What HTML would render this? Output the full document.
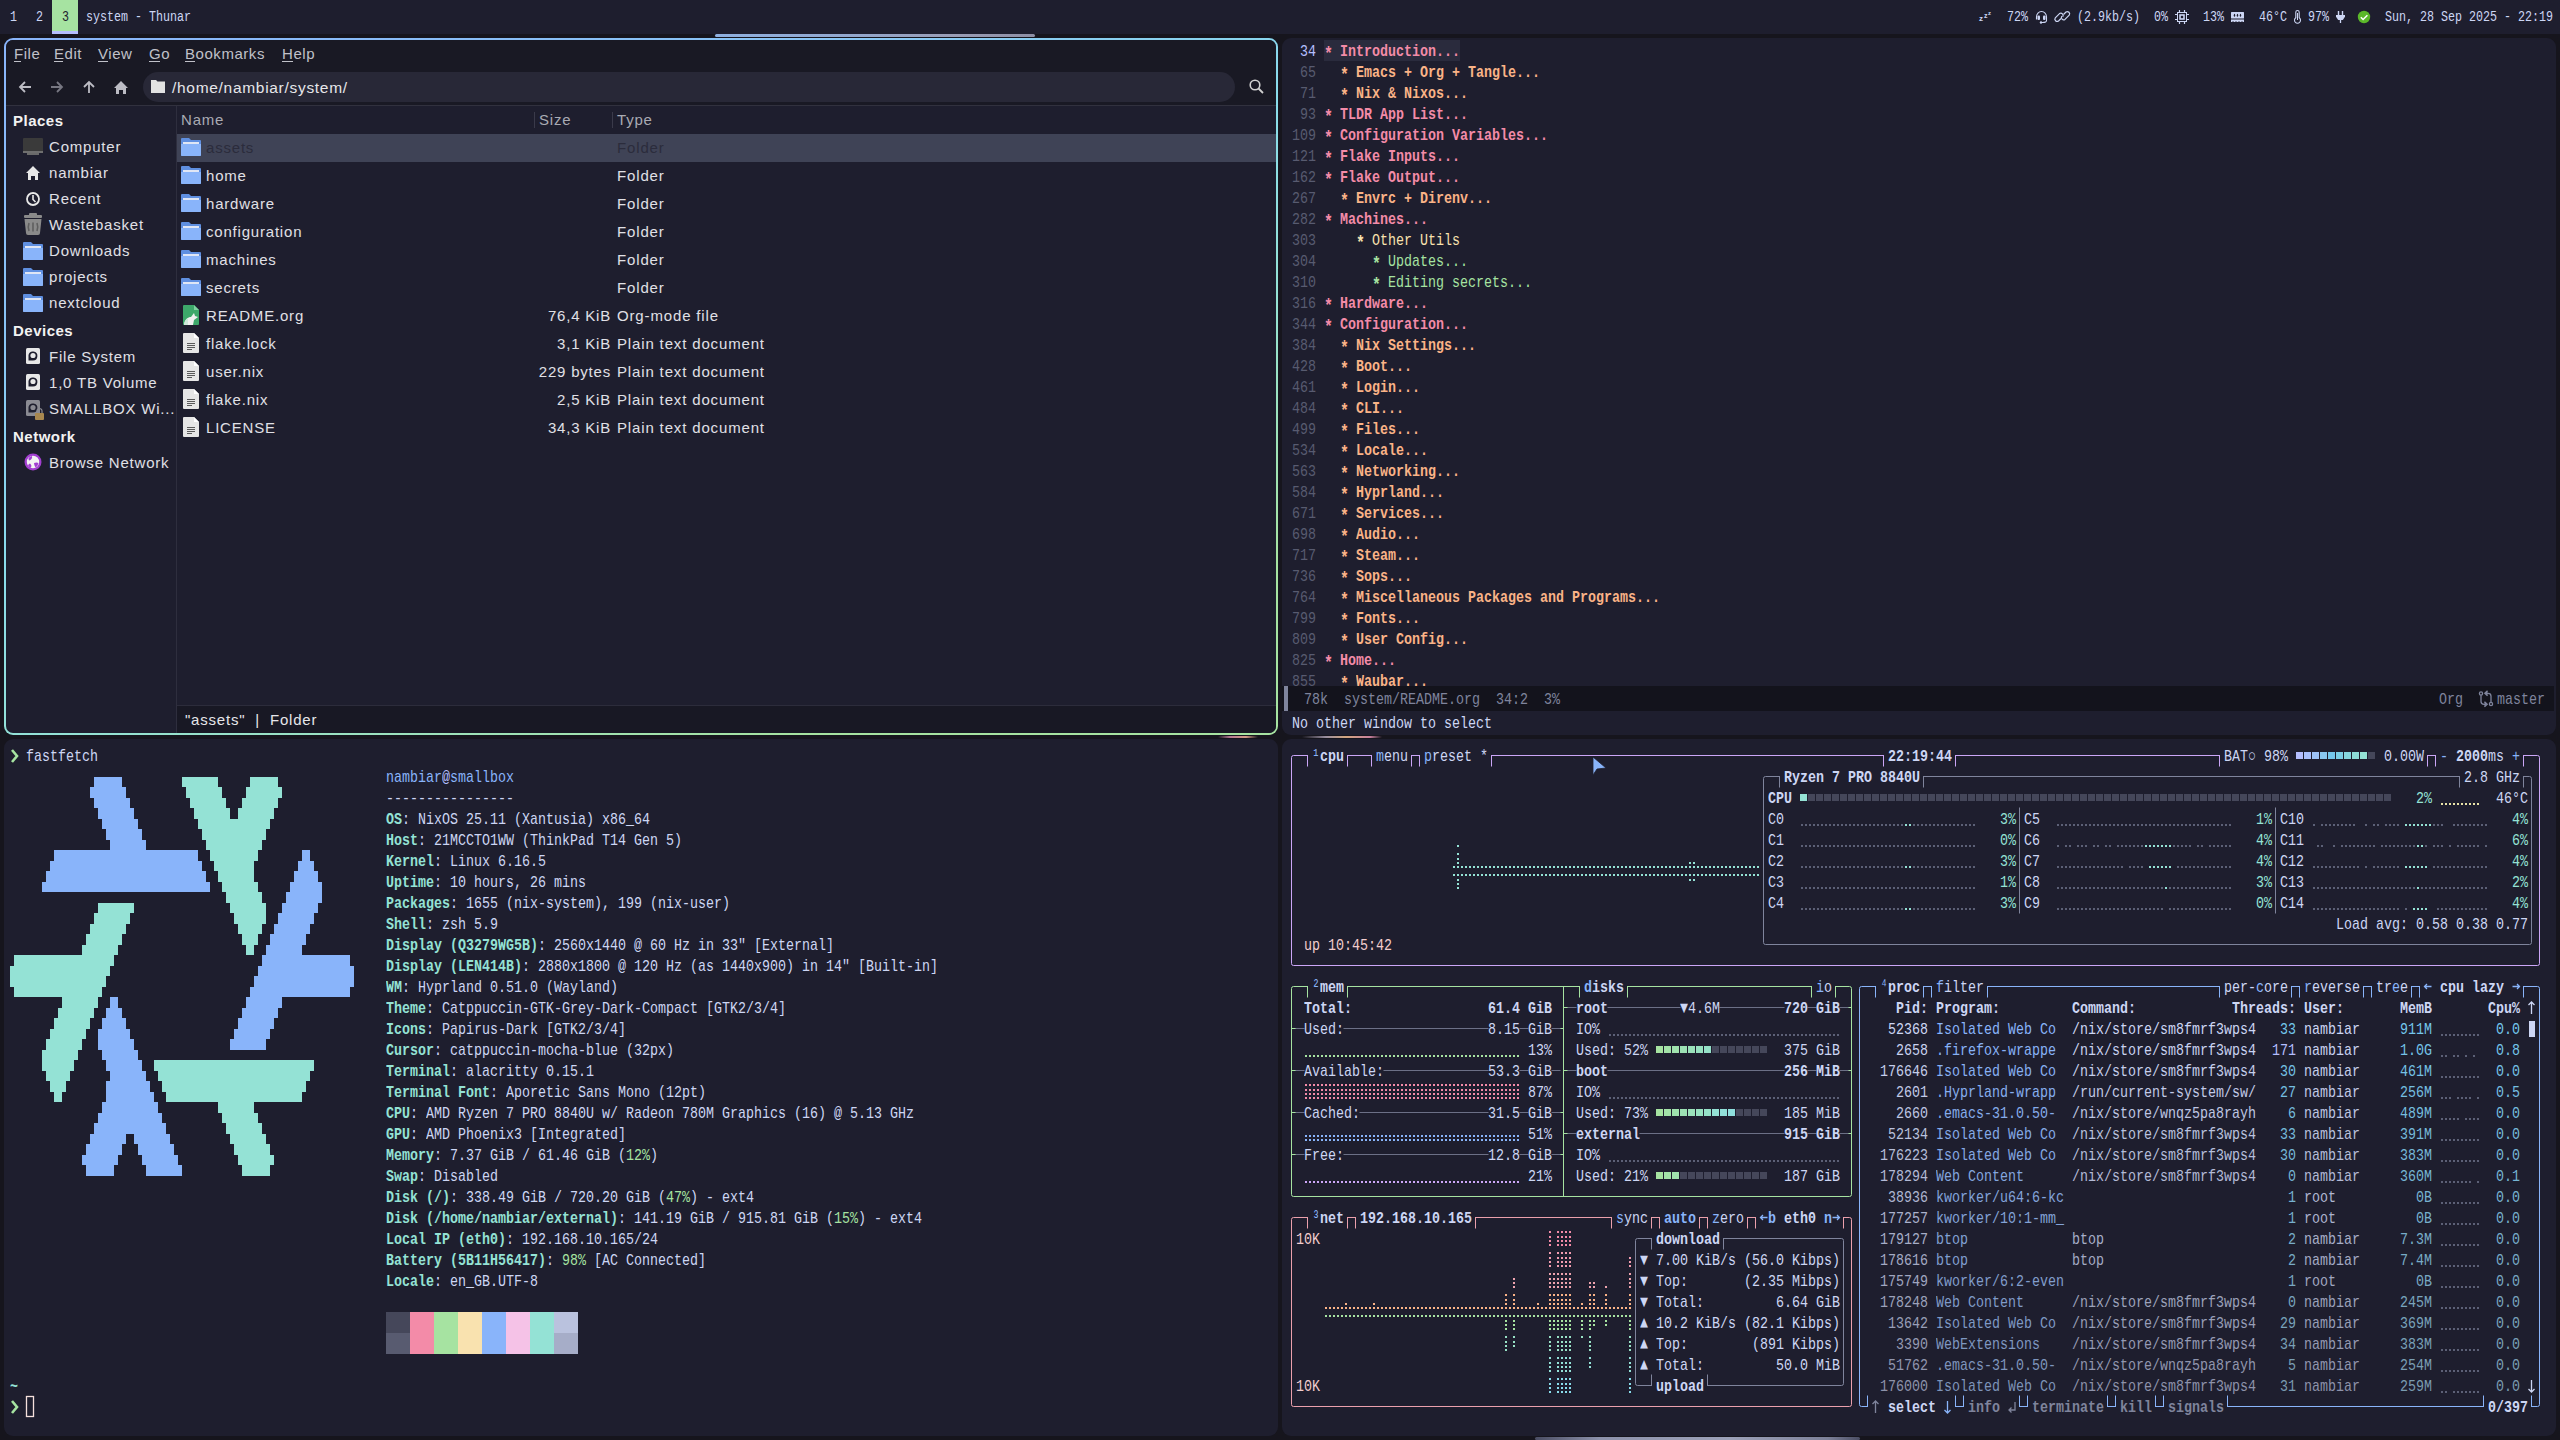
<!DOCTYPE html><html><head><meta charset="utf-8"><style>
html,body{margin:0;padding:0;width:2560px;height:1440px;overflow:hidden;background:#16151d;}
.abs{position:absolute;}
.m{position:absolute;white-space:pre;font-family:"Liberation Mono",monospace;font-size:17px;line-height:21px;transform:scaleX(.78431);transform-origin:0 0;}
.t{position:absolute;white-space:pre;font-family:"Liberation Mono",monospace;font-size:14px;line-height:18px;transform:scaleX(.83333);transform-origin:0 0;}
.s{position:absolute;white-space:pre;font-family:"Liberation Sans",sans-serif;}
.win{position:absolute;overflow:hidden;border-radius:9px;background:#1e1e2e;}
svg{position:absolute;overflow:visible}
</style></head><body><div class="abs" style="left:0;top:0;width:2560px;height:34px;background:#1e1e2e"></div><div class="abs" style="left:52px;top:0;width:26px;height:31px;background:#a6e3a1"></div><div class="abs" style="left:52px;top:31px;width:26px;height:3px;background:#b4befe"></div><span class="t" style="left:9.5px;top:8.27px;color:#cdd6f4;">1</span><span class="t" style="left:35.5px;top:8.27px;color:#cdd6f4;">2</span><span class="t" style="left:61.5px;top:8.27px;color:#1e1e2e;">3</span><span class="t" style="left:86px;top:8.27px;color:#cdd6f4;">system - Thunar</span><span class="t" style="left:2007px;top:8.27px;color:#cdd6f4;">72%</span><span class="t" style="left:2077px;top:8.27px;color:#cdd6f4;">(2.9kb/s)</span><span class="t" style="left:2154px;top:8.27px;color:#cdd6f4;">0%</span><span class="t" style="left:2203px;top:8.27px;color:#cdd6f4;">13%</span><span class="t" style="left:2259px;top:8.27px;color:#cdd6f4;">46°C</span><span class="t" style="left:2308px;top:8.27px;color:#cdd6f4;">97%</span><span class="t" style="left:2385px;top:8.27px;color:#cdd6f4;">Sun, 28 Sep 2025 - 22:19</span><svg width="2560" height="1440" style="left:0;top:0"><text x="1979" y="21" font-family="Liberation Sans" font-size="8" font-weight="bold" fill="#cdd6f4">z</text><text x="1984" y="18" font-family="Liberation Sans" font-size="7" font-weight="bold" fill="#cdd6f4">z</text><text x="1988" y="15" font-family="Liberation Sans" font-size="6" font-weight="bold" fill="#cdd6f4">z</text><path d="M2036.5 19.5V17A5 5.5 0 0 1 2046.5 17V20.5Q2046.5 22.5 2042.5 22.5H2041.5" stroke="#cdd6f4" stroke-width="1.1" fill="none"/><rect x="2037.5" y="15.5" width="2.5" height="4.5" rx="1" fill="#cdd6f4"/><rect x="2043" y="15.5" width="2.5" height="4.5" rx="1" fill="#cdd6f4"/><circle cx="2041" cy="22.5" r="1.2" fill="#cdd6f4"/><g stroke="#cdd6f4" stroke-width="1.2" fill="none"><path d="M2061 18.5L2058.5 21A2.3 2.3 0 0 1 2055.3 17.8L2059.5 13.6A2.3 2.3 0 0 1 2062.7 16.8"/><path d="M2063.5 14.5L2066 12A2.3 2.3 0 0 1 2069.2 15.2L2065 19.4A2.3 2.3 0 0 1 2061.8 16.2"/></g><rect x="2177" y="12" width="10" height="10" fill="#cdd6f4"/><rect x="2178.6" y="13.6" width="6.8" height="6.8" stroke="#1e1e2e" stroke-width="1.2" fill="none"/><rect x="2180.8" y="15.8" width="2.4" height="2.4" fill="#1e1e2e"/><path d="M2179.5 10v2M2184.5 10v2M2179.5 22v2M2184.5 22v2M2175 14.5h2M2175 19.5h2M2187 14.5h2M2187 19.5h2" stroke="#cdd6f4" stroke-width="1.2"/><rect x="2231" y="12" width="13" height="6.5" rx="0.5" fill="#cdd6f4"/><ellipse cx="2234.5" cy="15.2" rx="0.7" ry="1.5" fill="#1e1e2e"/><ellipse cx="2237.5" cy="15.2" rx="0.7" ry="1.5" fill="#1e1e2e"/><ellipse cx="2240.5" cy="15.2" rx="0.7" ry="1.5" fill="#1e1e2e"/><rect x="2231" y="19.5" width="13" height="2.5" fill="#cdd6f4"/><path d="M2233 22v-1M2236 22v-1M2239 22v-1M2242 22v-1" stroke="#1e1e2e" stroke-width="0.8"/><path d="M2295.8 17.8V12.2A1.7 1.7 0 0 1 2299.2 12.2V17.8A3 3 0 1 1 2295.8 17.8Z" stroke="#cdd6f4" stroke-width="1.1" fill="none"/><path d="M2297.5 13v7" stroke="#cdd6f4" stroke-width="1"/><path d="M2338.5 11v4M2342.5 11v4" stroke="#cdd6f4" stroke-width="1.4"/><path d="M2336 15h9v1.8l-2.2 3.2h-4.6l-2.2-3.2z" fill="#cdd6f4"/><path d="M2340.5 20v3" stroke="#cdd6f4" stroke-width="1.3"/><circle cx="2364" cy="17" r="6.2" fill="#5bb82a"/><path d="M2360.8 17.2l2.3 2.3l4.3-4.3" stroke="#ffffff" stroke-width="1.5" fill="none"/></svg><div class="win" style="left:1282px;top:38px;width:1274px;height:697px"></div><div class="win" style="left:4px;top:739px;width:1274px;height:697px"></div><div class="win" style="left:1282px;top:739px;width:1274px;height:697px"></div><div class="abs" style="left:715px;top:34px;width:320px;height:3px;border-radius:2px;background:linear-gradient(90deg,#8fb0e0,#93a8cf 40%,#9a9db5 75%,#8e8fa5)"></div><div class="abs" style="left:1535px;top:1437px;width:325px;height:3px;border-radius:2px;background:linear-gradient(90deg,#4a4d63,#8d92ab 20%,#9ca1b8 60%,#7d8199 90%,#4a4d63)"></div><div class="abs" style="left:1218px;top:736px;width:40px;height:2px;background:linear-gradient(90deg,#16151d,#b57a93 30%,#d49a86 70%,#16151d)"></div><div class="abs" style="left:1302px;top:736px;width:80px;height:2px;background:linear-gradient(90deg,#16151d,#9a8fa0 30%,#d3a67f 55%,#c8809c 85%,#16151d)"></div><div class="abs" style="left:4px;top:38px;width:1274px;height:697px;border-radius:9px;background:linear-gradient(160deg,#89b4fa 0%,#89c4f5 25%,#89dceb 45%,#94e2d5 62%,#a6e3a1 85%,#a6e3a1 100%)"></div><div class="abs" style="left:6px;top:40px;width:1270px;height:693px;border-radius:7px;background:#1e1e2e;overflow:hidden"><div class="abs" style="left:0;top:0;width:1270px;height:65px;background:#191924"></div><div class="abs" style="left:0;top:65px;width:1270px;height:1px;background:#31313e"></div><div class="abs" style="left:170px;top:66px;width:1px;height:627px;background:#2e2e3e"></div><div class="abs" style="left:171px;top:665px;width:1099px;height:1px;background:#2c2c3b"></div><div class="abs" style="left:171px;top:666px;width:1099px;height:27px;background:#181824"></div><div class="abs" style="left:171px;top:94px;width:1099px;height:28px;background:#3f4356"></div><div class="abs" style="left:137px;top:32px;width:1092px;height:30px;border-radius:15px;background:#282837"></div><div class="abs" style="left:528px;top:72px;width:1px;height:16px;background:#3a3a4a"></div><div class="abs" style="left:606px;top:72px;width:1px;height:16px;background:#3a3a4a"></div></div><span class="s" style="left:14px;top:44.30px;font-size:15px;line-height:19px;color:#c0c1c9;letter-spacing:0.55px;">File</span><span class="s" style="left:54px;top:44.30px;font-size:15px;line-height:19px;color:#c0c1c9;letter-spacing:0.55px;">Edit</span><span class="s" style="left:98px;top:44.30px;font-size:15px;line-height:19px;color:#c0c1c9;letter-spacing:0.55px;">View</span><span class="s" style="left:149px;top:44.30px;font-size:15px;line-height:19px;color:#c0c1c9;letter-spacing:0.55px;">Go</span><span class="s" style="left:185px;top:44.30px;font-size:15px;line-height:19px;color:#c0c1c9;letter-spacing:0.55px;">Bookmarks</span><span class="s" style="left:282px;top:44.30px;font-size:15px;line-height:19px;color:#c0c1c9;letter-spacing:0.55px;">Help</span><svg width="2560" height="1440" style="left:0;top:0"><rect x="14" y="61" width="7" height="1" fill="#c0c1c9"/><rect x="54" y="61" width="9" height="1" fill="#c0c1c9"/><rect x="98" y="61" width="10" height="1" fill="#c0c1c9"/><rect x="149" y="61" width="11" height="1" fill="#c0c1c9"/><rect x="185" y="61" width="10" height="1" fill="#c0c1c9"/><rect x="282" y="61" width="11" height="1" fill="#c0c1c9"/><path d="M31 87H20M25 82L20 87L25 92" stroke="#bcbcc4" stroke-width="1.8" fill="none"/><path d="M51 87H62M57 82L62 87L57 92" stroke="#777782" stroke-width="1.8" fill="none"/><path d="M89 93V82M84 87L89 82L94 87" stroke="#bcbcc4" stroke-width="1.8" fill="none"/><path d="M114 88L121 81L128 88H126V94H123V90H119V94H116V88Z" fill="#bcbcc4"/><path d="M151 80h5l1.5 1.5h7.5v11.5h-14z" fill="#e2e2e2"/><circle cx="1255" cy="85" r="4.8" stroke="#d0d0d0" stroke-width="1.6" fill="none"/><path d="M1258.5 88.5L1263 93" stroke="#d0d0d0" stroke-width="1.8"/><rect x="23" y="138" width="20" height="14" rx="1" fill="#3a3a3a"/><rect x="23" y="151" width="20" height="2" fill="#6f6f6f"/><rect x="27" y="153" width="12" height="2" fill="#6a6a6a"/><path d="M26 173L33 166L40 173H38V180H35V176H31V180H28V173Z" fill="#e8e8e8"/><circle cx="33" cy="199" r="6" stroke="#e8e8e8" stroke-width="1.8" fill="none"/><path d="M33 195V199.5L35.5 202" stroke="#e8e8e8" stroke-width="1.6" fill="none"/><rect x="24" y="215" width="18" height="3" rx="1" fill="#8a8a8a"/><rect x="29" y="213" width="8" height="3" rx="1" fill="#8a8a8a"/><path d="M24.5 219h17l-1.5 14a2 2 0 0 1-2 2h-10a2 2 0 0 1-2-2z" fill="#8a8a8a"/><path d="M29 223q-1.5 4 0 8M33 222.5v9M37 223q1.5 4 0 8" stroke="#5e5e5e" stroke-width="1.6" fill="none"/><path d="M23 243a1 1 0 0 1 1-1h7l2 2h9a1 1 0 0 1 1 1v14a1 1 0 0 1-1 1h-18a1 1 0 0 1-1-1z" fill="#5f8fe0"/><rect x="25" y="246" width="16" height="2" fill="#dfe6f5"/><path d="M23 248h20v11a1 1 0 0 1-1 1h-18a1 1 0 0 1-1-1z" fill="#89b4fa"/><path d="M23 269a1 1 0 0 1 1-1h7l2 2h9a1 1 0 0 1 1 1v14a1 1 0 0 1-1 1h-18a1 1 0 0 1-1-1z" fill="#5f8fe0"/><rect x="25" y="272" width="16" height="2" fill="#dfe6f5"/><path d="M23 274h20v11a1 1 0 0 1-1 1h-18a1 1 0 0 1-1-1z" fill="#89b4fa"/><path d="M23 295a1 1 0 0 1 1-1h7l2 2h9a1 1 0 0 1 1 1v14a1 1 0 0 1-1 1h-18a1 1 0 0 1-1-1z" fill="#5f8fe0"/><rect x="25" y="298" width="16" height="2" fill="#dfe6f5"/><path d="M23 300h20v11a1 1 0 0 1-1 1h-18a1 1 0 0 1-1-1z" fill="#89b4fa"/><rect x="26" y="348" width="14" height="16" rx="1.5" fill="#e8e8e8"/><path d="M28.5 360.5V355A4.5 4.5 0 1 1 33 360.5Z" fill="#1e1e2e"/><circle cx="33" cy="355.5" r="2.6" fill="#e8e8e8"/><rect x="26" y="374" width="14" height="16" rx="1.5" fill="#e8e8e8"/><path d="M28.5 386.5V381A4.5 4.5 0 1 1 33 386.5Z" fill="#1e1e2e"/><circle cx="33" cy="381.5" r="2.6" fill="#e8e8e8"/><rect x="26" y="400" width="14" height="16" rx="1.5" fill="#8a8a92"/><path d="M28.5 412.5V407A4.5 4.5 0 1 1 33 412.5Z" fill="#1e1e2e"/><circle cx="33" cy="407.5" r="2.6" fill="#8a8a92"/><rect x="35" y="413" width="9" height="7" rx="1" fill="#a8874f"/><path d="M37 413v-2a2.5 2.5 0 0 1 5 0v2" stroke="#8a8a92" stroke-width="1.2" fill="none"/><circle cx="33" cy="462" r="8.5" fill="#a23fd0"/><circle cx="33" cy="462" r="6.2" fill="#f4f4f4"/><path d="M28.5 458q1.5-1.5 3.5-2q0.5 1.5-0.5 3q-1 1-2.5 1.5q-0.5-1-0.5-2.5zM34 463q2.5-1 4.5 0q-0.5 3-3 4.5q-1.5-2-1.5-4.5zM30 463.5q1 0.5 1.5 2.5q-0.5 1.5-1.5 2.3q-1.5-1.5-2-3q1-1.5 2-1.8z" fill="#a23fd0"/><path d="M181 139a1 1 0 0 1 1-1h7l2 2h9a1 1 0 0 1 1 1v14a1 1 0 0 1-1 1h-18a1 1 0 0 1-1-1z" fill="#5f8fe0"/><rect x="183" y="142" width="16" height="2" fill="#dfe6f5"/><path d="M181 144h20v11a1 1 0 0 1-1 1h-18a1 1 0 0 1-1-1z" fill="#89b4fa"/><path d="M181 167a1 1 0 0 1 1-1h7l2 2h9a1 1 0 0 1 1 1v14a1 1 0 0 1-1 1h-18a1 1 0 0 1-1-1z" fill="#5f8fe0"/><rect x="183" y="170" width="16" height="2" fill="#dfe6f5"/><path d="M181 172h20v11a1 1 0 0 1-1 1h-18a1 1 0 0 1-1-1z" fill="#89b4fa"/><path d="M181 195a1 1 0 0 1 1-1h7l2 2h9a1 1 0 0 1 1 1v14a1 1 0 0 1-1 1h-18a1 1 0 0 1-1-1z" fill="#5f8fe0"/><rect x="183" y="198" width="16" height="2" fill="#dfe6f5"/><path d="M181 200h20v11a1 1 0 0 1-1 1h-18a1 1 0 0 1-1-1z" fill="#89b4fa"/><path d="M181 223a1 1 0 0 1 1-1h7l2 2h9a1 1 0 0 1 1 1v14a1 1 0 0 1-1 1h-18a1 1 0 0 1-1-1z" fill="#5f8fe0"/><rect x="183" y="226" width="16" height="2" fill="#dfe6f5"/><path d="M181 228h20v11a1 1 0 0 1-1 1h-18a1 1 0 0 1-1-1z" fill="#89b4fa"/><path d="M181 251a1 1 0 0 1 1-1h7l2 2h9a1 1 0 0 1 1 1v14a1 1 0 0 1-1 1h-18a1 1 0 0 1-1-1z" fill="#5f8fe0"/><rect x="183" y="254" width="16" height="2" fill="#dfe6f5"/><path d="M181 256h20v11a1 1 0 0 1-1 1h-18a1 1 0 0 1-1-1z" fill="#89b4fa"/><path d="M181 279a1 1 0 0 1 1-1h7l2 2h9a1 1 0 0 1 1 1v14a1 1 0 0 1-1 1h-18a1 1 0 0 1-1-1z" fill="#5f8fe0"/><rect x="183" y="282" width="16" height="2" fill="#dfe6f5"/><path d="M181 284h20v11a1 1 0 0 1-1 1h-18a1 1 0 0 1-1-1z" fill="#89b4fa"/><path d="M184 305h10l5 5v14a1 1 0 0 1-1 1h-14a1 1 0 0 1-1-1v-18a1 1 0 0 1 1-1z" fill="#3da86a"/><path d="M194 305v5h5z" fill="#7fd1a0"/><path d="M184 325c1-6 4-8 7-8l3-4l1 3l3 1l-4 3l-1 5z" fill="#f0f0f0"/><path d="M184 325c0-4 2-6 4-7v7z" fill="#cfe9d9"/><path d="M184 333h10l5 5v14a1 1 0 0 1-1 1h-14a1 1 0 0 1-1-1v-18a1 1 0 0 1 1-1z" fill="#e6e6e6"/><path d="M194 333v5h5z" fill="#ffffff"/><path d="M187 343.5h8M187 345.5h8M187 347.5h8M187 349.5h5" stroke="#5a5a5a" stroke-width="1" fill="none"/><path d="M184 361h10l5 5v14a1 1 0 0 1-1 1h-14a1 1 0 0 1-1-1v-18a1 1 0 0 1 1-1z" fill="#e6e6e6"/><path d="M194 361v5h5z" fill="#ffffff"/><path d="M187 371.5h8M187 373.5h8M187 375.5h8M187 377.5h5" stroke="#5a5a5a" stroke-width="1" fill="none"/><path d="M184 389h10l5 5v14a1 1 0 0 1-1 1h-14a1 1 0 0 1-1-1v-18a1 1 0 0 1 1-1z" fill="#e6e6e6"/><path d="M194 389v5h5z" fill="#ffffff"/><path d="M187 399.5h8M187 401.5h8M187 403.5h8M187 405.5h5" stroke="#5a5a5a" stroke-width="1" fill="none"/><path d="M184 417h10l5 5v14a1 1 0 0 1-1 1h-14a1 1 0 0 1-1-1v-18a1 1 0 0 1 1-1z" fill="#e6e6e6"/><path d="M194 417v5h5z" fill="#ffffff"/><path d="M187 427.5h8M187 429.5h8M187 431.5h8M187 433.5h5" stroke="#5a5a5a" stroke-width="1" fill="none"/></svg><span class="s" style="left:172px;top:78.13px;font-size:15.5px;line-height:19px;color:#e6e6ea;letter-spacing:0.7px;">/home/nambiar/system/</span><span class="s" style="left:13px;top:111.30px;font-size:15px;line-height:19px;color:#f2f2f2;font-weight:bold;letter-spacing:0.5px;">Places</span><span class="s" style="left:49px;top:137.30px;font-size:15px;line-height:19px;color:#e0e0e6;letter-spacing:0.8px;">Computer</span><span class="s" style="left:49px;top:163.30px;font-size:15px;line-height:19px;color:#e0e0e6;letter-spacing:0.8px;">nambiar</span><span class="s" style="left:49px;top:189.30px;font-size:15px;line-height:19px;color:#e0e0e6;letter-spacing:0.8px;">Recent</span><span class="s" style="left:49px;top:215.30px;font-size:15px;line-height:19px;color:#e0e0e6;letter-spacing:0.8px;">Wastebasket</span><span class="s" style="left:49px;top:241.30px;font-size:15px;line-height:19px;color:#e0e0e6;letter-spacing:0.8px;">Downloads</span><span class="s" style="left:49px;top:267.30px;font-size:15px;line-height:19px;color:#e0e0e6;letter-spacing:0.8px;">projects</span><span class="s" style="left:49px;top:293.30px;font-size:15px;line-height:19px;color:#e0e0e6;letter-spacing:0.8px;">nextcloud</span><span class="s" style="left:13px;top:321.30px;font-size:15px;line-height:19px;color:#f2f2f2;font-weight:bold;letter-spacing:0.5px;">Devices</span><span class="s" style="left:49px;top:347.30px;font-size:15px;line-height:19px;color:#e0e0e6;letter-spacing:0.8px;">File System</span><span class="s" style="left:49px;top:373.30px;font-size:15px;line-height:19px;color:#e0e0e6;letter-spacing:0.8px;">1,0 TB Volume</span><span class="s" style="left:49px;top:399.30px;font-size:15px;line-height:19px;color:#e0e0e6;letter-spacing:0.8px;">SMALLBOX Wi...</span><span class="s" style="left:13px;top:427.30px;font-size:15px;line-height:19px;color:#f2f2f2;font-weight:bold;letter-spacing:0.5px;">Network</span><span class="s" style="left:49px;top:453.30px;font-size:15px;line-height:19px;color:#e0e0e6;letter-spacing:0.8px;">Browse Network</span><span class="s" style="left:181px;top:110.30px;font-size:15px;line-height:19px;color:#a9aab3;letter-spacing:0.8px;">Name</span><span class="s" style="left:539px;top:110.30px;font-size:15px;line-height:19px;color:#a9aab3;letter-spacing:0.8px;">Size</span><span class="s" style="left:617px;top:110.30px;font-size:15px;line-height:19px;color:#a9aab3;letter-spacing:0.8px;">Type</span><span class="s" style="left:206px;top:138.30px;font-size:15px;line-height:19px;color:#2b2c3c;letter-spacing:0.8px;">assets</span><span class="s" style="left:617px;top:138.30px;font-size:15px;line-height:19px;color:#2b2c3c;letter-spacing:0.85px;">Folder</span><span class="s" style="left:206px;top:166.30px;font-size:15px;line-height:19px;color:#e0e0e6;letter-spacing:0.8px;">home</span><span class="s" style="left:617px;top:166.30px;font-size:15px;line-height:19px;color:#e0e0e6;letter-spacing:0.85px;">Folder</span><span class="s" style="left:206px;top:194.30px;font-size:15px;line-height:19px;color:#e0e0e6;letter-spacing:0.8px;">hardware</span><span class="s" style="left:617px;top:194.30px;font-size:15px;line-height:19px;color:#e0e0e6;letter-spacing:0.85px;">Folder</span><span class="s" style="left:206px;top:222.30px;font-size:15px;line-height:19px;color:#e0e0e6;letter-spacing:0.8px;">configuration</span><span class="s" style="left:617px;top:222.30px;font-size:15px;line-height:19px;color:#e0e0e6;letter-spacing:0.85px;">Folder</span><span class="s" style="left:206px;top:250.30px;font-size:15px;line-height:19px;color:#e0e0e6;letter-spacing:0.8px;">machines</span><span class="s" style="left:617px;top:250.30px;font-size:15px;line-height:19px;color:#e0e0e6;letter-spacing:0.85px;">Folder</span><span class="s" style="left:206px;top:278.30px;font-size:15px;line-height:19px;color:#e0e0e6;letter-spacing:0.8px;">secrets</span><span class="s" style="left:617px;top:278.30px;font-size:15px;line-height:19px;color:#e0e0e6;letter-spacing:0.85px;">Folder</span><span class="s" style="left:206px;top:306.30px;font-size:15px;line-height:19px;color:#e0e0e6;letter-spacing:0.8px;">README.org</span><span class="s" style="left:250px;top:306.30px;font-size:15px;line-height:19px;color:#e0e0e6;width:361px;text-align:right;letter-spacing:0.8px;">76,4 KiB</span><span class="s" style="left:617px;top:306.30px;font-size:15px;line-height:19px;color:#e0e0e6;letter-spacing:0.85px;">Org-mode file</span><span class="s" style="left:206px;top:334.30px;font-size:15px;line-height:19px;color:#e0e0e6;letter-spacing:0.8px;">flake.lock</span><span class="s" style="left:250px;top:334.30px;font-size:15px;line-height:19px;color:#e0e0e6;width:361px;text-align:right;letter-spacing:0.8px;">3,1 KiB</span><span class="s" style="left:617px;top:334.30px;font-size:15px;line-height:19px;color:#e0e0e6;letter-spacing:0.85px;">Plain text document</span><span class="s" style="left:206px;top:362.30px;font-size:15px;line-height:19px;color:#e0e0e6;letter-spacing:0.8px;">user.nix</span><span class="s" style="left:250px;top:362.30px;font-size:15px;line-height:19px;color:#e0e0e6;width:361px;text-align:right;letter-spacing:0.8px;">229 bytes</span><span class="s" style="left:617px;top:362.30px;font-size:15px;line-height:19px;color:#e0e0e6;letter-spacing:0.85px;">Plain text document</span><span class="s" style="left:206px;top:390.30px;font-size:15px;line-height:19px;color:#e0e0e6;letter-spacing:0.8px;">flake.nix</span><span class="s" style="left:250px;top:390.30px;font-size:15px;line-height:19px;color:#e0e0e6;width:361px;text-align:right;letter-spacing:0.8px;">2,5 KiB</span><span class="s" style="left:617px;top:390.30px;font-size:15px;line-height:19px;color:#e0e0e6;letter-spacing:0.85px;">Plain text document</span><span class="s" style="left:206px;top:418.30px;font-size:15px;line-height:19px;color:#e0e0e6;letter-spacing:0.8px;">LICENSE</span><span class="s" style="left:250px;top:418.30px;font-size:15px;line-height:19px;color:#e0e0e6;width:361px;text-align:right;letter-spacing:0.8px;">34,3 KiB</span><span class="s" style="left:617px;top:418.30px;font-size:15px;line-height:19px;color:#e0e0e6;letter-spacing:0.85px;">Plain text document</span><span class="s" style="left:185px;top:710.30px;font-size:15px;line-height:19px;color:#e6e6ea;letter-spacing:0.8px;">"assets"  |  Folder</span><div class="abs" style="left:1324px;top:40px;width:136px;height:21px;background:#2a2b3d"></div><span class="m" style="left:1300px;top:41px;color:#b4befe;">34</span><span class="m" style="left:1323.5px;top:44px;color:#f38ba8;font-weight:bold;font-size:19px;">*</span><span class="m" style="left:1340px;top:41px;color:#f38ba8;font-weight:bold;">Introduction...</span><span class="m" style="left:1300px;top:62px;color:#585b70;">65</span><span class="m" style="left:1339.5px;top:65px;color:#fab387;font-weight:bold;font-size:19px;">*</span><span class="m" style="left:1356px;top:62px;color:#fab387;font-weight:bold;">Emacs + Org + Tangle...</span><span class="m" style="left:1300px;top:83px;color:#585b70;">71</span><span class="m" style="left:1339.5px;top:86px;color:#fab387;font-weight:bold;font-size:19px;">*</span><span class="m" style="left:1356px;top:83px;color:#fab387;font-weight:bold;">Nix &amp; Nixos...</span><span class="m" style="left:1300px;top:104px;color:#585b70;">93</span><span class="m" style="left:1323.5px;top:107px;color:#f38ba8;font-weight:bold;font-size:19px;">*</span><span class="m" style="left:1340px;top:104px;color:#f38ba8;font-weight:bold;">TLDR App List...</span><span class="m" style="left:1292px;top:125px;color:#585b70;">109</span><span class="m" style="left:1323.5px;top:128px;color:#f38ba8;font-weight:bold;font-size:19px;">*</span><span class="m" style="left:1340px;top:125px;color:#f38ba8;font-weight:bold;">Configuration Variables...</span><span class="m" style="left:1292px;top:146px;color:#585b70;">121</span><span class="m" style="left:1323.5px;top:149px;color:#f38ba8;font-weight:bold;font-size:19px;">*</span><span class="m" style="left:1340px;top:146px;color:#f38ba8;font-weight:bold;">Flake Inputs...</span><span class="m" style="left:1292px;top:167px;color:#585b70;">162</span><span class="m" style="left:1323.5px;top:170px;color:#f38ba8;font-weight:bold;font-size:19px;">*</span><span class="m" style="left:1340px;top:167px;color:#f38ba8;font-weight:bold;">Flake Output...</span><span class="m" style="left:1292px;top:188px;color:#585b70;">267</span><span class="m" style="left:1339.5px;top:191px;color:#fab387;font-weight:bold;font-size:19px;">*</span><span class="m" style="left:1356px;top:188px;color:#fab387;font-weight:bold;">Envrc + Direnv...</span><span class="m" style="left:1292px;top:209px;color:#585b70;">282</span><span class="m" style="left:1323.5px;top:212px;color:#f38ba8;font-weight:bold;font-size:19px;">*</span><span class="m" style="left:1340px;top:209px;color:#f38ba8;font-weight:bold;">Machines...</span><span class="m" style="left:1292px;top:230px;color:#585b70;">303</span><span class="m" style="left:1355.5px;top:233px;color:#f9e2af;font-weight:bold;font-size:19px;">*</span><span class="m" style="left:1372px;top:230px;color:#f9e2af;">Other Utils</span><span class="m" style="left:1292px;top:251px;color:#585b70;">304</span><span class="m" style="left:1371.5px;top:254px;color:#a6e3a1;font-weight:bold;font-size:19px;">*</span><span class="m" style="left:1388px;top:251px;color:#a6e3a1;">Updates...</span><span class="m" style="left:1292px;top:272px;color:#585b70;">310</span><span class="m" style="left:1371.5px;top:275px;color:#a6e3a1;font-weight:bold;font-size:19px;">*</span><span class="m" style="left:1388px;top:272px;color:#a6e3a1;">Editing secrets...</span><span class="m" style="left:1292px;top:293px;color:#585b70;">316</span><span class="m" style="left:1323.5px;top:296px;color:#f38ba8;font-weight:bold;font-size:19px;">*</span><span class="m" style="left:1340px;top:293px;color:#f38ba8;font-weight:bold;">Hardware...</span><span class="m" style="left:1292px;top:314px;color:#585b70;">344</span><span class="m" style="left:1323.5px;top:317px;color:#f38ba8;font-weight:bold;font-size:19px;">*</span><span class="m" style="left:1340px;top:314px;color:#f38ba8;font-weight:bold;">Configuration...</span><span class="m" style="left:1292px;top:335px;color:#585b70;">384</span><span class="m" style="left:1339.5px;top:338px;color:#fab387;font-weight:bold;font-size:19px;">*</span><span class="m" style="left:1356px;top:335px;color:#fab387;font-weight:bold;">Nix Settings...</span><span class="m" style="left:1292px;top:356px;color:#585b70;">428</span><span class="m" style="left:1339.5px;top:359px;color:#fab387;font-weight:bold;font-size:19px;">*</span><span class="m" style="left:1356px;top:356px;color:#fab387;font-weight:bold;">Boot...</span><span class="m" style="left:1292px;top:377px;color:#585b70;">461</span><span class="m" style="left:1339.5px;top:380px;color:#fab387;font-weight:bold;font-size:19px;">*</span><span class="m" style="left:1356px;top:377px;color:#fab387;font-weight:bold;">Login...</span><span class="m" style="left:1292px;top:398px;color:#585b70;">484</span><span class="m" style="left:1339.5px;top:401px;color:#fab387;font-weight:bold;font-size:19px;">*</span><span class="m" style="left:1356px;top:398px;color:#fab387;font-weight:bold;">CLI...</span><span class="m" style="left:1292px;top:419px;color:#585b70;">499</span><span class="m" style="left:1339.5px;top:422px;color:#fab387;font-weight:bold;font-size:19px;">*</span><span class="m" style="left:1356px;top:419px;color:#fab387;font-weight:bold;">Files...</span><span class="m" style="left:1292px;top:440px;color:#585b70;">534</span><span class="m" style="left:1339.5px;top:443px;color:#fab387;font-weight:bold;font-size:19px;">*</span><span class="m" style="left:1356px;top:440px;color:#fab387;font-weight:bold;">Locale...</span><span class="m" style="left:1292px;top:461px;color:#585b70;">563</span><span class="m" style="left:1339.5px;top:464px;color:#fab387;font-weight:bold;font-size:19px;">*</span><span class="m" style="left:1356px;top:461px;color:#fab387;font-weight:bold;">Networking...</span><span class="m" style="left:1292px;top:482px;color:#585b70;">584</span><span class="m" style="left:1339.5px;top:485px;color:#fab387;font-weight:bold;font-size:19px;">*</span><span class="m" style="left:1356px;top:482px;color:#fab387;font-weight:bold;">Hyprland...</span><span class="m" style="left:1292px;top:503px;color:#585b70;">671</span><span class="m" style="left:1339.5px;top:506px;color:#fab387;font-weight:bold;font-size:19px;">*</span><span class="m" style="left:1356px;top:503px;color:#fab387;font-weight:bold;">Services...</span><span class="m" style="left:1292px;top:524px;color:#585b70;">698</span><span class="m" style="left:1339.5px;top:527px;color:#fab387;font-weight:bold;font-size:19px;">*</span><span class="m" style="left:1356px;top:524px;color:#fab387;font-weight:bold;">Audio...</span><span class="m" style="left:1292px;top:545px;color:#585b70;">717</span><span class="m" style="left:1339.5px;top:548px;color:#fab387;font-weight:bold;font-size:19px;">*</span><span class="m" style="left:1356px;top:545px;color:#fab387;font-weight:bold;">Steam...</span><span class="m" style="left:1292px;top:566px;color:#585b70;">736</span><span class="m" style="left:1339.5px;top:569px;color:#fab387;font-weight:bold;font-size:19px;">*</span><span class="m" style="left:1356px;top:566px;color:#fab387;font-weight:bold;">Sops...</span><span class="m" style="left:1292px;top:587px;color:#585b70;">764</span><span class="m" style="left:1339.5px;top:590px;color:#fab387;font-weight:bold;font-size:19px;">*</span><span class="m" style="left:1356px;top:587px;color:#fab387;font-weight:bold;">Miscellaneous Packages and Programs...</span><span class="m" style="left:1292px;top:608px;color:#585b70;">799</span><span class="m" style="left:1339.5px;top:611px;color:#fab387;font-weight:bold;font-size:19px;">*</span><span class="m" style="left:1356px;top:608px;color:#fab387;font-weight:bold;">Fonts...</span><span class="m" style="left:1292px;top:629px;color:#585b70;">809</span><span class="m" style="left:1339.5px;top:632px;color:#fab387;font-weight:bold;font-size:19px;">*</span><span class="m" style="left:1356px;top:629px;color:#fab387;font-weight:bold;">User Config...</span><span class="m" style="left:1292px;top:650px;color:#585b70;">825</span><span class="m" style="left:1323.5px;top:653px;color:#f38ba8;font-weight:bold;font-size:19px;">*</span><span class="m" style="left:1340px;top:650px;color:#f38ba8;font-weight:bold;">Home...</span><span class="m" style="left:1292px;top:671px;color:#585b70;">855</span><span class="m" style="left:1339.5px;top:674px;color:#fab387;font-weight:bold;font-size:19px;">*</span><span class="m" style="left:1356px;top:671px;color:#fab387;font-weight:bold;">Waubar...</span><div class="abs" style="left:1282px;top:686px;width:1272px;height:25px;background:#13131c"></div><div class="abs" style="left:1284px;top:686px;width:4px;height:25px;background:#7f849c"></div><span class="m" style="left:1304px;top:689px;color:#7f849c;">78k  system/README.org  34:2  3%</span><span class="m" style="left:2439px;top:689px;color:#7f849c;">Org</span><span class="m" style="left:2497px;top:689px;color:#7f849c;">master</span><svg width="2560" height="1440" style="left:0;top:0"><g stroke="#7f849c" stroke-width="1.3" fill="none"><circle cx="2481" cy="693.5" r="1.6"/><path d="M2481 695.2V701.5Q2481 704.3 2484 704.3H2485.5"/><path d="M2484.5 701.8L2487.2 704.3L2484.5 706.8" fill="#7f849c"/><circle cx="2491" cy="704" r="1.6"/><path d="M2491 702.3V696Q2491 693.3 2488 693.3H2486.5"/><path d="M2487.5 690.8L2484.8 693.3L2487.5 695.8" fill="#7f849c"/></g></svg><span class="m" style="left:1292px;top:713px;color:#cdd6f4;">No other window to select</span><svg class="abs" width="2560" height="1440" style="left:0;top:0" shape-rendering="crispEdges"><rect x="94" y="777" width="28" height="10" fill="#89b4fa"/><rect x="182" y="777" width="36" height="10" fill="#94e2d5"/><rect x="250" y="777" width="28" height="10" fill="#94e2d5"/><rect x="90" y="787" width="36" height="11" fill="#89b4fa"/><rect x="186" y="787" width="36" height="11" fill="#94e2d5"/><rect x="246" y="787" width="36" height="11" fill="#94e2d5"/><rect x="94" y="798" width="36" height="10" fill="#89b4fa"/><rect x="190" y="798" width="36" height="10" fill="#94e2d5"/><rect x="242" y="798" width="36" height="10" fill="#94e2d5"/><rect x="98" y="808" width="36" height="11" fill="#89b4fa"/><rect x="194" y="808" width="36" height="11" fill="#94e2d5"/><rect x="238" y="808" width="36" height="11" fill="#94e2d5"/><rect x="102" y="819" width="36" height="10" fill="#89b4fa"/><rect x="198" y="819" width="72" height="10" fill="#94e2d5"/><rect x="106" y="829" width="36" height="11" fill="#89b4fa"/><rect x="202" y="829" width="64" height="11" fill="#94e2d5"/><rect x="110" y="840" width="36" height="10" fill="#89b4fa"/><rect x="206" y="840" width="56" height="10" fill="#94e2d5"/><rect x="54" y="850" width="144" height="11" fill="#89b4fa"/><rect x="210" y="850" width="48" height="11" fill="#94e2d5"/><rect x="302" y="850" width="8" height="11" fill="#89b4fa"/><rect x="50" y="861" width="152" height="10" fill="#89b4fa"/><rect x="214" y="861" width="40" height="10" fill="#94e2d5"/><rect x="298" y="861" width="16" height="10" fill="#89b4fa"/><rect x="46" y="871" width="160" height="11" fill="#89b4fa"/><rect x="218" y="871" width="36" height="11" fill="#94e2d5"/><rect x="294" y="871" width="24" height="11" fill="#89b4fa"/><rect x="42" y="882" width="168" height="10" fill="#89b4fa"/><rect x="222" y="882" width="36" height="10" fill="#94e2d5"/><rect x="290" y="882" width="32" height="10" fill="#89b4fa"/><rect x="226" y="892" width="36" height="11" fill="#94e2d5"/><rect x="286" y="892" width="36" height="11" fill="#89b4fa"/><rect x="98" y="903" width="36" height="10" fill="#94e2d5"/><rect x="230" y="903" width="36" height="10" fill="#94e2d5"/><rect x="282" y="903" width="36" height="10" fill="#89b4fa"/><rect x="94" y="913" width="36" height="11" fill="#94e2d5"/><rect x="234" y="913" width="32" height="11" fill="#94e2d5"/><rect x="278" y="913" width="36" height="11" fill="#89b4fa"/><rect x="90" y="924" width="36" height="10" fill="#94e2d5"/><rect x="238" y="924" width="24" height="10" fill="#94e2d5"/><rect x="274" y="924" width="36" height="10" fill="#89b4fa"/><rect x="86" y="934" width="36" height="11" fill="#94e2d5"/><rect x="242" y="934" width="16" height="11" fill="#94e2d5"/><rect x="270" y="934" width="36" height="11" fill="#89b4fa"/><rect x="82" y="945" width="36" height="10" fill="#94e2d5"/><rect x="246" y="945" width="8" height="10" fill="#94e2d5"/><rect x="266" y="945" width="36" height="10" fill="#89b4fa"/><rect x="14" y="955" width="100" height="11" fill="#94e2d5"/><rect x="262" y="955" width="88" height="11" fill="#89b4fa"/><rect x="10" y="966" width="100" height="10" fill="#94e2d5"/><rect x="258" y="966" width="96" height="10" fill="#89b4fa"/><rect x="10" y="976" width="96" height="11" fill="#94e2d5"/><rect x="254" y="976" width="100" height="11" fill="#89b4fa"/><rect x="14" y="987" width="88" height="10" fill="#94e2d5"/><rect x="250" y="987" width="100" height="10" fill="#89b4fa"/><rect x="62" y="997" width="36" height="11" fill="#94e2d5"/><rect x="110" y="997" width="8" height="11" fill="#89b4fa"/><rect x="246" y="997" width="36" height="11" fill="#89b4fa"/><rect x="58" y="1008" width="36" height="10" fill="#94e2d5"/><rect x="106" y="1008" width="16" height="10" fill="#89b4fa"/><rect x="242" y="1008" width="36" height="10" fill="#89b4fa"/><rect x="54" y="1018" width="36" height="11" fill="#94e2d5"/><rect x="102" y="1018" width="24" height="11" fill="#89b4fa"/><rect x="238" y="1018" width="36" height="11" fill="#89b4fa"/><rect x="50" y="1029" width="36" height="10" fill="#94e2d5"/><rect x="98" y="1029" width="32" height="10" fill="#89b4fa"/><rect x="234" y="1029" width="36" height="10" fill="#89b4fa"/><rect x="46" y="1039" width="36" height="11" fill="#94e2d5"/><rect x="98" y="1039" width="36" height="11" fill="#89b4fa"/><rect x="230" y="1039" width="36" height="11" fill="#89b4fa"/><rect x="42" y="1050" width="36" height="10" fill="#94e2d5"/><rect x="102" y="1050" width="36" height="10" fill="#89b4fa"/><rect x="42" y="1060" width="32" height="11" fill="#94e2d5"/><rect x="106" y="1060" width="36" height="11" fill="#89b4fa"/><rect x="154" y="1060" width="160" height="11" fill="#94e2d5"/><rect x="46" y="1071" width="24" height="10" fill="#94e2d5"/><rect x="110" y="1071" width="36" height="10" fill="#89b4fa"/><rect x="158" y="1071" width="152" height="10" fill="#94e2d5"/><rect x="50" y="1081" width="16" height="11" fill="#94e2d5"/><rect x="106" y="1081" width="44" height="11" fill="#89b4fa"/><rect x="162" y="1081" width="144" height="11" fill="#94e2d5"/><rect x="54" y="1092" width="8" height="10" fill="#94e2d5"/><rect x="106" y="1092" width="48" height="10" fill="#89b4fa"/><rect x="166" y="1092" width="136" height="10" fill="#94e2d5"/><rect x="102" y="1102" width="56" height="11" fill="#89b4fa"/><rect x="218" y="1102" width="36" height="11" fill="#94e2d5"/><rect x="98" y="1113" width="64" height="10" fill="#89b4fa"/><rect x="222" y="1113" width="36" height="10" fill="#94e2d5"/><rect x="94" y="1123" width="72" height="11" fill="#89b4fa"/><rect x="226" y="1123" width="36" height="11" fill="#94e2d5"/><rect x="90" y="1134" width="36" height="10" fill="#89b4fa"/><rect x="134" y="1134" width="36" height="10" fill="#89b4fa"/><rect x="230" y="1134" width="36" height="10" fill="#94e2d5"/><rect x="86" y="1144" width="36" height="11" fill="#89b4fa"/><rect x="138" y="1144" width="36" height="11" fill="#89b4fa"/><rect x="234" y="1144" width="36" height="11" fill="#94e2d5"/><rect x="82" y="1155" width="36" height="10" fill="#89b4fa"/><rect x="142" y="1155" width="36" height="10" fill="#89b4fa"/><rect x="238" y="1155" width="36" height="10" fill="#94e2d5"/><rect x="86" y="1165" width="28" height="11" fill="#89b4fa"/><rect x="146" y="1165" width="36" height="11" fill="#89b4fa"/><rect x="242" y="1165" width="28" height="11" fill="#94e2d5"/></svg><svg class="abs" width="2560" height="1440" style="left:0;top:0"><rect x="386" y="1312" width="24" height="21" fill="#45475a" shape-rendering="crispEdges"/><rect x="386" y="1333" width="24" height="21" fill="#585b70" shape-rendering="crispEdges"/><rect x="410" y="1312" width="24" height="21" fill="#f38ba8" shape-rendering="crispEdges"/><rect x="410" y="1333" width="24" height="21" fill="#f38ba8" shape-rendering="crispEdges"/><rect x="434" y="1312" width="24" height="21" fill="#a6e3a1" shape-rendering="crispEdges"/><rect x="434" y="1333" width="24" height="21" fill="#a6e3a1" shape-rendering="crispEdges"/><rect x="458" y="1312" width="24" height="21" fill="#f9e2af" shape-rendering="crispEdges"/><rect x="458" y="1333" width="24" height="21" fill="#f9e2af" shape-rendering="crispEdges"/><rect x="482" y="1312" width="24" height="21" fill="#89b4fa" shape-rendering="crispEdges"/><rect x="482" y="1333" width="24" height="21" fill="#89b4fa" shape-rendering="crispEdges"/><rect x="506" y="1312" width="24" height="21" fill="#f5c2e7" shape-rendering="crispEdges"/><rect x="506" y="1333" width="24" height="21" fill="#f5c2e7" shape-rendering="crispEdges"/><rect x="530" y="1312" width="24" height="21" fill="#94e2d5" shape-rendering="crispEdges"/><rect x="530" y="1333" width="24" height="21" fill="#94e2d5" shape-rendering="crispEdges"/><rect x="554" y="1312" width="24" height="21" fill="#bac2de" shape-rendering="crispEdges"/><rect x="554" y="1333" width="24" height="21" fill="#a6adc8" shape-rendering="crispEdges"/><path d="M12 750L17 756L12 762" stroke="#a6e3a1" stroke-width="2.6" fill="none" stroke-linejoin="miter"/><path d="M12 1401L17 1407L12 1413" stroke="#a6e3a1" stroke-width="2.6" fill="none" stroke-linejoin="miter"/><rect x="26.5" y="1396.5" width="7" height="20" stroke="#f5e0dc" stroke-width="1.3" fill="none"/></svg><span class="m" style="left:26px;top:746px;color:#cdd6f4;">fastfetch</span><span class="m" style="left:386px;top:767px;color:#89b4fa;">nambiar</span><span class="m" style="left:442px;top:767px;color:#b4befe;">@</span><span class="m" style="left:450px;top:767px;color:#89b4fa;">smallbox</span><span class="m" style="left:386px;top:788px;color:#cdd6f4;">----------------</span><span class="m" style="left:386px;top:809px;color:#94e2d5;font-weight:bold;">OS</span><span class="m" style="left:402px;top:809px;color:#cdd6f4;">:</span><span class="m" style="left:418px;top:809px;color:#cdd6f4;">NixOS 25.11 (Xantusia) x86_64</span><span class="m" style="left:386px;top:830px;color:#94e2d5;font-weight:bold;">Host</span><span class="m" style="left:418px;top:830px;color:#cdd6f4;">:</span><span class="m" style="left:434px;top:830px;color:#cdd6f4;">21MCCTO1WW (ThinkPad T14 Gen 5)</span><span class="m" style="left:386px;top:851px;color:#94e2d5;font-weight:bold;">Kernel</span><span class="m" style="left:434px;top:851px;color:#cdd6f4;">:</span><span class="m" style="left:450px;top:851px;color:#cdd6f4;">Linux 6.16.5</span><span class="m" style="left:386px;top:872px;color:#94e2d5;font-weight:bold;">Uptime</span><span class="m" style="left:434px;top:872px;color:#cdd6f4;">:</span><span class="m" style="left:450px;top:872px;color:#cdd6f4;">10 hours, 26 mins</span><span class="m" style="left:386px;top:893px;color:#94e2d5;font-weight:bold;">Packages</span><span class="m" style="left:450px;top:893px;color:#cdd6f4;">:</span><span class="m" style="left:466px;top:893px;color:#cdd6f4;">1655 (nix-system), 199 (nix-user)</span><span class="m" style="left:386px;top:914px;color:#94e2d5;font-weight:bold;">Shell</span><span class="m" style="left:426px;top:914px;color:#cdd6f4;">:</span><span class="m" style="left:442px;top:914px;color:#cdd6f4;">zsh 5.9</span><span class="m" style="left:386px;top:935px;color:#94e2d5;font-weight:bold;">Display (Q3279WG5B)</span><span class="m" style="left:538px;top:935px;color:#cdd6f4;">:</span><span class="m" style="left:554px;top:935px;color:#cdd6f4;">2560x1440 @ 60 Hz in 33" [External]</span><span class="m" style="left:386px;top:956px;color:#94e2d5;font-weight:bold;">Display (LEN414B)</span><span class="m" style="left:522px;top:956px;color:#cdd6f4;">:</span><span class="m" style="left:538px;top:956px;color:#cdd6f4;">2880x1800 @ 120 Hz (as 1440x900) in 14" [Built-in]</span><span class="m" style="left:386px;top:977px;color:#94e2d5;font-weight:bold;">WM</span><span class="m" style="left:402px;top:977px;color:#cdd6f4;">:</span><span class="m" style="left:418px;top:977px;color:#cdd6f4;">Hyprland 0.51.0 (Wayland)</span><span class="m" style="left:386px;top:998px;color:#94e2d5;font-weight:bold;">Theme</span><span class="m" style="left:426px;top:998px;color:#cdd6f4;">:</span><span class="m" style="left:442px;top:998px;color:#cdd6f4;">Catppuccin-GTK-Grey-Dark-Compact [GTK2/3/4]</span><span class="m" style="left:386px;top:1019px;color:#94e2d5;font-weight:bold;">Icons</span><span class="m" style="left:426px;top:1019px;color:#cdd6f4;">:</span><span class="m" style="left:442px;top:1019px;color:#cdd6f4;">Papirus-Dark [GTK2/3/4]</span><span class="m" style="left:386px;top:1040px;color:#94e2d5;font-weight:bold;">Cursor</span><span class="m" style="left:434px;top:1040px;color:#cdd6f4;">:</span><span class="m" style="left:450px;top:1040px;color:#cdd6f4;">catppuccin-mocha-blue (32px)</span><span class="m" style="left:386px;top:1061px;color:#94e2d5;font-weight:bold;">Terminal</span><span class="m" style="left:450px;top:1061px;color:#cdd6f4;">:</span><span class="m" style="left:466px;top:1061px;color:#cdd6f4;">alacritty 0.15.1</span><span class="m" style="left:386px;top:1082px;color:#94e2d5;font-weight:bold;">Terminal Font</span><span class="m" style="left:490px;top:1082px;color:#cdd6f4;">:</span><span class="m" style="left:506px;top:1082px;color:#cdd6f4;">Aporetic Sans Mono (12pt)</span><span class="m" style="left:386px;top:1103px;color:#94e2d5;font-weight:bold;">CPU</span><span class="m" style="left:410px;top:1103px;color:#cdd6f4;">:</span><span class="m" style="left:426px;top:1103px;color:#cdd6f4;">AMD Ryzen 7 PRO 8840U w/ Radeon 780M Graphics (16) @ 5.13 GHz</span><span class="m" style="left:386px;top:1124px;color:#94e2d5;font-weight:bold;">GPU</span><span class="m" style="left:410px;top:1124px;color:#cdd6f4;">:</span><span class="m" style="left:426px;top:1124px;color:#cdd6f4;">AMD Phoenix3 [Integrated]</span><span class="m" style="left:386px;top:1145px;color:#94e2d5;font-weight:bold;">Memory</span><span class="m" style="left:434px;top:1145px;color:#cdd6f4;">:</span><span class="m" style="left:450px;top:1145px;color:#cdd6f4;">7.37 GiB / 61.46 GiB (</span><span class="m" style="left:626px;top:1145px;color:#a6e3a1;">12%</span><span class="m" style="left:650px;top:1145px;color:#cdd6f4;">)</span><span class="m" style="left:386px;top:1166px;color:#94e2d5;font-weight:bold;">Swap</span><span class="m" style="left:418px;top:1166px;color:#cdd6f4;">:</span><span class="m" style="left:434px;top:1166px;color:#cdd6f4;">Disabled</span><span class="m" style="left:386px;top:1187px;color:#94e2d5;font-weight:bold;">Disk (/)</span><span class="m" style="left:450px;top:1187px;color:#cdd6f4;">:</span><span class="m" style="left:466px;top:1187px;color:#cdd6f4;">338.49 GiB / 720.20 GiB (</span><span class="m" style="left:666px;top:1187px;color:#a6e3a1;">47%</span><span class="m" style="left:690px;top:1187px;color:#cdd6f4;">) - ext4</span><span class="m" style="left:386px;top:1208px;color:#94e2d5;font-weight:bold;">Disk (/home/nambiar/external)</span><span class="m" style="left:618px;top:1208px;color:#cdd6f4;">:</span><span class="m" style="left:634px;top:1208px;color:#cdd6f4;">141.19 GiB / 915.81 GiB (</span><span class="m" style="left:834px;top:1208px;color:#a6e3a1;">15%</span><span class="m" style="left:858px;top:1208px;color:#cdd6f4;">) - ext4</span><span class="m" style="left:386px;top:1229px;color:#94e2d5;font-weight:bold;">Local IP (eth0)</span><span class="m" style="left:506px;top:1229px;color:#cdd6f4;">:</span><span class="m" style="left:522px;top:1229px;color:#cdd6f4;">192.168.10.165/24</span><span class="m" style="left:386px;top:1250px;color:#94e2d5;font-weight:bold;">Battery (5B11H56417)</span><span class="m" style="left:546px;top:1250px;color:#cdd6f4;">:</span><span class="m" style="left:562px;top:1250px;color:#a6e3a1;">98%</span><span class="m" style="left:586px;top:1250px;color:#cdd6f4;"> [AC Connected]</span><span class="m" style="left:386px;top:1271px;color:#94e2d5;font-weight:bold;">Locale</span><span class="m" style="left:434px;top:1271px;color:#cdd6f4;">:</span><span class="m" style="left:450px;top:1271px;color:#cdd6f4;">en_GB.UTF-8</span><span class="m" style="left:10px;top:1376px;color:#94e2d5;font-weight:bold;">~</span><svg class="abs" width="2560" height="1440" style="left:0;top:0"><path d="M1291.5 766V757.5A2 2 0 0 1 1293.5 755.5H1296M1296 755.5H1299.5M1299.5 755.5H1304M1304 755.5H1307.5M1307.5 755.5V766M1347.5 755.5H1352M1347.5 755.5V766M1352 755.5H1355.5M1355.5 755.5H1360M1360 755.5H1363.5M1363.5 755.5H1368M1368 755.5H1371.5M1371.5 755.5V766M1411.5 755.5H1416M1411.5 755.5V766M1416 755.5H1419.5M1419.5 755.5V766M1491.5 755.5H1496M1491.5 755.5V766M1496 755.5H1499.5M1499.5 755.5H1504M1504 755.5H1507.5M1507.5 755.5H1512M1512 755.5H1515.5M1515.5 755.5H1520M1520 755.5H1523.5M1523.5 755.5H1528M1528 755.5H1531.5M1531.5 755.5H1536M1536 755.5H1539.5M1539.5 755.5H1544M1544 755.5H1547.5M1547.5 755.5H1552M1552 755.5H1555.5M1555.5 755.5H1560M1560 755.5H1563.5M1563.5 755.5H1568M1568 755.5H1571.5M1571.5 755.5H1576M1576 755.5H1579.5M1579.5 755.5H1584M1584 755.5H1587.5M1587.5 755.5H1592M1592 755.5H1595.5M1595.5 755.5H1600M1600 755.5H1603.5M1603.5 755.5H1608M1608 755.5H1611.5M1611.5 755.5H1616M1616 755.5H1619.5M1619.5 755.5H1624M1624 755.5H1627.5M1627.5 755.5H1632M1632 755.5H1635.5M1635.5 755.5H1640M1640 755.5H1643.5M1643.5 755.5H1648M1648 755.5H1651.5M1651.5 755.5H1656M1656 755.5H1659.5M1659.5 755.5H1664M1664 755.5H1667.5M1667.5 755.5H1672M1672 755.5H1675.5M1675.5 755.5H1680M1680 755.5H1683.5M1683.5 755.5H1688M1688 755.5H1691.5M1691.5 755.5H1696M1696 755.5H1699.5M1699.5 755.5H1704M1704 755.5H1707.5M1707.5 755.5H1712M1712 755.5H1715.5M1715.5 755.5H1720M1720 755.5H1723.5M1723.5 755.5H1728M1728 755.5H1731.5M1731.5 755.5H1736M1736 755.5H1739.5M1739.5 755.5H1744M1744 755.5H1747.5M1747.5 755.5H1752M1752 755.5H1755.5M1755.5 755.5H1760M1760 755.5H1763.5M1763.5 755.5H1768M1768 755.5H1771.5M1771.5 755.5H1776M1776 755.5H1779.5M1779.5 755.5H1784M1784 755.5H1787.5M1787.5 755.5H1792M1792 755.5H1795.5M1795.5 755.5H1800M1800 755.5H1803.5M1803.5 755.5H1808M1808 755.5H1811.5M1811.5 755.5H1816M1816 755.5H1819.5M1819.5 755.5H1824M1824 755.5H1827.5M1827.5 755.5H1832M1832 755.5H1835.5M1835.5 755.5H1840M1840 755.5H1843.5M1843.5 755.5H1848M1848 755.5H1851.5M1851.5 755.5H1856M1856 755.5H1859.5M1859.5 755.5H1864M1864 755.5H1867.5M1867.5 755.5H1872M1872 755.5H1875.5M1875.5 755.5H1880M1880 755.5H1883.5M1883.5 755.5V766M1955.5 755.5H1960M1955.5 755.5V766M1960 755.5H1963.5M1963.5 755.5H1968M1968 755.5H1971.5M1971.5 755.5H1976M1976 755.5H1979.5M1979.5 755.5H1984M1984 755.5H1987.5M1987.5 755.5H1992M1992 755.5H1995.5M1995.5 755.5H2000M2000 755.5H2003.5M2003.5 755.5H2008M2008 755.5H2011.5M2011.5 755.5H2016M2016 755.5H2019.5M2019.5 755.5H2024M2024 755.5H2027.5M2027.5 755.5H2032M2032 755.5H2035.5M2035.5 755.5H2040M2040 755.5H2043.5M2043.5 755.5H2048M2048 755.5H2051.5M2051.5 755.5H2056M2056 755.5H2059.5M2059.5 755.5H2064M2064 755.5H2067.5M2067.5 755.5H2072M2072 755.5H2075.5M2075.5 755.5H2080M2080 755.5H2083.5M2083.5 755.5H2088M2088 755.5H2091.5M2091.5 755.5H2096M2096 755.5H2099.5M2099.5 755.5H2104M2104 755.5H2107.5M2107.5 755.5H2112M2112 755.5H2115.5M2115.5 755.5H2120M2120 755.5H2123.5M2123.5 755.5H2128M2128 755.5H2131.5M2131.5 755.5H2136M2136 755.5H2139.5M2139.5 755.5H2144M2144 755.5H2147.5M2147.5 755.5H2152M2152 755.5H2155.5M2155.5 755.5H2160M2160 755.5H2163.5M2163.5 755.5H2168M2168 755.5H2171.5M2171.5 755.5H2176M2176 755.5H2179.5M2179.5 755.5H2184M2184 755.5H2187.5M2187.5 755.5H2192M2192 755.5H2195.5M2195.5 755.5H2200M2200 755.5H2203.5M2203.5 755.5H2208M2208 755.5H2211.5M2211.5 755.5H2216M2216 755.5H2219.5M2219.5 755.5V766M2427.5 755.5H2432M2427.5 755.5V766M2432 755.5H2435.5M2435.5 755.5V766M2523.5 755.5H2528M2523.5 755.5V766M2528 755.5H2531.5M2531.5 755.5H2536M2536 755.5H2537.5A2 2 0 0 1 2539.5 757.5V766M1291.5 766V776.5M1291.5 776.5V787M2539.5 766V776.5M2539.5 776.5V787M1291.5 787V797.5M1291.5 797.5V808M2539.5 787V797.5M2539.5 797.5V808M1291.5 808V818.5M1291.5 818.5V829M2539.5 808V818.5M2539.5 818.5V829M1291.5 829V839.5M1291.5 839.5V850M2539.5 829V839.5M2539.5 839.5V850M1291.5 850V860.5M1291.5 860.5V871M2539.5 850V860.5M2539.5 860.5V871M1291.5 871V881.5M1291.5 881.5V892M2539.5 871V881.5M2539.5 881.5V892M1291.5 892V902.5M1291.5 902.5V913M2539.5 892V902.5M2539.5 902.5V913M1291.5 913V923.5M1291.5 923.5V934M2539.5 913V923.5M2539.5 923.5V934M1291.5 934V944.5M1291.5 944.5V955M2539.5 934V944.5M2539.5 944.5V955M1291.5 955V963.5A2 2 0 0 0 1293.5 965.5H1296M1296 965.5H1299.5M1299.5 965.5H1304M1304 965.5H1307.5M1307.5 965.5H1312M1312 965.5H1315.5M1315.5 965.5H1320M1320 965.5H1323.5M1323.5 965.5H1328M1328 965.5H1331.5M1331.5 965.5H1336M1336 965.5H1339.5M1339.5 965.5H1344M1344 965.5H1347.5M1347.5 965.5H1352M1352 965.5H1355.5M1355.5 965.5H1360M1360 965.5H1363.5M1363.5 965.5H1368M1368 965.5H1371.5M1371.5 965.5H1376M1376 965.5H1379.5M1379.5 965.5H1384M1384 965.5H1387.5M1387.5 965.5H1392M1392 965.5H1395.5M1395.5 965.5H1400M1400 965.5H1403.5M1403.5 965.5H1408M1408 965.5H1411.5M1411.5 965.5H1416M1416 965.5H1419.5M1419.5 965.5H1424M1424 965.5H1427.5M1427.5 965.5H1432M1432 965.5H1435.5M1435.5 965.5H1440M1440 965.5H1443.5M1443.5 965.5H1448M1448 965.5H1451.5M1451.5 965.5H1456M1456 965.5H1459.5M1459.5 965.5H1464M1464 965.5H1467.5M1467.5 965.5H1472M1472 965.5H1475.5M1475.5 965.5H1480M1480 965.5H1483.5M1483.5 965.5H1488M1488 965.5H1491.5M1491.5 965.5H1496M1496 965.5H1499.5M1499.5 965.5H1504M1504 965.5H1507.5M1507.5 965.5H1512M1512 965.5H1515.5M1515.5 965.5H1520M1520 965.5H1523.5M1523.5 965.5H1528M1528 965.5H1531.5M1531.5 965.5H1536M1536 965.5H1539.5M1539.5 965.5H1544M1544 965.5H1547.5M1547.5 965.5H1552M1552 965.5H1555.5M1555.5 965.5H1560M1560 965.5H1563.5M1563.5 965.5H1568M1568 965.5H1571.5M1571.5 965.5H1576M1576 965.5H1579.5M1579.5 965.5H1584M1584 965.5H1587.5M1587.5 965.5H1592M1592 965.5H1595.5M1595.5 965.5H1600M1600 965.5H1603.5M1603.5 965.5H1608M1608 965.5H1611.5M1611.5 965.5H1616M1616 965.5H1619.5M1619.5 965.5H1624M1624 965.5H1627.5M1627.5 965.5H1632M1632 965.5H1635.5M1635.5 965.5H1640M1640 965.5H1643.5M1643.5 965.5H1648M1648 965.5H1651.5M1651.5 965.5H1656M1656 965.5H1659.5M1659.5 965.5H1664M1664 965.5H1667.5M1667.5 965.5H1672M1672 965.5H1675.5M1675.5 965.5H1680M1680 965.5H1683.5M1683.5 965.5H1688M1688 965.5H1691.5M1691.5 965.5H1696M1696 965.5H1699.5M1699.5 965.5H1704M1704 965.5H1707.5M1707.5 965.5H1712M1712 965.5H1715.5M1715.5 965.5H1720M1720 965.5H1723.5M1723.5 965.5H1728M1728 965.5H1731.5M1731.5 965.5H1736M1736 965.5H1739.5M1739.5 965.5H1744M1744 965.5H1747.5M1747.5 965.5H1752M1752 965.5H1755.5M1755.5 965.5H1760M1760 965.5H1763.5M1763.5 965.5H1768M1768 965.5H1771.5M1771.5 965.5H1776M1776 965.5H1779.5M1779.5 965.5H1784M1784 965.5H1787.5M1787.5 965.5H1792M1792 965.5H1795.5M1795.5 965.5H1800M1800 965.5H1803.5M1803.5 965.5H1808M1808 965.5H1811.5M1811.5 965.5H1816M1816 965.5H1819.5M1819.5 965.5H1824M1824 965.5H1827.5M1827.5 965.5H1832M1832 965.5H1835.5M1835.5 965.5H1840M1840 965.5H1843.5M1843.5 965.5H1848M1848 965.5H1851.5M1851.5 965.5H1856M1856 965.5H1859.5M1859.5 965.5H1864M1864 965.5H1867.5M1867.5 965.5H1872M1872 965.5H1875.5M1875.5 965.5H1880M1880 965.5H1883.5M1883.5 965.5H1888M1888 965.5H1891.5M1891.5 965.5H1896M1896 965.5H1899.5M1899.5 965.5H1904M1904 965.5H1907.5M1907.5 965.5H1912M1912 965.5H1915.5M1915.5 965.5H1920M1920 965.5H1923.5M1923.5 965.5H1928M1928 965.5H1931.5M1931.5 965.5H1936M1936 965.5H1939.5M1939.5 965.5H1944M1944 965.5H1947.5M1947.5 965.5H1952M1952 965.5H1955.5M1955.5 965.5H1960M1960 965.5H1963.5M1963.5 965.5H1968M1968 965.5H1971.5M1971.5 965.5H1976M1976 965.5H1979.5M1979.5 965.5H1984M1984 965.5H1987.5M1987.5 965.5H1992M1992 965.5H1995.5M1995.5 965.5H2000M2000 965.5H2003.5M2003.5 965.5H2008M2008 965.5H2011.5M2011.5 965.5H2016M2016 965.5H2019.5M2019.5 965.5H2024M2024 965.5H2027.5M2027.5 965.5H2032M2032 965.5H2035.5M2035.5 965.5H2040M2040 965.5H2043.5M2043.5 965.5H2048M2048 965.5H2051.5M2051.5 965.5H2056M2056 965.5H2059.5M2059.5 965.5H2064M2064 965.5H2067.5M2067.5 965.5H2072M2072 965.5H2075.5M2075.5 965.5H2080M2080 965.5H2083.5M2083.5 965.5H2088M2088 965.5H2091.5M2091.5 965.5H2096M2096 965.5H2099.5M2099.5 965.5H2104M2104 965.5H2107.5M2107.5 965.5H2112M2112 965.5H2115.5M2115.5 965.5H2120M2120 965.5H2123.5M2123.5 965.5H2128M2128 965.5H2131.5M2131.5 965.5H2136M2136 965.5H2139.5M2139.5 965.5H2144M2144 965.5H2147.5M2147.5 965.5H2152M2152 965.5H2155.5M2155.5 965.5H2160M2160 965.5H2163.5M2163.5 965.5H2168M2168 965.5H2171.5M2171.5 965.5H2176M2176 965.5H2179.5M2179.5 965.5H2184M2184 965.5H2187.5M2187.5 965.5H2192M2192 965.5H2195.5M2195.5 965.5H2200M2200 965.5H2203.5M2203.5 965.5H2208M2208 965.5H2211.5M2211.5 965.5H2216M2216 965.5H2219.5M2219.5 965.5H2224M2224 965.5H2227.5M2227.5 965.5H2232M2232 965.5H2235.5M2235.5 965.5H2240M2240 965.5H2243.5M2243.5 965.5H2248M2248 965.5H2251.5M2251.5 965.5H2256M2256 965.5H2259.5M2259.5 965.5H2264M2264 965.5H2267.5M2267.5 965.5H2272M2272 965.5H2275.5M2275.5 965.5H2280M2280 965.5H2283.5M2283.5 965.5H2288M2288 965.5H2291.5M2291.5 965.5H2296M2296 965.5H2299.5M2299.5 965.5H2304M2304 965.5H2307.5M2307.5 965.5H2312M2312 965.5H2315.5M2315.5 965.5H2320M2320 965.5H2323.5M2323.5 965.5H2328M2328 965.5H2331.5M2331.5 965.5H2336M2336 965.5H2339.5M2339.5 965.5H2344M2344 965.5H2347.5M2347.5 965.5H2352M2352 965.5H2355.5M2355.5 965.5H2360M2360 965.5H2363.5M2363.5 965.5H2368M2368 965.5H2371.5M2371.5 965.5H2376M2376 965.5H2379.5M2379.5 965.5H2384M2384 965.5H2387.5M2387.5 965.5H2392M2392 965.5H2395.5M2395.5 965.5H2400M2400 965.5H2403.5M2403.5 965.5H2408M2408 965.5H2411.5M2411.5 965.5H2416M2416 965.5H2419.5M2419.5 965.5H2424M2424 965.5H2427.5M2427.5 965.5H2432M2432 965.5H2435.5M2435.5 965.5H2440M2440 965.5H2443.5M2443.5 965.5H2448M2448 965.5H2451.5M2451.5 965.5H2456M2456 965.5H2459.5M2459.5 965.5H2464M2464 965.5H2467.5M2467.5 965.5H2472M2472 965.5H2475.5M2475.5 965.5H2480M2480 965.5H2483.5M2483.5 965.5H2488M2488 965.5H2491.5M2491.5 965.5H2496M2496 965.5H2499.5M2499.5 965.5H2504M2504 965.5H2507.5M2507.5 965.5H2512M2512 965.5H2515.5M2515.5 965.5H2520M2520 965.5H2523.5M2523.5 965.5H2528M2528 965.5H2531.5M2531.5 965.5H2536M2536 965.5H2537.5A2 2 0 0 0 2539.5 963.5V955" stroke="#cba6f7" stroke-width="1" stroke-linecap="square" fill="none"/><path d="M1763.5 787V778.5A2 2 0 0 1 1765.5 776.5H1768M1768 776.5H1771.5M1771.5 776.5H1776M1776 776.5H1779.5M1779.5 776.5V787M1923.5 776.5H1928M1923.5 776.5V787M1928 776.5H1931.5M1931.5 776.5H1936M1936 776.5H1939.5M1939.5 776.5H1944M1944 776.5H1947.5M1947.5 776.5H1952M1952 776.5H1955.5M1955.5 776.5H1960M1960 776.5H1963.5M1963.5 776.5H1968M1968 776.5H1971.5M1971.5 776.5H1976M1976 776.5H1979.5M1979.5 776.5H1984M1984 776.5H1987.5M1987.5 776.5H1992M1992 776.5H1995.5M1995.5 776.5H2000M2000 776.5H2003.5M2003.5 776.5H2008M2008 776.5H2011.5M2011.5 776.5H2016M2016 776.5H2019.5M2019.5 776.5H2024M2024 776.5H2027.5M2027.5 776.5H2032M2032 776.5H2035.5M2035.5 776.5H2040M2040 776.5H2043.5M2043.5 776.5H2048M2048 776.5H2051.5M2051.5 776.5H2056M2056 776.5H2059.5M2059.5 776.5H2064M2064 776.5H2067.5M2067.5 776.5H2072M2072 776.5H2075.5M2075.5 776.5H2080M2080 776.5H2083.5M2083.5 776.5H2088M2088 776.5H2091.5M2091.5 776.5H2096M2096 776.5H2099.5M2099.5 776.5H2104M2104 776.5H2107.5M2107.5 776.5H2112M2112 776.5H2115.5M2115.5 776.5H2120M2120 776.5H2123.5M2123.5 776.5H2128M2128 776.5H2131.5M2131.5 776.5H2136M2136 776.5H2139.5M2139.5 776.5H2144M2144 776.5H2147.5M2147.5 776.5H2152M2152 776.5H2155.5M2155.5 776.5H2160M2160 776.5H2163.5M2163.5 776.5H2168M2168 776.5H2171.5M2171.5 776.5H2176M2176 776.5H2179.5M2179.5 776.5H2184M2184 776.5H2187.5M2187.5 776.5H2192M2192 776.5H2195.5M2195.5 776.5H2200M2200 776.5H2203.5M2203.5 776.5H2208M2208 776.5H2211.5M2211.5 776.5H2216M2216 776.5H2219.5M2219.5 776.5H2224M2224 776.5H2227.5M2227.5 776.5H2232M2232 776.5H2235.5M2235.5 776.5H2240M2240 776.5H2243.5M2243.5 776.5H2248M2248 776.5H2251.5M2251.5 776.5H2256M2256 776.5H2259.5M2259.5 776.5H2264M2264 776.5H2267.5M2267.5 776.5H2272M2272 776.5H2275.5M2275.5 776.5H2280M2280 776.5H2283.5M2283.5 776.5H2288M2288 776.5H2291.5M2291.5 776.5H2296M2296 776.5H2299.5M2299.5 776.5H2304M2304 776.5H2307.5M2307.5 776.5H2312M2312 776.5H2315.5M2315.5 776.5H2320M2320 776.5H2323.5M2323.5 776.5H2328M2328 776.5H2331.5M2331.5 776.5H2336M2336 776.5H2339.5M2339.5 776.5H2344M2344 776.5H2347.5M2347.5 776.5H2352M2352 776.5H2355.5M2355.5 776.5H2360M2360 776.5H2363.5M2363.5 776.5H2368M2368 776.5H2371.5M2371.5 776.5H2376M2376 776.5H2379.5M2379.5 776.5H2384M2384 776.5H2387.5M2387.5 776.5H2392M2392 776.5H2395.5M2395.5 776.5H2400M2400 776.5H2403.5M2403.5 776.5H2408M2408 776.5H2411.5M2411.5 776.5H2416M2416 776.5H2419.5M2419.5 776.5H2424M2424 776.5H2427.5M2427.5 776.5H2432M2432 776.5H2435.5M2435.5 776.5H2440M2440 776.5H2443.5M2443.5 776.5H2448M2448 776.5H2451.5M2451.5 776.5H2456M2456 776.5H2459.5M2459.5 776.5V787M2523.5 776.5H2528M2523.5 776.5V787M2528 776.5H2529.5A2 2 0 0 1 2531.5 778.5V787M1763.5 787V797.5M1763.5 797.5V808M2531.5 787V797.5M2531.5 797.5V808M1763.5 808V818.5M1763.5 818.5V829M2531.5 808V818.5M2531.5 818.5V829M1763.5 829V839.5M1763.5 839.5V850M2531.5 829V839.5M2531.5 839.5V850M1763.5 850V860.5M1763.5 860.5V871M2531.5 850V860.5M2531.5 860.5V871M1763.5 871V881.5M1763.5 881.5V892M2531.5 871V881.5M2531.5 881.5V892M1763.5 892V902.5M1763.5 902.5V913M2531.5 892V902.5M2531.5 902.5V913M1763.5 913V923.5M1763.5 923.5V934M2531.5 913V923.5M2531.5 923.5V934M1763.5 934V942.5A2 2 0 0 0 1765.5 944.5H1768M1768 944.5H1771.5M1771.5 944.5H1776M1776 944.5H1779.5M1779.5 944.5H1784M1784 944.5H1787.5M1787.5 944.5H1792M1792 944.5H1795.5M1795.5 944.5H1800M1800 944.5H1803.5M1803.5 944.5H1808M1808 944.5H1811.5M1811.5 944.5H1816M1816 944.5H1819.5M1819.5 944.5H1824M1824 944.5H1827.5M1827.5 944.5H1832M1832 944.5H1835.5M1835.5 944.5H1840M1840 944.5H1843.5M1843.5 944.5H1848M1848 944.5H1851.5M1851.5 944.5H1856M1856 944.5H1859.5M1859.5 944.5H1864M1864 944.5H1867.5M1867.5 944.5H1872M1872 944.5H1875.5M1875.5 944.5H1880M1880 944.5H1883.5M1883.5 944.5H1888M1888 944.5H1891.5M1891.5 944.5H1896M1896 944.5H1899.5M1899.5 944.5H1904M1904 944.5H1907.5M1907.5 944.5H1912M1912 944.5H1915.5M1915.5 944.5H1920M1920 944.5H1923.5M1923.5 944.5H1928M1928 944.5H1931.5M1931.5 944.5H1936M1936 944.5H1939.5M1939.5 944.5H1944M1944 944.5H1947.5M1947.5 944.5H1952M1952 944.5H1955.5M1955.5 944.5H1960M1960 944.5H1963.5M1963.5 944.5H1968M1968 944.5H1971.5M1971.5 944.5H1976M1976 944.5H1979.5M1979.5 944.5H1984M1984 944.5H1987.5M1987.5 944.5H1992M1992 944.5H1995.5M1995.5 944.5H2000M2000 944.5H2003.5M2003.5 944.5H2008M2008 944.5H2011.5M2011.5 944.5H2016M2016 944.5H2019.5M2019.5 944.5H2024M2024 944.5H2027.5M2027.5 944.5H2032M2032 944.5H2035.5M2035.5 944.5H2040M2040 944.5H2043.5M2043.5 944.5H2048M2048 944.5H2051.5M2051.5 944.5H2056M2056 944.5H2059.5M2059.5 944.5H2064M2064 944.5H2067.5M2067.5 944.5H2072M2072 944.5H2075.5M2075.5 944.5H2080M2080 944.5H2083.5M2083.5 944.5H2088M2088 944.5H2091.5M2091.5 944.5H2096M2096 944.5H2099.5M2099.5 944.5H2104M2104 944.5H2107.5M2107.5 944.5H2112M2112 944.5H2115.5M2115.5 944.5H2120M2120 944.5H2123.5M2123.5 944.5H2128M2128 944.5H2131.5M2131.5 944.5H2136M2136 944.5H2139.5M2139.5 944.5H2144M2144 944.5H2147.5M2147.5 944.5H2152M2152 944.5H2155.5M2155.5 944.5H2160M2160 944.5H2163.5M2163.5 944.5H2168M2168 944.5H2171.5M2171.5 944.5H2176M2176 944.5H2179.5M2179.5 944.5H2184M2184 944.5H2187.5M2187.5 944.5H2192M2192 944.5H2195.5M2195.5 944.5H2200M2200 944.5H2203.5M2203.5 944.5H2208M2208 944.5H2211.5M2211.5 944.5H2216M2216 944.5H2219.5M2219.5 944.5H2224M2224 944.5H2227.5M2227.5 944.5H2232M2232 944.5H2235.5M2235.5 944.5H2240M2240 944.5H2243.5M2243.5 944.5H2248M2248 944.5H2251.5M2251.5 944.5H2256M2256 944.5H2259.5M2259.5 944.5H2264M2264 944.5H2267.5M2267.5 944.5H2272M2272 944.5H2275.5M2275.5 944.5H2280M2280 944.5H2283.5M2283.5 944.5H2288M2288 944.5H2291.5M2291.5 944.5H2296M2296 944.5H2299.5M2299.5 944.5H2304M2304 944.5H2307.5M2307.5 944.5H2312M2312 944.5H2315.5M2315.5 944.5H2320M2320 944.5H2323.5M2323.5 944.5H2328M2328 944.5H2331.5M2331.5 944.5H2336M2336 944.5H2339.5M2339.5 944.5H2344M2344 944.5H2347.5M2347.5 944.5H2352M2352 944.5H2355.5M2355.5 944.5H2360M2360 944.5H2363.5M2363.5 944.5H2368M2368 944.5H2371.5M2371.5 944.5H2376M2376 944.5H2379.5M2379.5 944.5H2384M2384 944.5H2387.5M2387.5 944.5H2392M2392 944.5H2395.5M2395.5 944.5H2400M2400 944.5H2403.5M2403.5 944.5H2408M2408 944.5H2411.5M2411.5 944.5H2416M2416 944.5H2419.5M2419.5 944.5H2424M2424 944.5H2427.5M2427.5 944.5H2432M2432 944.5H2435.5M2435.5 944.5H2440M2440 944.5H2443.5M2443.5 944.5H2448M2448 944.5H2451.5M2451.5 944.5H2456M2456 944.5H2459.5M2459.5 944.5H2464M2464 944.5H2467.5M2467.5 944.5H2472M2472 944.5H2475.5M2475.5 944.5H2480M2480 944.5H2483.5M2483.5 944.5H2488M2488 944.5H2491.5M2491.5 944.5H2496M2496 944.5H2499.5M2499.5 944.5H2504M2504 944.5H2507.5M2507.5 944.5H2512M2512 944.5H2515.5M2515.5 944.5H2520M2520 944.5H2523.5M2523.5 944.5H2528M2528 944.5H2529.5A2 2 0 0 0 2531.5 942.5V934M2019.5 808V818.5M2019.5 818.5V829M2019.5 829V839.5M2019.5 839.5V850M2019.5 850V860.5M2019.5 860.5V871M2019.5 871V881.5M2019.5 881.5V892M2019.5 892V902.5M2019.5 902.5V913M2275.5 808V818.5M2275.5 818.5V829M2275.5 829V839.5M2275.5 839.5V850M2275.5 850V860.5M2275.5 860.5V871M2275.5 871V881.5M2275.5 881.5V892M2275.5 892V902.5M2275.5 902.5V913M1635.5 1249V1240.5A2 2 0 0 1 1637.5 1238.5H1640M1640 1238.5H1643.5M1643.5 1238.5H1648M1648 1238.5H1651.5M1651.5 1238.5V1249M1723.5 1238.5H1728M1723.5 1238.5V1249M1728 1238.5H1731.5M1731.5 1238.5H1736M1736 1238.5H1739.5M1739.5 1238.5H1744M1744 1238.5H1747.5M1747.5 1238.5H1752M1752 1238.5H1755.5M1755.5 1238.5H1760M1760 1238.5H1763.5M1763.5 1238.5H1768M1768 1238.5H1771.5M1771.5 1238.5H1776M1776 1238.5H1779.5M1779.5 1238.5H1784M1784 1238.5H1787.5M1787.5 1238.5H1792M1792 1238.5H1795.5M1795.5 1238.5H1800M1800 1238.5H1803.5M1803.5 1238.5H1808M1808 1238.5H1811.5M1811.5 1238.5H1816M1816 1238.5H1819.5M1819.5 1238.5H1824M1824 1238.5H1827.5M1827.5 1238.5H1832M1832 1238.5H1835.5M1835.5 1238.5H1840M1840 1238.5H1841.5A2 2 0 0 1 1843.5 1240.5V1249M1635.5 1249V1259.5M1635.5 1259.5V1270M1843.5 1249V1259.5M1843.5 1259.5V1270M1635.5 1270V1280.5M1635.5 1280.5V1291M1843.5 1270V1280.5M1843.5 1280.5V1291M1635.5 1291V1301.5M1635.5 1301.5V1312M1843.5 1291V1301.5M1843.5 1301.5V1312M1635.5 1312V1322.5M1635.5 1322.5V1333M1843.5 1312V1322.5M1843.5 1322.5V1333M1635.5 1333V1343.5M1635.5 1343.5V1354M1843.5 1333V1343.5M1843.5 1343.5V1354M1635.5 1354V1364.5M1635.5 1364.5V1375M1843.5 1354V1364.5M1843.5 1364.5V1375M1635.5 1375V1383.5A2 2 0 0 0 1637.5 1385.5H1640M1640 1385.5H1643.5M1643.5 1385.5H1648M1648 1385.5H1651.5M1651.5 1375V1385.5M1707.5 1385.5H1712M1707.5 1375V1385.5M1712 1385.5H1715.5M1715.5 1385.5H1720M1720 1385.5H1723.5M1723.5 1385.5H1728M1728 1385.5H1731.5M1731.5 1385.5H1736M1736 1385.5H1739.5M1739.5 1385.5H1744M1744 1385.5H1747.5M1747.5 1385.5H1752M1752 1385.5H1755.5M1755.5 1385.5H1760M1760 1385.5H1763.5M1763.5 1385.5H1768M1768 1385.5H1771.5M1771.5 1385.5H1776M1776 1385.5H1779.5M1779.5 1385.5H1784M1784 1385.5H1787.5M1787.5 1385.5H1792M1792 1385.5H1795.5M1795.5 1385.5H1800M1800 1385.5H1803.5M1803.5 1385.5H1808M1808 1385.5H1811.5M1811.5 1385.5H1816M1816 1385.5H1819.5M1819.5 1385.5H1824M1824 1385.5H1827.5M1827.5 1385.5H1832M1832 1385.5H1835.5M1835.5 1385.5H1840M1840 1385.5H1841.5A2 2 0 0 0 1843.5 1383.5V1375" stroke="#7f849c" stroke-width="1" stroke-linecap="square" fill="none"/><path d="M1291.5 997V988.5A2 2 0 0 1 1293.5 986.5H1296M1296 986.5H1299.5M1299.5 986.5H1304M1304 986.5H1307.5M1307.5 986.5V997M1347.5 986.5H1352M1347.5 986.5V997M1352 986.5H1355.5M1355.5 986.5H1360M1360 986.5H1363.5M1363.5 986.5H1368M1368 986.5H1371.5M1371.5 986.5H1376M1376 986.5H1379.5M1379.5 986.5H1384M1384 986.5H1387.5M1387.5 986.5H1392M1392 986.5H1395.5M1395.5 986.5H1400M1400 986.5H1403.5M1403.5 986.5H1408M1408 986.5H1411.5M1411.5 986.5H1416M1416 986.5H1419.5M1419.5 986.5H1424M1424 986.5H1427.5M1427.5 986.5H1432M1432 986.5H1435.5M1435.5 986.5H1440M1440 986.5H1443.5M1443.5 986.5H1448M1448 986.5H1451.5M1451.5 986.5H1456M1456 986.5H1459.5M1459.5 986.5H1464M1464 986.5H1467.5M1467.5 986.5H1472M1472 986.5H1475.5M1475.5 986.5H1480M1480 986.5H1483.5M1483.5 986.5H1488M1488 986.5H1491.5M1491.5 986.5H1496M1496 986.5H1499.5M1499.5 986.5H1504M1504 986.5H1507.5M1507.5 986.5H1512M1512 986.5H1515.5M1515.5 986.5H1520M1520 986.5H1523.5M1523.5 986.5H1528M1528 986.5H1531.5M1531.5 986.5H1536M1536 986.5H1539.5M1539.5 986.5H1544M1544 986.5H1547.5M1547.5 986.5H1552M1552 986.5H1555.5M1555.5 986.5H1560M1560 986.5H1563.5M1563.5 986.5H1568M1563.5 986.5V997M1568 986.5H1571.5M1571.5 986.5H1576M1576 986.5H1579.5M1579.5 986.5V997M1627.5 986.5H1632M1627.5 986.5V997M1632 986.5H1635.5M1635.5 986.5H1640M1640 986.5H1643.5M1643.5 986.5H1648M1648 986.5H1651.5M1651.5 986.5H1656M1656 986.5H1659.5M1659.5 986.5H1664M1664 986.5H1667.5M1667.5 986.5H1672M1672 986.5H1675.5M1675.5 986.5H1680M1680 986.5H1683.5M1683.5 986.5H1688M1688 986.5H1691.5M1691.5 986.5H1696M1696 986.5H1699.5M1699.5 986.5H1704M1704 986.5H1707.5M1707.5 986.5H1712M1712 986.5H1715.5M1715.5 986.5H1720M1720 986.5H1723.5M1723.5 986.5H1728M1728 986.5H1731.5M1731.5 986.5H1736M1736 986.5H1739.5M1739.5 986.5H1744M1744 986.5H1747.5M1747.5 986.5H1752M1752 986.5H1755.5M1755.5 986.5H1760M1760 986.5H1763.5M1763.5 986.5H1768M1768 986.5H1771.5M1771.5 986.5H1776M1776 986.5H1779.5M1779.5 986.5H1784M1784 986.5H1787.5M1787.5 986.5H1792M1792 986.5H1795.5M1795.5 986.5H1800M1800 986.5H1803.5M1803.5 986.5H1808M1808 986.5H1811.5M1811.5 986.5V997M1835.5 986.5H1840M1835.5 986.5V997M1840 986.5H1843.5M1843.5 986.5H1848M1848 986.5H1849.5A2 2 0 0 1 1851.5 988.5V997M1291.5 997V1007.5M1291.5 1007.5V1018M1563.5 1007.5H1568M1563.5 997V1007.5M1563.5 1007.5V1018M1848 1007.5H1851.5M1851.5 997V1007.5M1851.5 1007.5V1018M1291.5 1028.5H1296M1291.5 1018V1028.5M1291.5 1028.5V1039M1560 1028.5H1563.5M1563.5 1018V1028.5M1563.5 1028.5V1039M1851.5 1018V1028.5M1851.5 1028.5V1039M1291.5 1039V1049.5M1291.5 1049.5V1060M1563.5 1039V1049.5M1563.5 1049.5V1060M1851.5 1039V1049.5M1851.5 1049.5V1060M1291.5 1070.5H1296M1291.5 1060V1070.5M1291.5 1070.5V1081M1563.5 1070.5H1568M1563.5 1060V1070.5M1563.5 1070.5V1081M1848 1070.5H1851.5M1851.5 1060V1070.5M1851.5 1070.5V1081M1291.5 1081V1091.5M1291.5 1091.5V1102M1563.5 1081V1091.5M1563.5 1091.5V1102M1851.5 1081V1091.5M1851.5 1091.5V1102M1291.5 1112.5H1296M1291.5 1102V1112.5M1291.5 1112.5V1123M1560 1112.5H1563.5M1563.5 1102V1112.5M1563.5 1112.5V1123M1851.5 1102V1112.5M1851.5 1112.5V1123M1291.5 1123V1133.5M1291.5 1133.5V1144M1563.5 1133.5H1568M1563.5 1123V1133.5M1563.5 1133.5V1144M1848 1133.5H1851.5M1851.5 1123V1133.5M1851.5 1133.5V1144M1291.5 1154.5H1296M1291.5 1144V1154.5M1291.5 1154.5V1165M1560 1154.5H1563.5M1563.5 1144V1154.5M1563.5 1154.5V1165M1851.5 1144V1154.5M1851.5 1154.5V1165M1291.5 1165V1175.5M1291.5 1175.5V1186M1563.5 1165V1175.5M1563.5 1175.5V1186M1851.5 1165V1175.5M1851.5 1175.5V1186M1291.5 1186V1194.5A2 2 0 0 0 1293.5 1196.5H1296M1296 1196.5H1299.5M1299.5 1196.5H1304M1304 1196.5H1307.5M1307.5 1196.5H1312M1312 1196.5H1315.5M1315.5 1196.5H1320M1320 1196.5H1323.5M1323.5 1196.5H1328M1328 1196.5H1331.5M1331.5 1196.5H1336M1336 1196.5H1339.5M1339.5 1196.5H1344M1344 1196.5H1347.5M1347.5 1196.5H1352M1352 1196.5H1355.5M1355.5 1196.5H1360M1360 1196.5H1363.5M1363.5 1196.5H1368M1368 1196.5H1371.5M1371.5 1196.5H1376M1376 1196.5H1379.5M1379.5 1196.5H1384M1384 1196.5H1387.5M1387.5 1196.5H1392M1392 1196.5H1395.5M1395.5 1196.5H1400M1400 1196.5H1403.5M1403.5 1196.5H1408M1408 1196.5H1411.5M1411.5 1196.5H1416M1416 1196.5H1419.5M1419.5 1196.5H1424M1424 1196.5H1427.5M1427.5 1196.5H1432M1432 1196.5H1435.5M1435.5 1196.5H1440M1440 1196.5H1443.5M1443.5 1196.5H1448M1448 1196.5H1451.5M1451.5 1196.5H1456M1456 1196.5H1459.5M1459.5 1196.5H1464M1464 1196.5H1467.5M1467.5 1196.5H1472M1472 1196.5H1475.5M1475.5 1196.5H1480M1480 1196.5H1483.5M1483.5 1196.5H1488M1488 1196.5H1491.5M1491.5 1196.5H1496M1496 1196.5H1499.5M1499.5 1196.5H1504M1504 1196.5H1507.5M1507.5 1196.5H1512M1512 1196.5H1515.5M1515.5 1196.5H1520M1520 1196.5H1523.5M1523.5 1196.5H1528M1528 1196.5H1531.5M1531.5 1196.5H1536M1536 1196.5H1539.5M1539.5 1196.5H1544M1544 1196.5H1547.5M1547.5 1196.5H1552M1552 1196.5H1555.5M1555.5 1196.5H1560M1560 1196.5H1563.5M1563.5 1196.5H1568M1563.5 1186V1196.5M1568 1196.5H1571.5M1571.5 1196.5H1576M1576 1196.5H1579.5M1579.5 1196.5H1584M1584 1196.5H1587.5M1587.5 1196.5H1592M1592 1196.5H1595.5M1595.5 1196.5H1600M1600 1196.5H1603.5M1603.5 1196.5H1608M1608 1196.5H1611.5M1611.5 1196.5H1616M1616 1196.5H1619.5M1619.5 1196.5H1624M1624 1196.5H1627.5M1627.5 1196.5H1632M1632 1196.5H1635.5M1635.5 1196.5H1640M1640 1196.5H1643.5M1643.5 1196.5H1648M1648 1196.5H1651.5M1651.5 1196.5H1656M1656 1196.5H1659.5M1659.5 1196.5H1664M1664 1196.5H1667.5M1667.5 1196.5H1672M1672 1196.5H1675.5M1675.5 1196.5H1680M1680 1196.5H1683.5M1683.5 1196.5H1688M1688 1196.5H1691.5M1691.5 1196.5H1696M1696 1196.5H1699.5M1699.5 1196.5H1704M1704 1196.5H1707.5M1707.5 1196.5H1712M1712 1196.5H1715.5M1715.5 1196.5H1720M1720 1196.5H1723.5M1723.5 1196.5H1728M1728 1196.5H1731.5M1731.5 1196.5H1736M1736 1196.5H1739.5M1739.5 1196.5H1744M1744 1196.5H1747.5M1747.5 1196.5H1752M1752 1196.5H1755.5M1755.5 1196.5H1760M1760 1196.5H1763.5M1763.5 1196.5H1768M1768 1196.5H1771.5M1771.5 1196.5H1776M1776 1196.5H1779.5M1779.5 1196.5H1784M1784 1196.5H1787.5M1787.5 1196.5H1792M1792 1196.5H1795.5M1795.5 1196.5H1800M1800 1196.5H1803.5M1803.5 1196.5H1808M1808 1196.5H1811.5M1811.5 1196.5H1816M1816 1196.5H1819.5M1819.5 1196.5H1824M1824 1196.5H1827.5M1827.5 1196.5H1832M1832 1196.5H1835.5M1835.5 1196.5H1840M1840 1196.5H1843.5M1843.5 1196.5H1848M1848 1196.5H1849.5A2 2 0 0 0 1851.5 1194.5V1186" stroke="#a6e3a1" stroke-width="1" stroke-linecap="square" fill="none"/><path d="M1296 1028.5H1299.5M1299.5 1028.5H1304M1344 1028.5H1347.5M1347.5 1028.5H1352M1352 1028.5H1355.5M1355.5 1028.5H1360M1360 1028.5H1363.5M1363.5 1028.5H1368M1368 1028.5H1371.5M1371.5 1028.5H1376M1376 1028.5H1379.5M1379.5 1028.5H1384M1384 1028.5H1387.5M1387.5 1028.5H1392M1392 1028.5H1395.5M1395.5 1028.5H1400M1400 1028.5H1403.5M1403.5 1028.5H1408M1408 1028.5H1411.5M1411.5 1028.5H1416M1416 1028.5H1419.5M1419.5 1028.5H1424M1424 1028.5H1427.5M1427.5 1028.5H1432M1432 1028.5H1435.5M1435.5 1028.5H1440M1440 1028.5H1443.5M1443.5 1028.5H1448M1448 1028.5H1451.5M1451.5 1028.5H1456M1456 1028.5H1459.5M1459.5 1028.5H1464M1464 1028.5H1467.5M1467.5 1028.5H1472M1472 1028.5H1475.5M1475.5 1028.5H1480M1480 1028.5H1483.5M1483.5 1028.5H1488M1520 1028.5H1523.5M1523.5 1028.5H1528M1552 1028.5H1555.5M1555.5 1028.5H1560M1296 1070.5H1299.5M1299.5 1070.5H1304M1384 1070.5H1387.5M1387.5 1070.5H1392M1392 1070.5H1395.5M1395.5 1070.5H1400M1400 1070.5H1403.5M1403.5 1070.5H1408M1408 1070.5H1411.5M1411.5 1070.5H1416M1416 1070.5H1419.5M1419.5 1070.5H1424M1424 1070.5H1427.5M1427.5 1070.5H1432M1432 1070.5H1435.5M1435.5 1070.5H1440M1440 1070.5H1443.5M1443.5 1070.5H1448M1448 1070.5H1451.5M1451.5 1070.5H1456M1456 1070.5H1459.5M1459.5 1070.5H1464M1464 1070.5H1467.5M1467.5 1070.5H1472M1472 1070.5H1475.5M1475.5 1070.5H1480M1480 1070.5H1483.5M1483.5 1070.5H1488M1520 1070.5H1523.5M1523.5 1070.5H1528M1552 1070.5H1555.5M1555.5 1070.5H1560M1296 1112.5H1299.5M1299.5 1112.5H1304M1360 1112.5H1363.5M1363.5 1112.5H1368M1368 1112.5H1371.5M1371.5 1112.5H1376M1376 1112.5H1379.5M1379.5 1112.5H1384M1384 1112.5H1387.5M1387.5 1112.5H1392M1392 1112.5H1395.5M1395.5 1112.5H1400M1400 1112.5H1403.5M1403.5 1112.5H1408M1408 1112.5H1411.5M1411.5 1112.5H1416M1416 1112.5H1419.5M1419.5 1112.5H1424M1424 1112.5H1427.5M1427.5 1112.5H1432M1432 1112.5H1435.5M1435.5 1112.5H1440M1440 1112.5H1443.5M1443.5 1112.5H1448M1448 1112.5H1451.5M1451.5 1112.5H1456M1456 1112.5H1459.5M1459.5 1112.5H1464M1464 1112.5H1467.5M1467.5 1112.5H1472M1472 1112.5H1475.5M1475.5 1112.5H1480M1480 1112.5H1483.5M1483.5 1112.5H1488M1520 1112.5H1523.5M1523.5 1112.5H1528M1552 1112.5H1555.5M1555.5 1112.5H1560M1296 1154.5H1299.5M1299.5 1154.5H1304M1344 1154.5H1347.5M1347.5 1154.5H1352M1352 1154.5H1355.5M1355.5 1154.5H1360M1360 1154.5H1363.5M1363.5 1154.5H1368M1368 1154.5H1371.5M1371.5 1154.5H1376M1376 1154.5H1379.5M1379.5 1154.5H1384M1384 1154.5H1387.5M1387.5 1154.5H1392M1392 1154.5H1395.5M1395.5 1154.5H1400M1400 1154.5H1403.5M1403.5 1154.5H1408M1408 1154.5H1411.5M1411.5 1154.5H1416M1416 1154.5H1419.5M1419.5 1154.5H1424M1424 1154.5H1427.5M1427.5 1154.5H1432M1432 1154.5H1435.5M1435.5 1154.5H1440M1440 1154.5H1443.5M1443.5 1154.5H1448M1448 1154.5H1451.5M1451.5 1154.5H1456M1456 1154.5H1459.5M1459.5 1154.5H1464M1464 1154.5H1467.5M1467.5 1154.5H1472M1472 1154.5H1475.5M1475.5 1154.5H1480M1480 1154.5H1483.5M1483.5 1154.5H1488M1520 1154.5H1523.5M1523.5 1154.5H1528M1552 1154.5H1555.5M1555.5 1154.5H1560M1568 1007.5H1571.5M1571.5 1007.5H1576M1608 1007.5H1611.5M1611.5 1007.5H1616M1616 1007.5H1619.5M1619.5 1007.5H1624M1624 1007.5H1627.5M1627.5 1007.5H1632M1632 1007.5H1635.5M1635.5 1007.5H1640M1640 1007.5H1643.5M1643.5 1007.5H1648M1648 1007.5H1651.5M1651.5 1007.5H1656M1656 1007.5H1659.5M1659.5 1007.5H1664M1664 1007.5H1667.5M1667.5 1007.5H1672M1672 1007.5H1675.5M1675.5 1007.5H1680M1720 1007.5H1723.5M1723.5 1007.5H1728M1728 1007.5H1731.5M1731.5 1007.5H1736M1736 1007.5H1739.5M1739.5 1007.5H1744M1744 1007.5H1747.5M1747.5 1007.5H1752M1752 1007.5H1755.5M1755.5 1007.5H1760M1760 1007.5H1763.5M1763.5 1007.5H1768M1768 1007.5H1771.5M1771.5 1007.5H1776M1776 1007.5H1779.5M1779.5 1007.5H1784M1808 1007.5H1811.5M1811.5 1007.5H1816M1840 1007.5H1843.5M1843.5 1007.5H1848M1568 1070.5H1571.5M1571.5 1070.5H1576M1608 1070.5H1611.5M1611.5 1070.5H1616M1616 1070.5H1619.5M1619.5 1070.5H1624M1624 1070.5H1627.5M1627.5 1070.5H1632M1632 1070.5H1635.5M1635.5 1070.5H1640M1640 1070.5H1643.5M1643.5 1070.5H1648M1648 1070.5H1651.5M1651.5 1070.5H1656M1656 1070.5H1659.5M1659.5 1070.5H1664M1664 1070.5H1667.5M1667.5 1070.5H1672M1672 1070.5H1675.5M1675.5 1070.5H1680M1680 1070.5H1683.5M1683.5 1070.5H1688M1688 1070.5H1691.5M1691.5 1070.5H1696M1696 1070.5H1699.5M1699.5 1070.5H1704M1704 1070.5H1707.5M1707.5 1070.5H1712M1712 1070.5H1715.5M1715.5 1070.5H1720M1720 1070.5H1723.5M1723.5 1070.5H1728M1728 1070.5H1731.5M1731.5 1070.5H1736M1736 1070.5H1739.5M1739.5 1070.5H1744M1744 1070.5H1747.5M1747.5 1070.5H1752M1752 1070.5H1755.5M1755.5 1070.5H1760M1760 1070.5H1763.5M1763.5 1070.5H1768M1768 1070.5H1771.5M1771.5 1070.5H1776M1776 1070.5H1779.5M1779.5 1070.5H1784M1808 1070.5H1811.5M1811.5 1070.5H1816M1840 1070.5H1843.5M1843.5 1070.5H1848M1568 1133.5H1571.5M1571.5 1133.5H1576M1640 1133.5H1643.5M1643.5 1133.5H1648M1648 1133.5H1651.5M1651.5 1133.5H1656M1656 1133.5H1659.5M1659.5 1133.5H1664M1664 1133.5H1667.5M1667.5 1133.5H1672M1672 1133.5H1675.5M1675.5 1133.5H1680M1680 1133.5H1683.5M1683.5 1133.5H1688M1688 1133.5H1691.5M1691.5 1133.5H1696M1696 1133.5H1699.5M1699.5 1133.5H1704M1704 1133.5H1707.5M1707.5 1133.5H1712M1712 1133.5H1715.5M1715.5 1133.5H1720M1720 1133.5H1723.5M1723.5 1133.5H1728M1728 1133.5H1731.5M1731.5 1133.5H1736M1736 1133.5H1739.5M1739.5 1133.5H1744M1744 1133.5H1747.5M1747.5 1133.5H1752M1752 1133.5H1755.5M1755.5 1133.5H1760M1760 1133.5H1763.5M1763.5 1133.5H1768M1768 1133.5H1771.5M1771.5 1133.5H1776M1776 1133.5H1779.5M1779.5 1133.5H1784M1808 1133.5H1811.5M1811.5 1133.5H1816M1840 1133.5H1843.5M1843.5 1133.5H1848" stroke="#6c7086" stroke-width="1" stroke-linecap="square" fill="none"/><path d="M1291.5 1228V1219.5A2 2 0 0 1 1293.5 1217.5H1296M1296 1217.5H1299.5M1299.5 1217.5H1304M1304 1217.5H1307.5M1307.5 1217.5V1228M1347.5 1217.5H1352M1347.5 1217.5V1228M1352 1217.5H1355.5M1355.5 1217.5V1228M1475.5 1217.5H1480M1475.5 1217.5V1228M1480 1217.5H1483.5M1483.5 1217.5H1488M1488 1217.5H1491.5M1491.5 1217.5H1496M1496 1217.5H1499.5M1499.5 1217.5H1504M1504 1217.5H1507.5M1507.5 1217.5H1512M1512 1217.5H1515.5M1515.5 1217.5H1520M1520 1217.5H1523.5M1523.5 1217.5H1528M1528 1217.5H1531.5M1531.5 1217.5H1536M1536 1217.5H1539.5M1539.5 1217.5H1544M1544 1217.5H1547.5M1547.5 1217.5H1552M1552 1217.5H1555.5M1555.5 1217.5H1560M1560 1217.5H1563.5M1563.5 1217.5H1568M1568 1217.5H1571.5M1571.5 1217.5H1576M1576 1217.5H1579.5M1579.5 1217.5H1584M1584 1217.5H1587.5M1587.5 1217.5H1592M1592 1217.5H1595.5M1595.5 1217.5H1600M1600 1217.5H1603.5M1603.5 1217.5H1608M1608 1217.5H1611.5M1611.5 1217.5V1228M1651.5 1217.5H1656M1651.5 1217.5V1228M1656 1217.5H1659.5M1659.5 1217.5V1228M1699.5 1217.5H1704M1699.5 1217.5V1228M1704 1217.5H1707.5M1707.5 1217.5V1228M1747.5 1217.5H1752M1747.5 1217.5V1228M1752 1217.5H1755.5M1755.5 1217.5V1228M1843.5 1217.5H1848M1843.5 1217.5V1228M1848 1217.5H1849.5A2 2 0 0 1 1851.5 1219.5V1228M1291.5 1228V1238.5M1291.5 1238.5V1249M1851.5 1228V1238.5M1851.5 1238.5V1249M1291.5 1249V1259.5M1291.5 1259.5V1270M1851.5 1249V1259.5M1851.5 1259.5V1270M1291.5 1270V1280.5M1291.5 1280.5V1291M1851.5 1270V1280.5M1851.5 1280.5V1291M1291.5 1291V1301.5M1291.5 1301.5V1312M1851.5 1291V1301.5M1851.5 1301.5V1312M1291.5 1312V1322.5M1291.5 1322.5V1333M1851.5 1312V1322.5M1851.5 1322.5V1333M1291.5 1333V1343.5M1291.5 1343.5V1354M1851.5 1333V1343.5M1851.5 1343.5V1354M1291.5 1354V1364.5M1291.5 1364.5V1375M1851.5 1354V1364.5M1851.5 1364.5V1375M1291.5 1375V1385.5M1291.5 1385.5V1396M1851.5 1375V1385.5M1851.5 1385.5V1396M1291.5 1396V1404.5A2 2 0 0 0 1293.5 1406.5H1296M1296 1406.5H1299.5M1299.5 1406.5H1304M1304 1406.5H1307.5M1307.5 1406.5H1312M1312 1406.5H1315.5M1315.5 1406.5H1320M1320 1406.5H1323.5M1323.5 1406.5H1328M1328 1406.5H1331.5M1331.5 1406.5H1336M1336 1406.5H1339.5M1339.5 1406.5H1344M1344 1406.5H1347.5M1347.5 1406.5H1352M1352 1406.5H1355.5M1355.5 1406.5H1360M1360 1406.5H1363.5M1363.5 1406.5H1368M1368 1406.5H1371.5M1371.5 1406.5H1376M1376 1406.5H1379.5M1379.5 1406.5H1384M1384 1406.5H1387.5M1387.5 1406.5H1392M1392 1406.5H1395.5M1395.5 1406.5H1400M1400 1406.5H1403.5M1403.5 1406.5H1408M1408 1406.5H1411.5M1411.5 1406.5H1416M1416 1406.5H1419.5M1419.5 1406.5H1424M1424 1406.5H1427.5M1427.5 1406.5H1432M1432 1406.5H1435.5M1435.5 1406.5H1440M1440 1406.5H1443.5M1443.5 1406.5H1448M1448 1406.5H1451.5M1451.5 1406.5H1456M1456 1406.5H1459.5M1459.5 1406.5H1464M1464 1406.5H1467.5M1467.5 1406.5H1472M1472 1406.5H1475.5M1475.5 1406.5H1480M1480 1406.5H1483.5M1483.5 1406.5H1488M1488 1406.5H1491.5M1491.5 1406.5H1496M1496 1406.5H1499.5M1499.5 1406.5H1504M1504 1406.5H1507.5M1507.5 1406.5H1512M1512 1406.5H1515.5M1515.5 1406.5H1520M1520 1406.5H1523.5M1523.5 1406.5H1528M1528 1406.5H1531.5M1531.5 1406.5H1536M1536 1406.5H1539.5M1539.5 1406.5H1544M1544 1406.5H1547.5M1547.5 1406.5H1552M1552 1406.5H1555.5M1555.5 1406.5H1560M1560 1406.5H1563.5M1563.5 1406.5H1568M1568 1406.5H1571.5M1571.5 1406.5H1576M1576 1406.5H1579.5M1579.5 1406.5H1584M1584 1406.5H1587.5M1587.5 1406.5H1592M1592 1406.5H1595.5M1595.5 1406.5H1600M1600 1406.5H1603.5M1603.5 1406.5H1608M1608 1406.5H1611.5M1611.5 1406.5H1616M1616 1406.5H1619.5M1619.5 1406.5H1624M1624 1406.5H1627.5M1627.5 1406.5H1632M1632 1406.5H1635.5M1635.5 1406.5H1640M1640 1406.5H1643.5M1643.5 1406.5H1648M1648 1406.5H1651.5M1651.5 1406.5H1656M1656 1406.5H1659.5M1659.5 1406.5H1664M1664 1406.5H1667.5M1667.5 1406.5H1672M1672 1406.5H1675.5M1675.5 1406.5H1680M1680 1406.5H1683.5M1683.5 1406.5H1688M1688 1406.5H1691.5M1691.5 1406.5H1696M1696 1406.5H1699.5M1699.5 1406.5H1704M1704 1406.5H1707.5M1707.5 1406.5H1712M1712 1406.5H1715.5M1715.5 1406.5H1720M1720 1406.5H1723.5M1723.5 1406.5H1728M1728 1406.5H1731.5M1731.5 1406.5H1736M1736 1406.5H1739.5M1739.5 1406.5H1744M1744 1406.5H1747.5M1747.5 1406.5H1752M1752 1406.5H1755.5M1755.5 1406.5H1760M1760 1406.5H1763.5M1763.5 1406.5H1768M1768 1406.5H1771.5M1771.5 1406.5H1776M1776 1406.5H1779.5M1779.5 1406.5H1784M1784 1406.5H1787.5M1787.5 1406.5H1792M1792 1406.5H1795.5M1795.5 1406.5H1800M1800 1406.5H1803.5M1803.5 1406.5H1808M1808 1406.5H1811.5M1811.5 1406.5H1816M1816 1406.5H1819.5M1819.5 1406.5H1824M1824 1406.5H1827.5M1827.5 1406.5H1832M1832 1406.5H1835.5M1835.5 1406.5H1840M1840 1406.5H1843.5M1843.5 1406.5H1848M1848 1406.5H1849.5A2 2 0 0 0 1851.5 1404.5V1396" stroke="#eba0ac" stroke-width="1" stroke-linecap="square" fill="none"/><path d="M1859.5 997V988.5A2 2 0 0 1 1861.5 986.5H1864M1864 986.5H1867.5M1867.5 986.5H1872M1872 986.5H1875.5M1875.5 986.5V997M1923.5 986.5H1928M1923.5 986.5V997M1928 986.5H1931.5M1931.5 986.5V997M1987.5 986.5H1992M1987.5 986.5V997M1992 986.5H1995.5M1995.5 986.5H2000M2000 986.5H2003.5M2003.5 986.5H2008M2008 986.5H2011.5M2011.5 986.5H2016M2016 986.5H2019.5M2019.5 986.5H2024M2024 986.5H2027.5M2027.5 986.5H2032M2032 986.5H2035.5M2035.5 986.5H2040M2040 986.5H2043.5M2043.5 986.5H2048M2048 986.5H2051.5M2051.5 986.5H2056M2056 986.5H2059.5M2059.5 986.5H2064M2064 986.5H2067.5M2067.5 986.5H2072M2072 986.5H2075.5M2075.5 986.5H2080M2080 986.5H2083.5M2083.5 986.5H2088M2088 986.5H2091.5M2091.5 986.5H2096M2096 986.5H2099.5M2099.5 986.5H2104M2104 986.5H2107.5M2107.5 986.5H2112M2112 986.5H2115.5M2115.5 986.5H2120M2120 986.5H2123.5M2123.5 986.5H2128M2128 986.5H2131.5M2131.5 986.5H2136M2136 986.5H2139.5M2139.5 986.5H2144M2144 986.5H2147.5M2147.5 986.5H2152M2152 986.5H2155.5M2155.5 986.5H2160M2160 986.5H2163.5M2163.5 986.5H2168M2168 986.5H2171.5M2171.5 986.5H2176M2176 986.5H2179.5M2179.5 986.5H2184M2184 986.5H2187.5M2187.5 986.5H2192M2192 986.5H2195.5M2195.5 986.5H2200M2200 986.5H2203.5M2203.5 986.5H2208M2208 986.5H2211.5M2211.5 986.5H2216M2216 986.5H2219.5M2219.5 986.5V997M2291.5 986.5H2296M2291.5 986.5V997M2296 986.5H2299.5M2299.5 986.5V997M2363.5 986.5H2368M2363.5 986.5V997M2368 986.5H2371.5M2371.5 986.5V997M2411.5 986.5H2416M2411.5 986.5V997M2416 986.5H2419.5M2419.5 986.5V997M2523.5 986.5H2528M2523.5 986.5V997M2528 986.5H2531.5M2531.5 986.5H2536M2536 986.5H2537.5A2 2 0 0 1 2539.5 988.5V997M1859.5 997V1007.5M1859.5 1007.5V1018M2539.5 997V1007.5M2539.5 1007.5V1018M1859.5 1018V1028.5M1859.5 1028.5V1039M2539.5 1018V1028.5M2539.5 1028.5V1039M1859.5 1039V1049.5M1859.5 1049.5V1060M2539.5 1039V1049.5M2539.5 1049.5V1060M1859.5 1060V1070.5M1859.5 1070.5V1081M2539.5 1060V1070.5M2539.5 1070.5V1081M1859.5 1081V1091.5M1859.5 1091.5V1102M2539.5 1081V1091.5M2539.5 1091.5V1102M1859.5 1102V1112.5M1859.5 1112.5V1123M2539.5 1102V1112.5M2539.5 1112.5V1123M1859.5 1123V1133.5M1859.5 1133.5V1144M2539.5 1123V1133.5M2539.5 1133.5V1144M1859.5 1144V1154.5M1859.5 1154.5V1165M2539.5 1144V1154.5M2539.5 1154.5V1165M1859.5 1165V1175.5M1859.5 1175.5V1186M2539.5 1165V1175.5M2539.5 1175.5V1186M1859.5 1186V1196.5M1859.5 1196.5V1207M2539.5 1186V1196.5M2539.5 1196.5V1207M1859.5 1207V1217.5M1859.5 1217.5V1228M2539.5 1207V1217.5M2539.5 1217.5V1228M1859.5 1228V1238.5M1859.5 1238.5V1249M2539.5 1228V1238.5M2539.5 1238.5V1249M1859.5 1249V1259.5M1859.5 1259.5V1270M2539.5 1249V1259.5M2539.5 1259.5V1270M1859.5 1270V1280.5M1859.5 1280.5V1291M2539.5 1270V1280.5M2539.5 1280.5V1291M1859.5 1291V1301.5M1859.5 1301.5V1312M2539.5 1291V1301.5M2539.5 1301.5V1312M1859.5 1312V1322.5M1859.5 1322.5V1333M2539.5 1312V1322.5M2539.5 1322.5V1333M1859.5 1333V1343.5M1859.5 1343.5V1354M2539.5 1333V1343.5M2539.5 1343.5V1354M1859.5 1354V1364.5M1859.5 1364.5V1375M2539.5 1354V1364.5M2539.5 1364.5V1375M1859.5 1375V1385.5M1859.5 1385.5V1396M2539.5 1375V1385.5M2539.5 1385.5V1396M1859.5 1396V1404.5A2 2 0 0 0 1861.5 1406.5H1864M1864 1406.5H1867.5M1867.5 1396V1406.5M1955.5 1406.5H1960M1955.5 1396V1406.5M1960 1406.5H1963.5M1963.5 1396V1406.5M2019.5 1406.5H2024M2019.5 1396V1406.5M2024 1406.5H2027.5M2027.5 1396V1406.5M2107.5 1406.5H2112M2107.5 1396V1406.5M2112 1406.5H2115.5M2115.5 1396V1406.5M2155.5 1406.5H2160M2155.5 1396V1406.5M2160 1406.5H2163.5M2163.5 1396V1406.5M2227.5 1406.5H2232M2227.5 1396V1406.5M2232 1406.5H2235.5M2235.5 1406.5H2240M2240 1406.5H2243.5M2243.5 1406.5H2248M2248 1406.5H2251.5M2251.5 1406.5H2256M2256 1406.5H2259.5M2259.5 1406.5H2264M2264 1406.5H2267.5M2267.5 1406.5H2272M2272 1406.5H2275.5M2275.5 1406.5H2280M2280 1406.5H2283.5M2283.5 1406.5H2288M2288 1406.5H2291.5M2291.5 1406.5H2296M2296 1406.5H2299.5M2299.5 1406.5H2304M2304 1406.5H2307.5M2307.5 1406.5H2312M2312 1406.5H2315.5M2315.5 1406.5H2320M2320 1406.5H2323.5M2323.5 1406.5H2328M2328 1406.5H2331.5M2331.5 1406.5H2336M2336 1406.5H2339.5M2339.5 1406.5H2344M2344 1406.5H2347.5M2347.5 1406.5H2352M2352 1406.5H2355.5M2355.5 1406.5H2360M2360 1406.5H2363.5M2363.5 1406.5H2368M2368 1406.5H2371.5M2371.5 1406.5H2376M2376 1406.5H2379.5M2379.5 1406.5H2384M2384 1406.5H2387.5M2387.5 1406.5H2392M2392 1406.5H2395.5M2395.5 1406.5H2400M2400 1406.5H2403.5M2403.5 1406.5H2408M2408 1406.5H2411.5M2411.5 1406.5H2416M2416 1406.5H2419.5M2419.5 1406.5H2424M2424 1406.5H2427.5M2427.5 1406.5H2432M2432 1406.5H2435.5M2435.5 1406.5H2440M2440 1406.5H2443.5M2443.5 1406.5H2448M2448 1406.5H2451.5M2451.5 1406.5H2456M2456 1406.5H2459.5M2459.5 1406.5H2464M2464 1406.5H2467.5M2467.5 1406.5H2472M2472 1406.5H2475.5M2475.5 1406.5H2480M2480 1406.5H2483.5M2483.5 1396V1406.5M2531.5 1406.5H2536M2531.5 1396V1406.5M2536 1406.5H2537.5A2 2 0 0 0 2539.5 1404.5V1396" stroke="#89b4fa" stroke-width="1" stroke-linecap="square" fill="none"/><path d="M2441 803h2v2h-2zM2445 803h2v2h-2zM2449 803h2v2h-2zM2453 803h2v2h-2zM2457 803h2v2h-2zM2461 803h2v2h-2zM2465 803h2v2h-2zM2469 803h2v2h-2zM2473 803h2v2h-2zM2477 803h2v2h-2z" fill="#e8e3a8" shape-rendering="crispEdges"/><path d="M1801 824h2v2h-2zM1805 824h2v2h-2zM1809 824h2v2h-2zM1813 824h2v2h-2zM1817 824h2v2h-2zM1821 824h2v2h-2zM1825 824h2v2h-2zM1829 824h2v2h-2zM1833 824h2v2h-2zM1837 824h2v2h-2zM1841 824h2v2h-2zM1845 824h2v2h-2zM1849 824h2v2h-2zM1853 824h2v2h-2zM1857 824h2v2h-2zM1861 824h2v2h-2zM1865 824h2v2h-2zM1869 824h2v2h-2zM1873 824h2v2h-2zM1877 824h2v2h-2zM1881 824h2v2h-2zM1885 824h2v2h-2zM1889 824h2v2h-2zM1893 824h2v2h-2zM1897 824h2v2h-2zM1901 824h2v2h-2zM1913 824h2v2h-2zM1917 824h2v2h-2zM1921 824h2v2h-2zM1925 824h2v2h-2zM1929 824h2v2h-2zM1933 824h2v2h-2zM1937 824h2v2h-2zM1941 824h2v2h-2zM1945 824h2v2h-2zM1949 824h2v2h-2zM1953 824h2v2h-2zM1957 824h2v2h-2zM1961 824h2v2h-2zM1965 824h2v2h-2zM1969 824h2v2h-2zM1973 824h2v2h-2zM1801 845h2v2h-2zM1805 845h2v2h-2zM1809 845h2v2h-2zM1813 845h2v2h-2zM1817 845h2v2h-2zM1821 845h2v2h-2zM1825 845h2v2h-2zM1829 845h2v2h-2zM1833 845h2v2h-2zM1837 845h2v2h-2zM1841 845h2v2h-2zM1845 845h2v2h-2zM1849 845h2v2h-2zM1853 845h2v2h-2zM1857 845h2v2h-2zM1861 845h2v2h-2zM1865 845h2v2h-2zM1869 845h2v2h-2zM1873 845h2v2h-2zM1877 845h2v2h-2zM1881 845h2v2h-2zM1885 845h2v2h-2zM1889 845h2v2h-2zM1893 845h2v2h-2zM1897 845h2v2h-2zM1901 845h2v2h-2zM1905 845h2v2h-2zM1909 845h2v2h-2zM1913 845h2v2h-2zM1917 845h2v2h-2zM1921 845h2v2h-2zM1925 845h2v2h-2zM1929 845h2v2h-2zM1933 845h2v2h-2zM1937 845h2v2h-2zM1941 845h2v2h-2zM1945 845h2v2h-2zM1949 845h2v2h-2zM1953 845h2v2h-2zM1957 845h2v2h-2zM1961 845h2v2h-2zM1965 845h2v2h-2zM1969 845h2v2h-2zM1973 845h2v2h-2zM1801 866h2v2h-2zM1805 866h2v2h-2zM1809 866h2v2h-2zM1813 866h2v2h-2zM1817 866h2v2h-2zM1821 866h2v2h-2zM1825 866h2v2h-2zM1829 866h2v2h-2zM1833 866h2v2h-2zM1837 866h2v2h-2zM1841 866h2v2h-2zM1845 866h2v2h-2zM1849 866h2v2h-2zM1853 866h2v2h-2zM1857 866h2v2h-2zM1861 866h2v2h-2zM1865 866h2v2h-2zM1869 866h2v2h-2zM1873 866h2v2h-2zM1877 866h2v2h-2zM1881 866h2v2h-2zM1885 866h2v2h-2zM1889 866h2v2h-2zM1893 866h2v2h-2zM1897 866h2v2h-2zM1901 866h2v2h-2zM1913 866h2v2h-2zM1917 866h2v2h-2zM1921 866h2v2h-2zM1925 866h2v2h-2zM1929 866h2v2h-2zM1933 866h2v2h-2zM1937 866h2v2h-2zM1941 866h2v2h-2zM1945 866h2v2h-2zM1949 866h2v2h-2zM1953 866h2v2h-2zM1957 866h2v2h-2zM1961 866h2v2h-2zM1965 866h2v2h-2zM1969 866h2v2h-2zM1973 866h2v2h-2zM1801 887h2v2h-2zM1805 887h2v2h-2zM1809 887h2v2h-2zM1813 887h2v2h-2zM1817 887h2v2h-2zM1821 887h2v2h-2zM1825 887h2v2h-2zM1829 887h2v2h-2zM1833 887h2v2h-2zM1837 887h2v2h-2zM1841 887h2v2h-2zM1845 887h2v2h-2zM1849 887h2v2h-2zM1853 887h2v2h-2zM1857 887h2v2h-2zM1861 887h2v2h-2zM1865 887h2v2h-2zM1869 887h2v2h-2zM1873 887h2v2h-2zM1877 887h2v2h-2zM1881 887h2v2h-2zM1885 887h2v2h-2zM1889 887h2v2h-2zM1893 887h2v2h-2zM1897 887h2v2h-2zM1901 887h2v2h-2zM1905 887h2v2h-2zM1909 887h2v2h-2zM1913 887h2v2h-2zM1917 887h2v2h-2zM1921 887h2v2h-2zM1925 887h2v2h-2zM1929 887h2v2h-2zM1933 887h2v2h-2zM1937 887h2v2h-2zM1941 887h2v2h-2zM1945 887h2v2h-2zM1949 887h2v2h-2zM1953 887h2v2h-2zM1957 887h2v2h-2zM1961 887h2v2h-2zM1965 887h2v2h-2zM1969 887h2v2h-2zM1973 887h2v2h-2zM1801 908h2v2h-2zM1805 908h2v2h-2zM1809 908h2v2h-2zM1813 908h2v2h-2zM1817 908h2v2h-2zM1821 908h2v2h-2zM1825 908h2v2h-2zM1829 908h2v2h-2zM1833 908h2v2h-2zM1837 908h2v2h-2zM1841 908h2v2h-2zM1845 908h2v2h-2zM1849 908h2v2h-2zM1853 908h2v2h-2zM1857 908h2v2h-2zM1861 908h2v2h-2zM1865 908h2v2h-2zM1869 908h2v2h-2zM1873 908h2v2h-2zM1877 908h2v2h-2zM1881 908h2v2h-2zM1885 908h2v2h-2zM1889 908h2v2h-2zM1893 908h2v2h-2zM1897 908h2v2h-2zM1901 908h2v2h-2zM1913 908h2v2h-2zM1917 908h2v2h-2zM1921 908h2v2h-2zM1925 908h2v2h-2zM1929 908h2v2h-2zM1933 908h2v2h-2zM1937 908h2v2h-2zM1941 908h2v2h-2zM1945 908h2v2h-2zM1949 908h2v2h-2zM1953 908h2v2h-2zM1957 908h2v2h-2zM1961 908h2v2h-2zM1965 908h2v2h-2zM1969 908h2v2h-2zM1973 908h2v2h-2zM2057 824h2v2h-2zM2061 824h2v2h-2zM2065 824h2v2h-2zM2069 824h2v2h-2zM2073 824h2v2h-2zM2077 824h2v2h-2zM2081 824h2v2h-2zM2085 824h2v2h-2zM2089 824h2v2h-2zM2093 824h2v2h-2zM2097 824h2v2h-2zM2101 824h2v2h-2zM2105 824h2v2h-2zM2109 824h2v2h-2zM2113 824h2v2h-2zM2117 824h2v2h-2zM2121 824h2v2h-2zM2125 824h2v2h-2zM2129 824h2v2h-2zM2133 824h2v2h-2zM2137 824h2v2h-2zM2141 824h2v2h-2zM2145 824h2v2h-2zM2149 824h2v2h-2zM2153 824h2v2h-2zM2157 824h2v2h-2zM2161 824h2v2h-2zM2165 824h2v2h-2zM2169 824h2v2h-2zM2173 824h2v2h-2zM2177 824h2v2h-2zM2181 824h2v2h-2zM2185 824h2v2h-2zM2189 824h2v2h-2zM2193 824h2v2h-2zM2197 824h2v2h-2zM2201 824h2v2h-2zM2205 824h2v2h-2zM2209 824h2v2h-2zM2213 824h2v2h-2zM2217 824h2v2h-2zM2221 824h2v2h-2zM2225 824h2v2h-2zM2229 824h2v2h-2zM2057 845h2v2h-2zM2065 845h2v2h-2zM2069 845h2v2h-2zM2077 845h2v2h-2zM2081 845h2v2h-2zM2085 845h2v2h-2zM2093 845h2v2h-2zM2097 845h2v2h-2zM2105 845h2v2h-2zM2109 845h2v2h-2zM2117 845h2v2h-2zM2121 845h2v2h-2zM2125 845h2v2h-2zM2129 845h2v2h-2zM2133 845h2v2h-2zM2137 845h2v2h-2zM2141 845h2v2h-2zM2173 845h2v2h-2zM2177 845h2v2h-2zM2181 845h2v2h-2zM2185 845h2v2h-2zM2189 845h2v2h-2zM2197 845h2v2h-2zM2201 845h2v2h-2zM2209 845h2v2h-2zM2213 845h2v2h-2zM2217 845h2v2h-2zM2221 845h2v2h-2zM2225 845h2v2h-2zM2229 845h2v2h-2zM2057 866h2v2h-2zM2061 866h2v2h-2zM2065 866h2v2h-2zM2069 866h2v2h-2zM2073 866h2v2h-2zM2077 866h2v2h-2zM2081 866h2v2h-2zM2085 866h2v2h-2zM2089 866h2v2h-2zM2093 866h2v2h-2zM2097 866h2v2h-2zM2101 866h2v2h-2zM2105 866h2v2h-2zM2109 866h2v2h-2zM2113 866h2v2h-2zM2117 866h2v2h-2zM2121 866h2v2h-2zM2129 866h2v2h-2zM2133 866h2v2h-2zM2137 866h2v2h-2zM2141 866h2v2h-2zM2177 866h2v2h-2zM2181 866h2v2h-2zM2185 866h2v2h-2zM2189 866h2v2h-2zM2193 866h2v2h-2zM2197 866h2v2h-2zM2201 866h2v2h-2zM2205 866h2v2h-2zM2209 866h2v2h-2zM2213 866h2v2h-2zM2217 866h2v2h-2zM2221 866h2v2h-2zM2225 866h2v2h-2zM2229 866h2v2h-2zM2057 887h2v2h-2zM2061 887h2v2h-2zM2065 887h2v2h-2zM2069 887h2v2h-2zM2073 887h2v2h-2zM2077 887h2v2h-2zM2081 887h2v2h-2zM2085 887h2v2h-2zM2089 887h2v2h-2zM2093 887h2v2h-2zM2097 887h2v2h-2zM2101 887h2v2h-2zM2105 887h2v2h-2zM2109 887h2v2h-2zM2113 887h2v2h-2zM2117 887h2v2h-2zM2121 887h2v2h-2zM2125 887h2v2h-2zM2129 887h2v2h-2zM2133 887h2v2h-2zM2137 887h2v2h-2zM2141 887h2v2h-2zM2145 887h2v2h-2zM2149 887h2v2h-2zM2153 887h2v2h-2zM2157 887h2v2h-2zM2161 887h2v2h-2zM2169 887h2v2h-2zM2173 887h2v2h-2zM2177 887h2v2h-2zM2181 887h2v2h-2zM2185 887h2v2h-2zM2189 887h2v2h-2zM2193 887h2v2h-2zM2197 887h2v2h-2zM2201 887h2v2h-2zM2205 887h2v2h-2zM2209 887h2v2h-2zM2213 887h2v2h-2zM2217 887h2v2h-2zM2221 887h2v2h-2zM2225 887h2v2h-2zM2229 887h2v2h-2zM2057 908h2v2h-2zM2061 908h2v2h-2zM2065 908h2v2h-2zM2069 908h2v2h-2zM2073 908h2v2h-2zM2077 908h2v2h-2zM2081 908h2v2h-2zM2085 908h2v2h-2zM2089 908h2v2h-2zM2093 908h2v2h-2zM2097 908h2v2h-2zM2101 908h2v2h-2zM2105 908h2v2h-2zM2109 908h2v2h-2zM2113 908h2v2h-2zM2117 908h2v2h-2zM2121 908h2v2h-2zM2125 908h2v2h-2zM2129 908h2v2h-2zM2133 908h2v2h-2zM2137 908h2v2h-2zM2141 908h2v2h-2zM2145 908h2v2h-2zM2149 908h2v2h-2zM2153 908h2v2h-2zM2157 908h2v2h-2zM2161 908h2v2h-2zM2169 908h2v2h-2zM2173 908h2v2h-2zM2177 908h2v2h-2zM2181 908h2v2h-2zM2185 908h2v2h-2zM2189 908h2v2h-2zM2193 908h2v2h-2zM2197 908h2v2h-2zM2201 908h2v2h-2zM2205 908h2v2h-2zM2209 908h2v2h-2zM2213 908h2v2h-2zM2217 908h2v2h-2zM2221 908h2v2h-2zM2225 908h2v2h-2zM2229 908h2v2h-2zM2313 824h2v2h-2zM2321 824h2v2h-2zM2325 824h2v2h-2zM2329 824h2v2h-2zM2333 824h2v2h-2zM2337 824h2v2h-2zM2341 824h2v2h-2zM2345 824h2v2h-2zM2349 824h2v2h-2zM2353 824h2v2h-2zM2365 824h2v2h-2zM2373 824h2v2h-2zM2377 824h2v2h-2zM2385 824h2v2h-2zM2389 824h2v2h-2zM2393 824h2v2h-2zM2397 824h2v2h-2zM2433 824h2v2h-2zM2437 824h2v2h-2zM2441 824h2v2h-2zM2453 824h2v2h-2zM2457 824h2v2h-2zM2461 824h2v2h-2zM2465 824h2v2h-2zM2469 824h2v2h-2zM2473 824h2v2h-2zM2477 824h2v2h-2zM2481 824h2v2h-2zM2485 824h2v2h-2zM2317 845h2v2h-2zM2321 845h2v2h-2zM2333 845h2v2h-2zM2341 845h2v2h-2zM2345 845h2v2h-2zM2349 845h2v2h-2zM2353 845h2v2h-2zM2357 845h2v2h-2zM2361 845h2v2h-2zM2365 845h2v2h-2zM2369 845h2v2h-2zM2373 845h2v2h-2zM2381 845h2v2h-2zM2385 845h2v2h-2zM2389 845h2v2h-2zM2393 845h2v2h-2zM2397 845h2v2h-2zM2401 845h2v2h-2zM2405 845h2v2h-2zM2409 845h2v2h-2zM2413 845h2v2h-2zM2425 845h2v2h-2zM2433 845h2v2h-2zM2437 845h2v2h-2zM2441 845h2v2h-2zM2449 845h2v2h-2zM2457 845h2v2h-2zM2461 845h2v2h-2zM2465 845h2v2h-2zM2469 845h2v2h-2zM2473 845h2v2h-2zM2477 845h2v2h-2zM2485 845h2v2h-2zM2313 866h2v2h-2zM2317 866h2v2h-2zM2321 866h2v2h-2zM2325 866h2v2h-2zM2329 866h2v2h-2zM2333 866h2v2h-2zM2337 866h2v2h-2zM2341 866h2v2h-2zM2345 866h2v2h-2zM2349 866h2v2h-2zM2353 866h2v2h-2zM2357 866h2v2h-2zM2365 866h2v2h-2zM2373 866h2v2h-2zM2377 866h2v2h-2zM2381 866h2v2h-2zM2385 866h2v2h-2zM2389 866h2v2h-2zM2393 866h2v2h-2zM2397 866h2v2h-2zM2433 866h2v2h-2zM2437 866h2v2h-2zM2441 866h2v2h-2zM2445 866h2v2h-2zM2449 866h2v2h-2zM2453 866h2v2h-2zM2457 866h2v2h-2zM2461 866h2v2h-2zM2465 866h2v2h-2zM2469 866h2v2h-2zM2473 866h2v2h-2zM2477 866h2v2h-2zM2481 866h2v2h-2zM2485 866h2v2h-2zM2313 887h2v2h-2zM2317 887h2v2h-2zM2321 887h2v2h-2zM2325 887h2v2h-2zM2329 887h2v2h-2zM2333 887h2v2h-2zM2337 887h2v2h-2zM2341 887h2v2h-2zM2345 887h2v2h-2zM2349 887h2v2h-2zM2353 887h2v2h-2zM2357 887h2v2h-2zM2361 887h2v2h-2zM2365 887h2v2h-2zM2369 887h2v2h-2zM2373 887h2v2h-2zM2377 887h2v2h-2zM2381 887h2v2h-2zM2385 887h2v2h-2zM2389 887h2v2h-2zM2393 887h2v2h-2zM2397 887h2v2h-2zM2401 887h2v2h-2zM2405 887h2v2h-2zM2409 887h2v2h-2zM2413 887h2v2h-2zM2421 887h2v2h-2zM2425 887h2v2h-2zM2429 887h2v2h-2zM2433 887h2v2h-2zM2437 887h2v2h-2zM2441 887h2v2h-2zM2445 887h2v2h-2zM2449 887h2v2h-2zM2453 887h2v2h-2zM2457 887h2v2h-2zM2461 887h2v2h-2zM2465 887h2v2h-2zM2469 887h2v2h-2zM2473 887h2v2h-2zM2477 887h2v2h-2zM2481 887h2v2h-2zM2485 887h2v2h-2zM2313 908h2v2h-2zM2317 908h2v2h-2zM2321 908h2v2h-2zM2325 908h2v2h-2zM2329 908h2v2h-2zM2333 908h2v2h-2zM2337 908h2v2h-2zM2341 908h2v2h-2zM2345 908h2v2h-2zM2349 908h2v2h-2zM2353 908h2v2h-2zM2357 908h2v2h-2zM2361 908h2v2h-2zM2365 908h2v2h-2zM2369 908h2v2h-2zM2373 908h2v2h-2zM2377 908h2v2h-2zM2381 908h2v2h-2zM2385 908h2v2h-2zM2389 908h2v2h-2zM2393 908h2v2h-2zM2397 908h2v2h-2zM2405 908h2v2h-2zM2437 908h2v2h-2zM2441 908h2v2h-2zM2445 908h2v2h-2zM2449 908h2v2h-2zM2453 908h2v2h-2zM2457 908h2v2h-2zM2461 908h2v2h-2zM2465 908h2v2h-2zM2469 908h2v2h-2zM2473 908h2v2h-2zM2477 908h2v2h-2zM2481 908h2v2h-2zM2485 908h2v2h-2zM1609 1034h2v2h-2zM1613 1034h2v2h-2zM1617 1034h2v2h-2zM1621 1034h2v2h-2zM1625 1034h2v2h-2zM1629 1034h2v2h-2zM1633 1034h2v2h-2zM1637 1034h2v2h-2zM1641 1034h2v2h-2zM1645 1034h2v2h-2zM1649 1034h2v2h-2zM1653 1034h2v2h-2zM1657 1034h2v2h-2zM1661 1034h2v2h-2zM1665 1034h2v2h-2zM1669 1034h2v2h-2zM1673 1034h2v2h-2zM1677 1034h2v2h-2zM1681 1034h2v2h-2zM1685 1034h2v2h-2zM1689 1034h2v2h-2zM1693 1034h2v2h-2zM1697 1034h2v2h-2zM1701 1034h2v2h-2zM1705 1034h2v2h-2zM1709 1034h2v2h-2zM1713 1034h2v2h-2zM1717 1034h2v2h-2zM1721 1034h2v2h-2zM1725 1034h2v2h-2zM1729 1034h2v2h-2zM1733 1034h2v2h-2zM1737 1034h2v2h-2zM1741 1034h2v2h-2zM1745 1034h2v2h-2zM1749 1034h2v2h-2zM1753 1034h2v2h-2zM1757 1034h2v2h-2zM1761 1034h2v2h-2zM1765 1034h2v2h-2zM1769 1034h2v2h-2zM1773 1034h2v2h-2zM1777 1034h2v2h-2zM1781 1034h2v2h-2zM1785 1034h2v2h-2zM1789 1034h2v2h-2zM1793 1034h2v2h-2zM1797 1034h2v2h-2zM1801 1034h2v2h-2zM1805 1034h2v2h-2zM1809 1034h2v2h-2zM1813 1034h2v2h-2zM1817 1034h2v2h-2zM1821 1034h2v2h-2zM1825 1034h2v2h-2zM1829 1034h2v2h-2zM1833 1034h2v2h-2zM1837 1034h2v2h-2zM1609 1097h2v2h-2zM1613 1097h2v2h-2zM1617 1097h2v2h-2zM1621 1097h2v2h-2zM1625 1097h2v2h-2zM1629 1097h2v2h-2zM1633 1097h2v2h-2zM1637 1097h2v2h-2zM1641 1097h2v2h-2zM1645 1097h2v2h-2zM1649 1097h2v2h-2zM1653 1097h2v2h-2zM1657 1097h2v2h-2zM1661 1097h2v2h-2zM1665 1097h2v2h-2zM1669 1097h2v2h-2zM1673 1097h2v2h-2zM1677 1097h2v2h-2zM1681 1097h2v2h-2zM1685 1097h2v2h-2zM1689 1097h2v2h-2zM1693 1097h2v2h-2zM1697 1097h2v2h-2zM1701 1097h2v2h-2zM1705 1097h2v2h-2zM1709 1097h2v2h-2zM1713 1097h2v2h-2zM1717 1097h2v2h-2zM1721 1097h2v2h-2zM1725 1097h2v2h-2zM1729 1097h2v2h-2zM1733 1097h2v2h-2zM1737 1097h2v2h-2zM1741 1097h2v2h-2zM1745 1097h2v2h-2zM1749 1097h2v2h-2zM1753 1097h2v2h-2zM1757 1097h2v2h-2zM1761 1097h2v2h-2zM1765 1097h2v2h-2zM1769 1097h2v2h-2zM1773 1097h2v2h-2zM1777 1097h2v2h-2zM1781 1097h2v2h-2zM1785 1097h2v2h-2zM1789 1097h2v2h-2zM1793 1097h2v2h-2zM1797 1097h2v2h-2zM1801 1097h2v2h-2zM1805 1097h2v2h-2zM1809 1097h2v2h-2zM1813 1097h2v2h-2zM1817 1097h2v2h-2zM1821 1097h2v2h-2zM1825 1097h2v2h-2zM1829 1097h2v2h-2zM1833 1097h2v2h-2zM1837 1097h2v2h-2zM1609 1160h2v2h-2zM1613 1160h2v2h-2zM1617 1160h2v2h-2zM1621 1160h2v2h-2zM1625 1160h2v2h-2zM1629 1160h2v2h-2zM1633 1160h2v2h-2zM1637 1160h2v2h-2zM1641 1160h2v2h-2zM1645 1160h2v2h-2zM1649 1160h2v2h-2zM1653 1160h2v2h-2zM1657 1160h2v2h-2zM1661 1160h2v2h-2zM1665 1160h2v2h-2zM1669 1160h2v2h-2zM1673 1160h2v2h-2zM1677 1160h2v2h-2zM1681 1160h2v2h-2zM1685 1160h2v2h-2zM1689 1160h2v2h-2zM1693 1160h2v2h-2zM1697 1160h2v2h-2zM1701 1160h2v2h-2zM1705 1160h2v2h-2zM1709 1160h2v2h-2zM1713 1160h2v2h-2zM1717 1160h2v2h-2zM1721 1160h2v2h-2zM1725 1160h2v2h-2zM1729 1160h2v2h-2zM1733 1160h2v2h-2zM1737 1160h2v2h-2zM1741 1160h2v2h-2zM1745 1160h2v2h-2zM1749 1160h2v2h-2zM1753 1160h2v2h-2zM1757 1160h2v2h-2zM1761 1160h2v2h-2zM1765 1160h2v2h-2zM1769 1160h2v2h-2zM1773 1160h2v2h-2zM1777 1160h2v2h-2zM1781 1160h2v2h-2zM1785 1160h2v2h-2zM1789 1160h2v2h-2zM1793 1160h2v2h-2zM1797 1160h2v2h-2zM1801 1160h2v2h-2zM1805 1160h2v2h-2zM1809 1160h2v2h-2zM1813 1160h2v2h-2zM1817 1160h2v2h-2zM1821 1160h2v2h-2zM1825 1160h2v2h-2zM1829 1160h2v2h-2zM1833 1160h2v2h-2zM1837 1160h2v2h-2zM2441 1034h2v2h-2zM2445 1034h2v2h-2zM2449 1034h2v2h-2zM2453 1034h2v2h-2zM2457 1034h2v2h-2zM2461 1034h2v2h-2zM2465 1034h2v2h-2zM2469 1034h2v2h-2zM2473 1034h2v2h-2zM2477 1034h2v2h-2zM2441 1055h2v2h-2zM2445 1055h2v2h-2zM2453 1055h2v2h-2zM2457 1055h2v2h-2zM2465 1055h2v2h-2zM2473 1055h2v2h-2zM2441 1076h2v2h-2zM2445 1076h2v2h-2zM2449 1076h2v2h-2zM2453 1076h2v2h-2zM2457 1076h2v2h-2zM2461 1076h2v2h-2zM2465 1076h2v2h-2zM2469 1076h2v2h-2zM2473 1076h2v2h-2zM2477 1076h2v2h-2zM2441 1097h2v2h-2zM2445 1097h2v2h-2zM2449 1097h2v2h-2zM2457 1097h2v2h-2zM2461 1097h2v2h-2zM2465 1097h2v2h-2zM2469 1097h2v2h-2zM2477 1097h2v2h-2zM2441 1118h2v2h-2zM2445 1118h2v2h-2zM2449 1118h2v2h-2zM2453 1118h2v2h-2zM2457 1118h2v2h-2zM2465 1118h2v2h-2zM2469 1118h2v2h-2zM2473 1118h2v2h-2zM2477 1118h2v2h-2zM2441 1139h2v2h-2zM2445 1139h2v2h-2zM2449 1139h2v2h-2zM2453 1139h2v2h-2zM2457 1139h2v2h-2zM2461 1139h2v2h-2zM2465 1139h2v2h-2zM2469 1139h2v2h-2zM2473 1139h2v2h-2zM2477 1139h2v2h-2zM2441 1160h2v2h-2zM2445 1160h2v2h-2zM2449 1160h2v2h-2zM2453 1160h2v2h-2zM2457 1160h2v2h-2zM2461 1160h2v2h-2zM2465 1160h2v2h-2zM2469 1160h2v2h-2zM2473 1160h2v2h-2zM2477 1160h2v2h-2zM2441 1181h2v2h-2zM2445 1181h2v2h-2zM2449 1181h2v2h-2zM2453 1181h2v2h-2zM2457 1181h2v2h-2zM2461 1181h2v2h-2zM2465 1181h2v2h-2zM2469 1181h2v2h-2zM2477 1181h2v2h-2zM2441 1202h2v2h-2zM2445 1202h2v2h-2zM2449 1202h2v2h-2zM2453 1202h2v2h-2zM2457 1202h2v2h-2zM2461 1202h2v2h-2zM2465 1202h2v2h-2zM2469 1202h2v2h-2zM2473 1202h2v2h-2zM2477 1202h2v2h-2zM2441 1223h2v2h-2zM2445 1223h2v2h-2zM2449 1223h2v2h-2zM2453 1223h2v2h-2zM2457 1223h2v2h-2zM2461 1223h2v2h-2zM2465 1223h2v2h-2zM2469 1223h2v2h-2zM2473 1223h2v2h-2zM2477 1223h2v2h-2zM2441 1244h2v2h-2zM2445 1244h2v2h-2zM2449 1244h2v2h-2zM2453 1244h2v2h-2zM2457 1244h2v2h-2zM2461 1244h2v2h-2zM2465 1244h2v2h-2zM2469 1244h2v2h-2zM2473 1244h2v2h-2zM2477 1244h2v2h-2zM2441 1265h2v2h-2zM2445 1265h2v2h-2zM2449 1265h2v2h-2zM2453 1265h2v2h-2zM2457 1265h2v2h-2zM2461 1265h2v2h-2zM2465 1265h2v2h-2zM2469 1265h2v2h-2zM2473 1265h2v2h-2zM2477 1265h2v2h-2zM2441 1286h2v2h-2zM2445 1286h2v2h-2zM2449 1286h2v2h-2zM2453 1286h2v2h-2zM2457 1286h2v2h-2zM2461 1286h2v2h-2zM2465 1286h2v2h-2zM2469 1286h2v2h-2zM2473 1286h2v2h-2zM2477 1286h2v2h-2zM2441 1307h2v2h-2zM2445 1307h2v2h-2zM2449 1307h2v2h-2zM2453 1307h2v2h-2zM2457 1307h2v2h-2zM2461 1307h2v2h-2zM2465 1307h2v2h-2zM2469 1307h2v2h-2zM2473 1307h2v2h-2zM2477 1307h2v2h-2zM2441 1328h2v2h-2zM2445 1328h2v2h-2zM2449 1328h2v2h-2zM2453 1328h2v2h-2zM2457 1328h2v2h-2zM2461 1328h2v2h-2zM2465 1328h2v2h-2zM2469 1328h2v2h-2zM2473 1328h2v2h-2zM2477 1328h2v2h-2zM2441 1349h2v2h-2zM2445 1349h2v2h-2zM2449 1349h2v2h-2zM2453 1349h2v2h-2zM2457 1349h2v2h-2zM2461 1349h2v2h-2zM2465 1349h2v2h-2zM2469 1349h2v2h-2zM2473 1349h2v2h-2zM2477 1349h2v2h-2zM2441 1370h2v2h-2zM2445 1370h2v2h-2zM2449 1370h2v2h-2zM2453 1370h2v2h-2zM2457 1370h2v2h-2zM2461 1370h2v2h-2zM2465 1370h2v2h-2zM2469 1370h2v2h-2zM2473 1370h2v2h-2zM2477 1370h2v2h-2zM2441 1391h2v2h-2zM2445 1391h2v2h-2zM2453 1391h2v2h-2zM2457 1391h2v2h-2zM2461 1391h2v2h-2zM2465 1391h2v2h-2zM2469 1391h2v2h-2zM2473 1391h2v2h-2zM2477 1391h2v2h-2z" fill="#5c6076" shape-rendering="crispEdges"/><path d="M1905 824h2v2h-2zM1909 824h2v2h-2zM1905 866h2v2h-2zM1909 866h2v2h-2zM1905 908h2v2h-2zM1909 908h2v2h-2zM2145 845h2v2h-2zM2149 845h2v2h-2zM2153 845h2v2h-2zM2157 845h2v2h-2zM2161 845h2v2h-2zM2165 845h2v2h-2zM2169 845h2v2h-2zM2149 866h2v2h-2zM2153 866h2v2h-2zM2157 866h2v2h-2zM2161 866h2v2h-2zM2165 866h2v2h-2zM2169 866h2v2h-2zM2165 887h2v2h-2zM2405 824h2v2h-2zM2409 824h2v2h-2zM2413 824h2v2h-2zM2417 824h2v2h-2zM2421 824h2v2h-2zM2425 824h2v2h-2zM2429 824h2v2h-2zM2417 845h2v2h-2zM2421 845h2v2h-2zM2405 866h2v2h-2zM2409 866h2v2h-2zM2413 866h2v2h-2zM2417 866h2v2h-2zM2421 866h2v2h-2zM2425 866h2v2h-2zM2417 887h2v2h-2zM2413 908h2v2h-2zM2417 908h2v2h-2zM2421 908h2v2h-2zM2425 908h2v2h-2zM1453 866h2v2h-2zM1453 874h2v2h-2zM1457 866h2v2h-2zM1457 874h2v2h-2zM1461 866h2v2h-2zM1461 874h2v2h-2zM1465 866h2v2h-2zM1465 874h2v2h-2zM1469 866h2v2h-2zM1469 874h2v2h-2zM1473 866h2v2h-2zM1473 874h2v2h-2zM1477 866h2v2h-2zM1477 874h2v2h-2zM1481 866h2v2h-2zM1481 874h2v2h-2zM1485 866h2v2h-2zM1485 874h2v2h-2zM1489 866h2v2h-2zM1489 874h2v2h-2zM1493 866h2v2h-2zM1493 874h2v2h-2zM1497 866h2v2h-2zM1497 874h2v2h-2zM1501 866h2v2h-2zM1501 874h2v2h-2zM1505 866h2v2h-2zM1505 874h2v2h-2zM1509 866h2v2h-2zM1509 874h2v2h-2zM1513 866h2v2h-2zM1513 874h2v2h-2zM1517 866h2v2h-2zM1517 874h2v2h-2zM1521 866h2v2h-2zM1521 874h2v2h-2zM1525 866h2v2h-2zM1525 874h2v2h-2zM1529 866h2v2h-2zM1529 874h2v2h-2zM1533 866h2v2h-2zM1533 874h2v2h-2zM1537 866h2v2h-2zM1537 874h2v2h-2zM1541 866h2v2h-2zM1541 874h2v2h-2zM1545 866h2v2h-2zM1545 874h2v2h-2zM1549 866h2v2h-2zM1549 874h2v2h-2zM1553 866h2v2h-2zM1553 874h2v2h-2zM1557 866h2v2h-2zM1557 874h2v2h-2zM1561 866h2v2h-2zM1561 874h2v2h-2zM1565 866h2v2h-2zM1565 874h2v2h-2zM1569 866h2v2h-2zM1569 874h2v2h-2zM1573 866h2v2h-2zM1573 874h2v2h-2zM1577 866h2v2h-2zM1577 874h2v2h-2zM1581 866h2v2h-2zM1581 874h2v2h-2zM1585 866h2v2h-2zM1585 874h2v2h-2zM1589 866h2v2h-2zM1589 874h2v2h-2zM1593 866h2v2h-2zM1593 874h2v2h-2zM1597 866h2v2h-2zM1597 874h2v2h-2zM1601 866h2v2h-2zM1601 874h2v2h-2zM1605 866h2v2h-2zM1605 874h2v2h-2zM1609 866h2v2h-2zM1609 874h2v2h-2zM1613 866h2v2h-2zM1613 874h2v2h-2zM1617 866h2v2h-2zM1617 874h2v2h-2zM1621 866h2v2h-2zM1621 874h2v2h-2zM1625 866h2v2h-2zM1625 874h2v2h-2zM1629 866h2v2h-2zM1629 874h2v2h-2zM1633 866h2v2h-2zM1633 874h2v2h-2zM1637 866h2v2h-2zM1637 874h2v2h-2zM1641 866h2v2h-2zM1641 874h2v2h-2zM1645 866h2v2h-2zM1645 874h2v2h-2zM1649 866h2v2h-2zM1649 874h2v2h-2zM1653 866h2v2h-2zM1653 874h2v2h-2zM1657 866h2v2h-2zM1657 874h2v2h-2zM1661 866h2v2h-2zM1661 874h2v2h-2zM1665 866h2v2h-2zM1665 874h2v2h-2zM1669 866h2v2h-2zM1669 874h2v2h-2zM1673 866h2v2h-2zM1673 874h2v2h-2zM1677 866h2v2h-2zM1677 874h2v2h-2zM1681 866h2v2h-2zM1681 874h2v2h-2zM1685 866h2v2h-2zM1685 874h2v2h-2zM1689 866h2v2h-2zM1689 874h2v2h-2zM1693 866h2v2h-2zM1693 874h2v2h-2zM1697 866h2v2h-2zM1697 874h2v2h-2zM1701 866h2v2h-2zM1701 874h2v2h-2zM1705 866h2v2h-2zM1705 874h2v2h-2zM1709 866h2v2h-2zM1709 874h2v2h-2zM1713 866h2v2h-2zM1713 874h2v2h-2zM1717 866h2v2h-2zM1717 874h2v2h-2zM1721 866h2v2h-2zM1721 874h2v2h-2zM1725 866h2v2h-2zM1725 874h2v2h-2zM1729 866h2v2h-2zM1729 874h2v2h-2zM1733 866h2v2h-2zM1733 874h2v2h-2zM1737 866h2v2h-2zM1737 874h2v2h-2zM1741 866h2v2h-2zM1741 874h2v2h-2zM1745 866h2v2h-2zM1745 874h2v2h-2zM1749 866h2v2h-2zM1749 874h2v2h-2zM1753 866h2v2h-2zM1753 874h2v2h-2zM1757 866h2v2h-2zM1757 874h2v2h-2zM1457 845h2v2h-2zM1457 853h2v2h-2zM1457 874h2v2h-2zM1457 858h2v2h-2zM1457 879h2v2h-2zM1457 862h2v2h-2zM1457 883h2v2h-2zM1457 866h2v2h-2zM1457 887h2v2h-2zM1689 862h2v2h-2zM1689 879h2v2h-2zM1693 862h2v2h-2zM1693 879h2v2h-2z" fill="#94e2d5" shape-rendering="crispEdges"/><path d="M1305 1055h2v2h-2zM1309 1055h2v2h-2zM1313 1055h2v2h-2zM1317 1055h2v2h-2zM1321 1055h2v2h-2zM1325 1055h2v2h-2zM1329 1055h2v2h-2zM1333 1055h2v2h-2zM1337 1055h2v2h-2zM1341 1055h2v2h-2zM1345 1055h2v2h-2zM1349 1055h2v2h-2zM1353 1055h2v2h-2zM1357 1055h2v2h-2zM1361 1055h2v2h-2zM1365 1055h2v2h-2zM1369 1055h2v2h-2zM1373 1055h2v2h-2zM1377 1055h2v2h-2zM1381 1055h2v2h-2zM1385 1055h2v2h-2zM1389 1055h2v2h-2zM1393 1055h2v2h-2zM1397 1055h2v2h-2zM1401 1055h2v2h-2zM1405 1055h2v2h-2zM1409 1055h2v2h-2zM1413 1055h2v2h-2zM1417 1055h2v2h-2zM1421 1055h2v2h-2zM1425 1055h2v2h-2zM1429 1055h2v2h-2zM1433 1055h2v2h-2zM1437 1055h2v2h-2zM1441 1055h2v2h-2zM1445 1055h2v2h-2zM1449 1055h2v2h-2zM1453 1055h2v2h-2zM1457 1055h2v2h-2zM1461 1055h2v2h-2zM1465 1055h2v2h-2zM1469 1055h2v2h-2zM1473 1055h2v2h-2zM1477 1055h2v2h-2zM1481 1055h2v2h-2zM1485 1055h2v2h-2zM1489 1055h2v2h-2zM1493 1055h2v2h-2zM1497 1055h2v2h-2zM1501 1055h2v2h-2zM1505 1055h2v2h-2zM1509 1055h2v2h-2zM1513 1055h2v2h-2zM1517 1055h2v2h-2zM1325 1315h2v2h-2zM1329 1315h2v2h-2zM1333 1315h2v2h-2zM1337 1315h2v2h-2zM1341 1315h2v2h-2zM1345 1315h2v2h-2zM1349 1315h2v2h-2zM1353 1315h2v2h-2zM1357 1315h2v2h-2zM1361 1315h2v2h-2zM1365 1315h2v2h-2zM1369 1315h2v2h-2zM1373 1315h2v2h-2zM1377 1315h2v2h-2zM1381 1315h2v2h-2zM1385 1315h2v2h-2zM1389 1315h2v2h-2zM1393 1315h2v2h-2zM1397 1315h2v2h-2zM1401 1315h2v2h-2zM1405 1315h2v2h-2zM1409 1315h2v2h-2zM1413 1315h2v2h-2zM1417 1315h2v2h-2zM1421 1315h2v2h-2zM1425 1315h2v2h-2zM1429 1315h2v2h-2zM1433 1315h2v2h-2zM1437 1315h2v2h-2zM1441 1315h2v2h-2zM1445 1315h2v2h-2zM1449 1315h2v2h-2zM1453 1315h2v2h-2zM1457 1315h2v2h-2zM1461 1315h2v2h-2zM1465 1315h2v2h-2zM1469 1315h2v2h-2zM1473 1315h2v2h-2zM1477 1315h2v2h-2zM1481 1315h2v2h-2zM1485 1315h2v2h-2zM1489 1315h2v2h-2zM1493 1315h2v2h-2zM1497 1315h2v2h-2zM1501 1315h2v2h-2zM1505 1315h2v2h-2zM1509 1315h2v2h-2zM1513 1315h2v2h-2zM1517 1315h2v2h-2zM1521 1315h2v2h-2zM1525 1315h2v2h-2zM1529 1315h2v2h-2zM1533 1315h2v2h-2zM1537 1315h2v2h-2zM1541 1315h2v2h-2zM1545 1315h2v2h-2zM1549 1315h2v2h-2zM1553 1315h2v2h-2zM1557 1315h2v2h-2zM1561 1315h2v2h-2zM1565 1315h2v2h-2zM1569 1315h2v2h-2zM1573 1315h2v2h-2zM1577 1315h2v2h-2zM1581 1315h2v2h-2zM1585 1315h2v2h-2zM1589 1315h2v2h-2zM1593 1315h2v2h-2zM1597 1315h2v2h-2zM1601 1315h2v2h-2zM1605 1315h2v2h-2zM1609 1315h2v2h-2zM1613 1315h2v2h-2zM1617 1315h2v2h-2zM1621 1315h2v2h-2zM1625 1315h2v2h-2zM1629 1315h2v2h-2zM1505 1320h2v2h-2zM1505 1324h2v2h-2zM1505 1328h2v2h-2zM1513 1320h2v2h-2zM1513 1324h2v2h-2zM1513 1328h2v2h-2zM1549 1315h2v2h-2zM1549 1320h2v2h-2zM1549 1324h2v2h-2zM1549 1328h2v2h-2zM1553 1315h2v2h-2zM1553 1320h2v2h-2zM1553 1324h2v2h-2zM1553 1328h2v2h-2zM1557 1315h2v2h-2zM1557 1320h2v2h-2zM1557 1324h2v2h-2zM1557 1328h2v2h-2zM1561 1315h2v2h-2zM1561 1320h2v2h-2zM1561 1324h2v2h-2zM1561 1328h2v2h-2zM1565 1315h2v2h-2zM1565 1320h2v2h-2zM1565 1324h2v2h-2zM1565 1328h2v2h-2zM1569 1315h2v2h-2zM1569 1320h2v2h-2zM1569 1324h2v2h-2zM1569 1328h2v2h-2zM1581 1320h2v2h-2zM1581 1324h2v2h-2zM1581 1328h2v2h-2zM1589 1320h2v2h-2zM1589 1324h2v2h-2zM1589 1328h2v2h-2zM1593 1320h2v2h-2zM1593 1324h2v2h-2zM1605 1320h2v2h-2zM1605 1324h2v2h-2zM1629 1315h2v2h-2zM1629 1320h2v2h-2zM1629 1324h2v2h-2zM1629 1328h2v2h-2z" fill="#a6e3a1" shape-rendering="crispEdges"/><path d="M1305 1084h2v2h-2zM1305 1089h2v2h-2zM1305 1093h2v2h-2zM1305 1097h2v2h-2zM1309 1084h2v2h-2zM1309 1089h2v2h-2zM1309 1093h2v2h-2zM1309 1097h2v2h-2zM1313 1084h2v2h-2zM1313 1089h2v2h-2zM1313 1093h2v2h-2zM1313 1097h2v2h-2zM1317 1084h2v2h-2zM1317 1089h2v2h-2zM1317 1093h2v2h-2zM1317 1097h2v2h-2zM1321 1084h2v2h-2zM1321 1089h2v2h-2zM1321 1093h2v2h-2zM1321 1097h2v2h-2zM1325 1084h2v2h-2zM1325 1089h2v2h-2zM1325 1093h2v2h-2zM1325 1097h2v2h-2zM1329 1084h2v2h-2zM1329 1089h2v2h-2zM1329 1093h2v2h-2zM1329 1097h2v2h-2zM1333 1084h2v2h-2zM1333 1089h2v2h-2zM1333 1093h2v2h-2zM1333 1097h2v2h-2zM1337 1084h2v2h-2zM1337 1089h2v2h-2zM1337 1093h2v2h-2zM1337 1097h2v2h-2zM1341 1084h2v2h-2zM1341 1089h2v2h-2zM1341 1093h2v2h-2zM1341 1097h2v2h-2zM1345 1084h2v2h-2zM1345 1089h2v2h-2zM1345 1093h2v2h-2zM1345 1097h2v2h-2zM1349 1084h2v2h-2zM1349 1089h2v2h-2zM1349 1093h2v2h-2zM1349 1097h2v2h-2zM1353 1084h2v2h-2zM1353 1089h2v2h-2zM1353 1093h2v2h-2zM1353 1097h2v2h-2zM1357 1084h2v2h-2zM1357 1089h2v2h-2zM1357 1093h2v2h-2zM1357 1097h2v2h-2zM1361 1084h2v2h-2zM1361 1089h2v2h-2zM1361 1093h2v2h-2zM1361 1097h2v2h-2zM1365 1084h2v2h-2zM1365 1089h2v2h-2zM1365 1093h2v2h-2zM1365 1097h2v2h-2zM1369 1084h2v2h-2zM1369 1089h2v2h-2zM1369 1093h2v2h-2zM1369 1097h2v2h-2zM1373 1084h2v2h-2zM1373 1089h2v2h-2zM1373 1093h2v2h-2zM1373 1097h2v2h-2zM1377 1084h2v2h-2zM1377 1089h2v2h-2zM1377 1093h2v2h-2zM1377 1097h2v2h-2zM1381 1084h2v2h-2zM1381 1089h2v2h-2zM1381 1093h2v2h-2zM1381 1097h2v2h-2zM1385 1084h2v2h-2zM1385 1089h2v2h-2zM1385 1093h2v2h-2zM1385 1097h2v2h-2zM1389 1084h2v2h-2zM1389 1089h2v2h-2zM1389 1093h2v2h-2zM1389 1097h2v2h-2zM1393 1084h2v2h-2zM1393 1089h2v2h-2zM1393 1093h2v2h-2zM1393 1097h2v2h-2zM1397 1084h2v2h-2zM1397 1089h2v2h-2zM1397 1093h2v2h-2zM1397 1097h2v2h-2zM1401 1084h2v2h-2zM1401 1089h2v2h-2zM1401 1093h2v2h-2zM1401 1097h2v2h-2zM1405 1084h2v2h-2zM1405 1089h2v2h-2zM1405 1093h2v2h-2zM1405 1097h2v2h-2zM1409 1084h2v2h-2zM1409 1089h2v2h-2zM1409 1093h2v2h-2zM1409 1097h2v2h-2zM1413 1084h2v2h-2zM1413 1089h2v2h-2zM1413 1093h2v2h-2zM1413 1097h2v2h-2zM1417 1084h2v2h-2zM1417 1089h2v2h-2zM1417 1093h2v2h-2zM1417 1097h2v2h-2zM1421 1084h2v2h-2zM1421 1089h2v2h-2zM1421 1093h2v2h-2zM1421 1097h2v2h-2zM1425 1084h2v2h-2zM1425 1089h2v2h-2zM1425 1093h2v2h-2zM1425 1097h2v2h-2zM1429 1084h2v2h-2zM1429 1089h2v2h-2zM1429 1093h2v2h-2zM1429 1097h2v2h-2zM1433 1084h2v2h-2zM1433 1089h2v2h-2zM1433 1093h2v2h-2zM1433 1097h2v2h-2zM1437 1084h2v2h-2zM1437 1089h2v2h-2zM1437 1093h2v2h-2zM1437 1097h2v2h-2zM1441 1084h2v2h-2zM1441 1089h2v2h-2zM1441 1093h2v2h-2zM1441 1097h2v2h-2zM1445 1084h2v2h-2zM1445 1089h2v2h-2zM1445 1093h2v2h-2zM1445 1097h2v2h-2zM1449 1084h2v2h-2zM1449 1089h2v2h-2zM1449 1093h2v2h-2zM1449 1097h2v2h-2zM1453 1084h2v2h-2zM1453 1089h2v2h-2zM1453 1093h2v2h-2zM1453 1097h2v2h-2zM1457 1084h2v2h-2zM1457 1089h2v2h-2zM1457 1093h2v2h-2zM1457 1097h2v2h-2zM1461 1084h2v2h-2zM1461 1089h2v2h-2zM1461 1093h2v2h-2zM1461 1097h2v2h-2zM1465 1084h2v2h-2zM1465 1089h2v2h-2zM1465 1093h2v2h-2zM1465 1097h2v2h-2zM1469 1084h2v2h-2zM1469 1089h2v2h-2zM1469 1093h2v2h-2zM1469 1097h2v2h-2zM1473 1084h2v2h-2zM1473 1089h2v2h-2zM1473 1093h2v2h-2zM1473 1097h2v2h-2zM1477 1084h2v2h-2zM1477 1089h2v2h-2zM1477 1093h2v2h-2zM1477 1097h2v2h-2zM1481 1084h2v2h-2zM1481 1089h2v2h-2zM1481 1093h2v2h-2zM1481 1097h2v2h-2zM1485 1084h2v2h-2zM1485 1089h2v2h-2zM1485 1093h2v2h-2zM1485 1097h2v2h-2zM1489 1084h2v2h-2zM1489 1089h2v2h-2zM1489 1093h2v2h-2zM1489 1097h2v2h-2zM1493 1084h2v2h-2zM1493 1089h2v2h-2zM1493 1093h2v2h-2zM1493 1097h2v2h-2zM1497 1084h2v2h-2zM1497 1089h2v2h-2zM1497 1093h2v2h-2zM1497 1097h2v2h-2zM1501 1084h2v2h-2zM1501 1089h2v2h-2zM1501 1093h2v2h-2zM1501 1097h2v2h-2zM1505 1084h2v2h-2zM1505 1089h2v2h-2zM1505 1093h2v2h-2zM1505 1097h2v2h-2zM1509 1084h2v2h-2zM1509 1089h2v2h-2zM1509 1093h2v2h-2zM1509 1097h2v2h-2zM1513 1084h2v2h-2zM1513 1089h2v2h-2zM1513 1093h2v2h-2zM1513 1097h2v2h-2zM1517 1084h2v2h-2zM1517 1089h2v2h-2zM1517 1093h2v2h-2zM1517 1097h2v2h-2zM1549 1231h2v2h-2zM1549 1236h2v2h-2zM1549 1240h2v2h-2zM1549 1244h2v2h-2zM1557 1231h2v2h-2zM1557 1236h2v2h-2zM1557 1240h2v2h-2zM1557 1244h2v2h-2zM1561 1231h2v2h-2zM1561 1236h2v2h-2zM1561 1240h2v2h-2zM1561 1244h2v2h-2zM1565 1231h2v2h-2zM1565 1236h2v2h-2zM1565 1240h2v2h-2zM1565 1244h2v2h-2zM1569 1231h2v2h-2zM1569 1236h2v2h-2zM1569 1240h2v2h-2zM1569 1244h2v2h-2z" fill="#f38ba8" shape-rendering="crispEdges"/><path d="M1305 1135h2v2h-2zM1305 1139h2v2h-2zM1309 1135h2v2h-2zM1309 1139h2v2h-2zM1313 1135h2v2h-2zM1313 1139h2v2h-2zM1317 1135h2v2h-2zM1317 1139h2v2h-2zM1321 1135h2v2h-2zM1321 1139h2v2h-2zM1325 1135h2v2h-2zM1325 1139h2v2h-2zM1329 1135h2v2h-2zM1329 1139h2v2h-2zM1333 1135h2v2h-2zM1333 1139h2v2h-2zM1337 1135h2v2h-2zM1337 1139h2v2h-2zM1341 1135h2v2h-2zM1341 1139h2v2h-2zM1345 1135h2v2h-2zM1345 1139h2v2h-2zM1349 1135h2v2h-2zM1349 1139h2v2h-2zM1353 1135h2v2h-2zM1353 1139h2v2h-2zM1357 1135h2v2h-2zM1357 1139h2v2h-2zM1361 1135h2v2h-2zM1361 1139h2v2h-2zM1365 1135h2v2h-2zM1365 1139h2v2h-2zM1369 1135h2v2h-2zM1369 1139h2v2h-2zM1373 1135h2v2h-2zM1373 1139h2v2h-2zM1377 1135h2v2h-2zM1377 1139h2v2h-2zM1381 1135h2v2h-2zM1381 1139h2v2h-2zM1385 1135h2v2h-2zM1385 1139h2v2h-2zM1389 1135h2v2h-2zM1389 1139h2v2h-2zM1393 1135h2v2h-2zM1393 1139h2v2h-2zM1397 1135h2v2h-2zM1397 1139h2v2h-2zM1401 1135h2v2h-2zM1401 1139h2v2h-2zM1405 1135h2v2h-2zM1405 1139h2v2h-2zM1409 1135h2v2h-2zM1409 1139h2v2h-2zM1413 1135h2v2h-2zM1413 1139h2v2h-2zM1417 1135h2v2h-2zM1417 1139h2v2h-2zM1421 1135h2v2h-2zM1421 1139h2v2h-2zM1425 1135h2v2h-2zM1425 1139h2v2h-2zM1429 1135h2v2h-2zM1429 1139h2v2h-2zM1433 1135h2v2h-2zM1433 1139h2v2h-2zM1437 1135h2v2h-2zM1437 1139h2v2h-2zM1441 1135h2v2h-2zM1441 1139h2v2h-2zM1445 1135h2v2h-2zM1445 1139h2v2h-2zM1449 1135h2v2h-2zM1449 1139h2v2h-2zM1453 1135h2v2h-2zM1453 1139h2v2h-2zM1457 1135h2v2h-2zM1457 1139h2v2h-2zM1461 1135h2v2h-2zM1461 1139h2v2h-2zM1465 1135h2v2h-2zM1465 1139h2v2h-2zM1469 1135h2v2h-2zM1469 1139h2v2h-2zM1473 1135h2v2h-2zM1473 1139h2v2h-2zM1477 1135h2v2h-2zM1477 1139h2v2h-2zM1481 1135h2v2h-2zM1481 1139h2v2h-2zM1485 1135h2v2h-2zM1485 1139h2v2h-2zM1489 1135h2v2h-2zM1489 1139h2v2h-2zM1493 1135h2v2h-2zM1493 1139h2v2h-2zM1497 1135h2v2h-2zM1497 1139h2v2h-2zM1501 1135h2v2h-2zM1501 1139h2v2h-2zM1505 1135h2v2h-2zM1505 1139h2v2h-2zM1509 1135h2v2h-2zM1509 1139h2v2h-2zM1513 1135h2v2h-2zM1513 1139h2v2h-2zM1517 1135h2v2h-2zM1517 1139h2v2h-2z" fill="#89b4fa" shape-rendering="crispEdges"/><path d="M1305 1181h2v2h-2zM1309 1181h2v2h-2zM1313 1181h2v2h-2zM1317 1181h2v2h-2zM1321 1181h2v2h-2zM1325 1181h2v2h-2zM1329 1181h2v2h-2zM1333 1181h2v2h-2zM1337 1181h2v2h-2zM1341 1181h2v2h-2zM1345 1181h2v2h-2zM1349 1181h2v2h-2zM1353 1181h2v2h-2zM1357 1181h2v2h-2zM1361 1181h2v2h-2zM1365 1181h2v2h-2zM1369 1181h2v2h-2zM1373 1181h2v2h-2zM1377 1181h2v2h-2zM1381 1181h2v2h-2zM1385 1181h2v2h-2zM1389 1181h2v2h-2zM1393 1181h2v2h-2zM1397 1181h2v2h-2zM1401 1181h2v2h-2zM1405 1181h2v2h-2zM1409 1181h2v2h-2zM1413 1181h2v2h-2zM1417 1181h2v2h-2zM1421 1181h2v2h-2zM1425 1181h2v2h-2zM1429 1181h2v2h-2zM1433 1181h2v2h-2zM1437 1181h2v2h-2zM1441 1181h2v2h-2zM1445 1181h2v2h-2zM1449 1181h2v2h-2zM1453 1181h2v2h-2zM1457 1181h2v2h-2zM1461 1181h2v2h-2zM1465 1181h2v2h-2zM1469 1181h2v2h-2zM1473 1181h2v2h-2zM1477 1181h2v2h-2zM1481 1181h2v2h-2zM1485 1181h2v2h-2zM1489 1181h2v2h-2zM1493 1181h2v2h-2zM1497 1181h2v2h-2zM1501 1181h2v2h-2zM1505 1181h2v2h-2zM1509 1181h2v2h-2zM1513 1181h2v2h-2zM1517 1181h2v2h-2z" fill="#cba6f7" shape-rendering="crispEdges"/><path d="M1325 1307h2v2h-2zM1329 1307h2v2h-2zM1333 1307h2v2h-2zM1337 1307h2v2h-2zM1341 1307h2v2h-2zM1345 1307h2v2h-2zM1349 1307h2v2h-2zM1353 1307h2v2h-2zM1357 1307h2v2h-2zM1361 1307h2v2h-2zM1365 1307h2v2h-2zM1369 1307h2v2h-2zM1373 1307h2v2h-2zM1377 1307h2v2h-2zM1381 1307h2v2h-2zM1385 1307h2v2h-2zM1389 1307h2v2h-2zM1393 1307h2v2h-2zM1397 1307h2v2h-2zM1401 1307h2v2h-2zM1405 1307h2v2h-2zM1409 1307h2v2h-2zM1413 1307h2v2h-2zM1417 1307h2v2h-2zM1421 1307h2v2h-2zM1425 1307h2v2h-2zM1429 1307h2v2h-2zM1433 1307h2v2h-2zM1437 1307h2v2h-2zM1441 1307h2v2h-2zM1445 1307h2v2h-2zM1449 1307h2v2h-2zM1453 1307h2v2h-2zM1457 1307h2v2h-2zM1461 1307h2v2h-2zM1465 1307h2v2h-2zM1469 1307h2v2h-2zM1473 1307h2v2h-2zM1477 1307h2v2h-2zM1481 1307h2v2h-2zM1485 1307h2v2h-2zM1489 1307h2v2h-2zM1493 1307h2v2h-2zM1497 1307h2v2h-2zM1501 1307h2v2h-2zM1505 1307h2v2h-2zM1509 1307h2v2h-2zM1513 1307h2v2h-2zM1517 1307h2v2h-2zM1521 1307h2v2h-2zM1525 1307h2v2h-2zM1529 1307h2v2h-2zM1533 1307h2v2h-2zM1537 1307h2v2h-2zM1541 1307h2v2h-2zM1545 1307h2v2h-2zM1549 1307h2v2h-2zM1553 1307h2v2h-2zM1557 1307h2v2h-2zM1561 1307h2v2h-2zM1565 1307h2v2h-2zM1569 1307h2v2h-2zM1573 1307h2v2h-2zM1577 1307h2v2h-2zM1581 1307h2v2h-2zM1585 1307h2v2h-2zM1589 1307h2v2h-2zM1593 1307h2v2h-2zM1597 1307h2v2h-2zM1601 1307h2v2h-2zM1605 1307h2v2h-2zM1609 1307h2v2h-2zM1613 1307h2v2h-2zM1617 1307h2v2h-2zM1621 1307h2v2h-2zM1625 1307h2v2h-2zM1629 1307h2v2h-2zM1505 1294h2v2h-2zM1505 1299h2v2h-2zM1505 1303h2v2h-2zM1513 1294h2v2h-2zM1513 1299h2v2h-2zM1513 1303h2v2h-2zM1513 1307h2v2h-2zM1537 1303h2v2h-2zM1345 1303h2v2h-2zM1373 1303h2v2h-2zM1549 1294h2v2h-2zM1549 1299h2v2h-2zM1549 1303h2v2h-2zM1549 1307h2v2h-2zM1553 1294h2v2h-2zM1553 1299h2v2h-2zM1553 1303h2v2h-2zM1553 1307h2v2h-2zM1557 1294h2v2h-2zM1557 1299h2v2h-2zM1557 1303h2v2h-2zM1557 1307h2v2h-2zM1561 1294h2v2h-2zM1561 1299h2v2h-2zM1561 1303h2v2h-2zM1561 1307h2v2h-2zM1565 1294h2v2h-2zM1565 1299h2v2h-2zM1565 1303h2v2h-2zM1565 1307h2v2h-2zM1569 1294h2v2h-2zM1569 1299h2v2h-2zM1569 1303h2v2h-2zM1569 1307h2v2h-2zM1581 1303h2v2h-2zM1589 1294h2v2h-2zM1589 1299h2v2h-2zM1589 1303h2v2h-2zM1589 1307h2v2h-2zM1593 1294h2v2h-2zM1593 1299h2v2h-2zM1593 1303h2v2h-2zM1593 1307h2v2h-2zM1605 1294h2v2h-2zM1605 1299h2v2h-2zM1605 1303h2v2h-2zM1605 1307h2v2h-2zM1629 1294h2v2h-2zM1629 1299h2v2h-2zM1629 1303h2v2h-2zM1629 1307h2v2h-2z" fill="#fab387" shape-rendering="crispEdges"/><path d="M1513 1278h2v2h-2zM1513 1282h2v2h-2zM1513 1286h2v2h-2zM1549 1273h2v2h-2zM1549 1278h2v2h-2zM1549 1282h2v2h-2zM1549 1286h2v2h-2zM1553 1273h2v2h-2zM1553 1278h2v2h-2zM1553 1282h2v2h-2zM1553 1286h2v2h-2zM1557 1273h2v2h-2zM1557 1278h2v2h-2zM1557 1282h2v2h-2zM1557 1286h2v2h-2zM1561 1273h2v2h-2zM1561 1278h2v2h-2zM1561 1282h2v2h-2zM1561 1286h2v2h-2zM1565 1273h2v2h-2zM1565 1278h2v2h-2zM1565 1282h2v2h-2zM1565 1286h2v2h-2zM1569 1273h2v2h-2zM1569 1278h2v2h-2zM1569 1282h2v2h-2zM1569 1286h2v2h-2zM1589 1282h2v2h-2zM1589 1286h2v2h-2zM1593 1282h2v2h-2zM1593 1286h2v2h-2zM1605 1286h2v2h-2zM1629 1273h2v2h-2zM1629 1278h2v2h-2zM1629 1282h2v2h-2zM1629 1286h2v2h-2z" fill="#eea3ae" shape-rendering="crispEdges"/><path d="M1549 1252h2v2h-2zM1549 1257h2v2h-2zM1549 1261h2v2h-2zM1549 1265h2v2h-2zM1557 1252h2v2h-2zM1557 1257h2v2h-2zM1557 1261h2v2h-2zM1557 1265h2v2h-2zM1561 1252h2v2h-2zM1561 1257h2v2h-2zM1561 1261h2v2h-2zM1561 1265h2v2h-2zM1565 1252h2v2h-2zM1565 1257h2v2h-2zM1565 1261h2v2h-2zM1565 1265h2v2h-2zM1569 1252h2v2h-2zM1569 1257h2v2h-2zM1569 1261h2v2h-2zM1569 1265h2v2h-2zM1629 1257h2v2h-2zM1629 1261h2v2h-2zM1629 1265h2v2h-2z" fill="#f29cb0" shape-rendering="crispEdges"/><path d="M1505 1336h2v2h-2zM1505 1341h2v2h-2zM1505 1345h2v2h-2zM1505 1349h2v2h-2zM1513 1336h2v2h-2zM1513 1341h2v2h-2zM1513 1345h2v2h-2zM1549 1336h2v2h-2zM1549 1341h2v2h-2zM1549 1345h2v2h-2zM1549 1349h2v2h-2zM1557 1336h2v2h-2zM1557 1341h2v2h-2zM1557 1345h2v2h-2zM1557 1349h2v2h-2zM1561 1336h2v2h-2zM1561 1341h2v2h-2zM1561 1345h2v2h-2zM1561 1349h2v2h-2zM1565 1336h2v2h-2zM1565 1341h2v2h-2zM1565 1345h2v2h-2zM1565 1349h2v2h-2zM1569 1336h2v2h-2zM1569 1341h2v2h-2zM1569 1345h2v2h-2zM1569 1349h2v2h-2zM1581 1336h2v2h-2zM1589 1336h2v2h-2zM1589 1341h2v2h-2zM1589 1345h2v2h-2zM1589 1349h2v2h-2zM1629 1336h2v2h-2zM1629 1341h2v2h-2zM1629 1345h2v2h-2zM1629 1349h2v2h-2z" fill="#98e2c6" shape-rendering="crispEdges"/><path d="M1549 1357h2v2h-2zM1549 1362h2v2h-2zM1549 1366h2v2h-2zM1549 1370h2v2h-2zM1557 1357h2v2h-2zM1557 1362h2v2h-2zM1557 1366h2v2h-2zM1557 1370h2v2h-2zM1561 1357h2v2h-2zM1561 1362h2v2h-2zM1561 1366h2v2h-2zM1561 1370h2v2h-2zM1565 1357h2v2h-2zM1565 1362h2v2h-2zM1565 1366h2v2h-2zM1565 1370h2v2h-2zM1569 1357h2v2h-2zM1569 1362h2v2h-2zM1569 1366h2v2h-2zM1569 1370h2v2h-2zM1589 1357h2v2h-2zM1589 1362h2v2h-2zM1589 1366h2v2h-2zM1629 1357h2v2h-2zM1629 1362h2v2h-2zM1629 1366h2v2h-2zM1629 1370h2v2h-2z" fill="#93e1d8" shape-rendering="crispEdges"/><path d="M1549 1378h2v2h-2zM1549 1383h2v2h-2zM1549 1387h2v2h-2zM1549 1391h2v2h-2zM1557 1378h2v2h-2zM1557 1383h2v2h-2zM1557 1387h2v2h-2zM1557 1391h2v2h-2zM1561 1378h2v2h-2zM1561 1383h2v2h-2zM1561 1387h2v2h-2zM1561 1391h2v2h-2zM1565 1378h2v2h-2zM1565 1383h2v2h-2zM1565 1387h2v2h-2zM1565 1391h2v2h-2zM1569 1378h2v2h-2zM1569 1383h2v2h-2zM1569 1387h2v2h-2zM1569 1391h2v2h-2zM1629 1378h2v2h-2zM1629 1383h2v2h-2zM1629 1387h2v2h-2zM1629 1391h2v2h-2z" fill="#89dceb" shape-rendering="crispEdges"/><rect x="2296" y="752" width="7" height="7" fill="#b4befe" shape-rendering="crispEdges"/><rect x="2304" y="752" width="7" height="7" fill="#a9c0fc" shape-rendering="crispEdges"/><rect x="2312" y="752" width="7" height="7" fill="#9dc3f8" shape-rendering="crispEdges"/><rect x="2320" y="752" width="7" height="7" fill="#89c7f0" shape-rendering="crispEdges"/><rect x="2328" y="752" width="7" height="7" fill="#74c7ec" shape-rendering="crispEdges"/><rect x="2336" y="752" width="7" height="7" fill="#7bcfe6" shape-rendering="crispEdges"/><rect x="2344" y="752" width="7" height="7" fill="#85d6de" shape-rendering="crispEdges"/><rect x="2352" y="752" width="7" height="7" fill="#8ddcd8" shape-rendering="crispEdges"/><rect x="2360" y="752" width="7" height="7" fill="#94e2d5" shape-rendering="crispEdges"/><rect x="2368" y="752" width="7" height="7" fill="#45475a" shape-rendering="crispEdges"/><rect x="1800" y="794" width="7" height="7" fill="#94e2d5" shape-rendering="crispEdges"/><rect x="1808" y="794" width="7" height="7" fill="#45475a" shape-rendering="crispEdges"/><rect x="1816" y="794" width="7" height="7" fill="#45475a" shape-rendering="crispEdges"/><rect x="1824" y="794" width="7" height="7" fill="#45475a" shape-rendering="crispEdges"/><rect x="1832" y="794" width="7" height="7" fill="#45475a" shape-rendering="crispEdges"/><rect x="1840" y="794" width="7" height="7" fill="#45475a" shape-rendering="crispEdges"/><rect x="1848" y="794" width="7" height="7" fill="#45475a" shape-rendering="crispEdges"/><rect x="1856" y="794" width="7" height="7" fill="#45475a" shape-rendering="crispEdges"/><rect x="1864" y="794" width="7" height="7" fill="#45475a" shape-rendering="crispEdges"/><rect x="1872" y="794" width="7" height="7" fill="#45475a" shape-rendering="crispEdges"/><rect x="1880" y="794" width="7" height="7" fill="#45475a" shape-rendering="crispEdges"/><rect x="1888" y="794" width="7" height="7" fill="#45475a" shape-rendering="crispEdges"/><rect x="1896" y="794" width="7" height="7" fill="#45475a" shape-rendering="crispEdges"/><rect x="1904" y="794" width="7" height="7" fill="#45475a" shape-rendering="crispEdges"/><rect x="1912" y="794" width="7" height="7" fill="#45475a" shape-rendering="crispEdges"/><rect x="1920" y="794" width="7" height="7" fill="#45475a" shape-rendering="crispEdges"/><rect x="1928" y="794" width="7" height="7" fill="#45475a" shape-rendering="crispEdges"/><rect x="1936" y="794" width="7" height="7" fill="#45475a" shape-rendering="crispEdges"/><rect x="1944" y="794" width="7" height="7" fill="#45475a" shape-rendering="crispEdges"/><rect x="1952" y="794" width="7" height="7" fill="#45475a" shape-rendering="crispEdges"/><rect x="1960" y="794" width="7" height="7" fill="#45475a" shape-rendering="crispEdges"/><rect x="1968" y="794" width="7" height="7" fill="#45475a" shape-rendering="crispEdges"/><rect x="1976" y="794" width="7" height="7" fill="#45475a" shape-rendering="crispEdges"/><rect x="1984" y="794" width="7" height="7" fill="#45475a" shape-rendering="crispEdges"/><rect x="1992" y="794" width="7" height="7" fill="#45475a" shape-rendering="crispEdges"/><rect x="2000" y="794" width="7" height="7" fill="#45475a" shape-rendering="crispEdges"/><rect x="2008" y="794" width="7" height="7" fill="#45475a" shape-rendering="crispEdges"/><rect x="2016" y="794" width="7" height="7" fill="#45475a" shape-rendering="crispEdges"/><rect x="2024" y="794" width="7" height="7" fill="#45475a" shape-rendering="crispEdges"/><rect x="2032" y="794" width="7" height="7" fill="#45475a" shape-rendering="crispEdges"/><rect x="2040" y="794" width="7" height="7" fill="#45475a" shape-rendering="crispEdges"/><rect x="2048" y="794" width="7" height="7" fill="#45475a" shape-rendering="crispEdges"/><rect x="2056" y="794" width="7" height="7" fill="#45475a" shape-rendering="crispEdges"/><rect x="2064" y="794" width="7" height="7" fill="#45475a" shape-rendering="crispEdges"/><rect x="2072" y="794" width="7" height="7" fill="#45475a" shape-rendering="crispEdges"/><rect x="2080" y="794" width="7" height="7" fill="#45475a" shape-rendering="crispEdges"/><rect x="2088" y="794" width="7" height="7" fill="#45475a" shape-rendering="crispEdges"/><rect x="2096" y="794" width="7" height="7" fill="#45475a" shape-rendering="crispEdges"/><rect x="2104" y="794" width="7" height="7" fill="#45475a" shape-rendering="crispEdges"/><rect x="2112" y="794" width="7" height="7" fill="#45475a" shape-rendering="crispEdges"/><rect x="2120" y="794" width="7" height="7" fill="#45475a" shape-rendering="crispEdges"/><rect x="2128" y="794" width="7" height="7" fill="#45475a" shape-rendering="crispEdges"/><rect x="2136" y="794" width="7" height="7" fill="#45475a" shape-rendering="crispEdges"/><rect x="2144" y="794" width="7" height="7" fill="#45475a" shape-rendering="crispEdges"/><rect x="2152" y="794" width="7" height="7" fill="#45475a" shape-rendering="crispEdges"/><rect x="2160" y="794" width="7" height="7" fill="#45475a" shape-rendering="crispEdges"/><rect x="2168" y="794" width="7" height="7" fill="#45475a" shape-rendering="crispEdges"/><rect x="2176" y="794" width="7" height="7" fill="#45475a" shape-rendering="crispEdges"/><rect x="2184" y="794" width="7" height="7" fill="#45475a" shape-rendering="crispEdges"/><rect x="2192" y="794" width="7" height="7" fill="#45475a" shape-rendering="crispEdges"/><rect x="2200" y="794" width="7" height="7" fill="#45475a" shape-rendering="crispEdges"/><rect x="2208" y="794" width="7" height="7" fill="#45475a" shape-rendering="crispEdges"/><rect x="2216" y="794" width="7" height="7" fill="#45475a" shape-rendering="crispEdges"/><rect x="2224" y="794" width="7" height="7" fill="#45475a" shape-rendering="crispEdges"/><rect x="2232" y="794" width="7" height="7" fill="#45475a" shape-rendering="crispEdges"/><rect x="2240" y="794" width="7" height="7" fill="#45475a" shape-rendering="crispEdges"/><rect x="2248" y="794" width="7" height="7" fill="#45475a" shape-rendering="crispEdges"/><rect x="2256" y="794" width="7" height="7" fill="#45475a" shape-rendering="crispEdges"/><rect x="2264" y="794" width="7" height="7" fill="#45475a" shape-rendering="crispEdges"/><rect x="2272" y="794" width="7" height="7" fill="#45475a" shape-rendering="crispEdges"/><rect x="2280" y="794" width="7" height="7" fill="#45475a" shape-rendering="crispEdges"/><rect x="2288" y="794" width="7" height="7" fill="#45475a" shape-rendering="crispEdges"/><rect x="2296" y="794" width="7" height="7" fill="#45475a" shape-rendering="crispEdges"/><rect x="2304" y="794" width="7" height="7" fill="#45475a" shape-rendering="crispEdges"/><rect x="2312" y="794" width="7" height="7" fill="#45475a" shape-rendering="crispEdges"/><rect x="2320" y="794" width="7" height="7" fill="#45475a" shape-rendering="crispEdges"/><rect x="2328" y="794" width="7" height="7" fill="#45475a" shape-rendering="crispEdges"/><rect x="2336" y="794" width="7" height="7" fill="#45475a" shape-rendering="crispEdges"/><rect x="2344" y="794" width="7" height="7" fill="#45475a" shape-rendering="crispEdges"/><rect x="2352" y="794" width="7" height="7" fill="#45475a" shape-rendering="crispEdges"/><rect x="2360" y="794" width="7" height="7" fill="#45475a" shape-rendering="crispEdges"/><rect x="2368" y="794" width="7" height="7" fill="#45475a" shape-rendering="crispEdges"/><rect x="2376" y="794" width="7" height="7" fill="#45475a" shape-rendering="crispEdges"/><rect x="2384" y="794" width="7" height="7" fill="#45475a" shape-rendering="crispEdges"/><rect x="1656" y="1046" width="7" height="7" fill="#a6e3a1" shape-rendering="crispEdges"/><rect x="1664" y="1046" width="7" height="7" fill="#a3e3a8" shape-rendering="crispEdges"/><rect x="1672" y="1046" width="7" height="7" fill="#a0e3ae" shape-rendering="crispEdges"/><rect x="1680" y="1046" width="7" height="7" fill="#9de2b4" shape-rendering="crispEdges"/><rect x="1688" y="1046" width="7" height="7" fill="#9ae2ba" shape-rendering="crispEdges"/><rect x="1696" y="1046" width="7" height="7" fill="#97e2c0" shape-rendering="crispEdges"/><rect x="1704" y="1046" width="7" height="7" fill="#95e2c8" shape-rendering="crispEdges"/><rect x="1712" y="1046" width="7" height="7" fill="#45475a" shape-rendering="crispEdges"/><rect x="1720" y="1046" width="7" height="7" fill="#45475a" shape-rendering="crispEdges"/><rect x="1728" y="1046" width="7" height="7" fill="#45475a" shape-rendering="crispEdges"/><rect x="1736" y="1046" width="7" height="7" fill="#45475a" shape-rendering="crispEdges"/><rect x="1744" y="1046" width="7" height="7" fill="#45475a" shape-rendering="crispEdges"/><rect x="1752" y="1046" width="7" height="7" fill="#45475a" shape-rendering="crispEdges"/><rect x="1760" y="1046" width="7" height="7" fill="#45475a" shape-rendering="crispEdges"/><rect x="1656" y="1109" width="7" height="7" fill="#a6e3a1" shape-rendering="crispEdges"/><rect x="1664" y="1109" width="7" height="7" fill="#a3e3a8" shape-rendering="crispEdges"/><rect x="1672" y="1109" width="7" height="7" fill="#a0e3ae" shape-rendering="crispEdges"/><rect x="1680" y="1109" width="7" height="7" fill="#9de2b4" shape-rendering="crispEdges"/><rect x="1688" y="1109" width="7" height="7" fill="#9ae2ba" shape-rendering="crispEdges"/><rect x="1696" y="1109" width="7" height="7" fill="#97e2c0" shape-rendering="crispEdges"/><rect x="1704" y="1109" width="7" height="7" fill="#95e2c8" shape-rendering="crispEdges"/><rect x="1712" y="1109" width="7" height="7" fill="#94e2d5" shape-rendering="crispEdges"/><rect x="1720" y="1109" width="7" height="7" fill="#91e0d9" shape-rendering="crispEdges"/><rect x="1728" y="1109" width="7" height="7" fill="#8edfdd" shape-rendering="crispEdges"/><rect x="1736" y="1109" width="7" height="7" fill="#45475a" shape-rendering="crispEdges"/><rect x="1744" y="1109" width="7" height="7" fill="#45475a" shape-rendering="crispEdges"/><rect x="1752" y="1109" width="7" height="7" fill="#45475a" shape-rendering="crispEdges"/><rect x="1760" y="1109" width="7" height="7" fill="#45475a" shape-rendering="crispEdges"/><rect x="1656" y="1172" width="7" height="7" fill="#a6e3a1" shape-rendering="crispEdges"/><rect x="1664" y="1172" width="7" height="7" fill="#a3e3a8" shape-rendering="crispEdges"/><rect x="1672" y="1172" width="7" height="7" fill="#a0e3ae" shape-rendering="crispEdges"/><rect x="1680" y="1172" width="7" height="7" fill="#45475a" shape-rendering="crispEdges"/><rect x="1688" y="1172" width="7" height="7" fill="#45475a" shape-rendering="crispEdges"/><rect x="1696" y="1172" width="7" height="7" fill="#45475a" shape-rendering="crispEdges"/><rect x="1704" y="1172" width="7" height="7" fill="#45475a" shape-rendering="crispEdges"/><rect x="1712" y="1172" width="7" height="7" fill="#45475a" shape-rendering="crispEdges"/><rect x="1720" y="1172" width="7" height="7" fill="#45475a" shape-rendering="crispEdges"/><rect x="1728" y="1172" width="7" height="7" fill="#45475a" shape-rendering="crispEdges"/><rect x="1736" y="1172" width="7" height="7" fill="#45475a" shape-rendering="crispEdges"/><rect x="1744" y="1172" width="7" height="7" fill="#45475a" shape-rendering="crispEdges"/><rect x="1752" y="1172" width="7" height="7" fill="#45475a" shape-rendering="crispEdges"/><rect x="1760" y="1172" width="7" height="7" fill="#45475a" shape-rendering="crispEdges"/><rect x="2529" y="1021" width="6" height="16" fill="#cdd6f4" shape-rendering="crispEdges"/><path d="M1767.5 1217.5H1760.5M1763 1215.0L1760.5 1217.5L1763 1220.0" stroke="#89b4fa" stroke-width="1.3" fill="none"/><path d="M1832.5 1217.5H1839.5M1837 1215.0L1839.5 1217.5L1837 1220.0" stroke="#89b4fa" stroke-width="1.3" fill="none"/><path d="M2431.5 986.5H2424.5M2427 984.0L2424.5 986.5L2427 989.0" stroke="#89b4fa" stroke-width="1.3" fill="none"/><path d="M2512.5 986.5H2519.5M2517 984.0L2519.5 986.5L2517 989.0" stroke="#89b4fa" stroke-width="1.3" fill="none"/><path d="M1875.5 1413V1401M1872.5 1404L1875.5 1401L1878.5 1404" stroke="#7f849c" stroke-width="1.3" fill="none"/><path d="M1947.5 1401V1413M1944.5 1410L1947.5 1413L1950.5 1410" stroke="#89b4fa" stroke-width="1.3" fill="none"/><path d="M2015 1402V1410H2009M2011.5 1407.5L2009 1410L2011.5 1412.5" stroke="#7f849c" stroke-width="1.3" fill="none"/><path d="M2531.5 1014V1002M2528.5 1005L2531.5 1002L2534.5 1005" stroke="#cdd6f4" stroke-width="1.3" fill="none"/><path d="M2531.5 1380V1392M2528.5 1389L2531.5 1392L2534.5 1389" stroke="#cdd6f4" stroke-width="1.3" fill="none"/></svg><span class="m" style="left:1312px;top:746px;color:#89b4fa;">¹</span><span class="m" style="left:1320px;top:746px;color:#cdd6f4;font-weight:bold;">cpu</span><span class="m" style="left:1376px;top:746px;color:#89b4fa;">m</span><span class="m" style="left:1384px;top:746px;color:#cdd6f4;">enu</span><span class="m" style="left:1424px;top:746px;color:#89b4fa;">p</span><span class="m" style="left:1432px;top:746px;color:#cdd6f4;">reset *</span><span class="m" style="left:1888px;top:746px;color:#cdd6f4;font-weight:bold;">22:19:44</span><span class="m" style="left:2224px;top:746px;color:#cdd6f4;">BAT○ 98%</span><span class="m" style="left:2384px;top:746px;color:#cdd6f4;">0.00W</span><span class="m" style="left:2440px;top:746px;color:#89b4fa;">-</span><span class="m" style="left:2456px;top:746px;color:#cdd6f4;font-weight:bold;">2000</span><span class="m" style="left:2488px;top:746px;color:#cdd6f4;">ms</span><span class="m" style="left:2512px;top:746px;color:#89b4fa;">+</span><span class="m" style="left:1784px;top:767px;color:#cdd6f4;font-weight:bold;">Ryzen 7 PRO 8840U</span><span class="m" style="left:2464px;top:767px;color:#cdd6f4;">2.8 GHz</span><span class="m" style="left:1768px;top:788px;color:#cdd6f4;font-weight:bold;">CPU</span><span class="m" style="left:2416px;top:788px;color:#94e2d5;">2%</span><span class="m" style="left:2496px;top:788px;color:#cdd6f4;">46°C</span><span class="m" style="left:1768px;top:809px;color:#cdd6f4;">C0</span><span class="m" style="left:2000px;top:809px;color:#94e2d5;">3%</span><span class="m" style="left:2024px;top:809px;color:#cdd6f4;">C5</span><span class="m" style="left:2256px;top:809px;color:#94e2d5;">1%</span><span class="m" style="left:2280px;top:809px;color:#cdd6f4;">C10</span><span class="m" style="left:2512px;top:809px;color:#94e2d5;">4%</span><span class="m" style="left:1768px;top:830px;color:#cdd6f4;">C1</span><span class="m" style="left:2000px;top:830px;color:#94e2d5;">0%</span><span class="m" style="left:2024px;top:830px;color:#cdd6f4;">C6</span><span class="m" style="left:2256px;top:830px;color:#94e2d5;">4%</span><span class="m" style="left:2280px;top:830px;color:#cdd6f4;">C11</span><span class="m" style="left:2512px;top:830px;color:#94e2d5;">6%</span><span class="m" style="left:1768px;top:851px;color:#cdd6f4;">C2</span><span class="m" style="left:2000px;top:851px;color:#94e2d5;">3%</span><span class="m" style="left:2024px;top:851px;color:#cdd6f4;">C7</span><span class="m" style="left:2256px;top:851px;color:#94e2d5;">4%</span><span class="m" style="left:2280px;top:851px;color:#cdd6f4;">C12</span><span class="m" style="left:2512px;top:851px;color:#94e2d5;">4%</span><span class="m" style="left:1768px;top:872px;color:#cdd6f4;">C3</span><span class="m" style="left:2000px;top:872px;color:#94e2d5;">1%</span><span class="m" style="left:2024px;top:872px;color:#cdd6f4;">C8</span><span class="m" style="left:2256px;top:872px;color:#94e2d5;">3%</span><span class="m" style="left:2280px;top:872px;color:#cdd6f4;">C13</span><span class="m" style="left:2512px;top:872px;color:#94e2d5;">2%</span><span class="m" style="left:1768px;top:893px;color:#cdd6f4;">C4</span><span class="m" style="left:2000px;top:893px;color:#94e2d5;">3%</span><span class="m" style="left:2024px;top:893px;color:#cdd6f4;">C9</span><span class="m" style="left:2256px;top:893px;color:#94e2d5;">0%</span><span class="m" style="left:2280px;top:893px;color:#cdd6f4;">C14</span><span class="m" style="left:2512px;top:893px;color:#94e2d5;">4%</span><span class="m" style="left:2336px;top:914px;color:#cdd6f4;">Load avg: 0.58 0.38 0.77</span><span class="m" style="left:1304px;top:935px;color:#f2cdcd;">up 10:45:42</span><span class="m" style="left:1312px;top:977px;color:#89b4fa;">²</span><span class="m" style="left:1320px;top:977px;color:#cdd6f4;font-weight:bold;">mem</span><span class="m" style="left:1584px;top:977px;color:#89b4fa;font-weight:bold;">d</span><span class="m" style="left:1592px;top:977px;color:#cdd6f4;font-weight:bold;">isks</span><span class="m" style="left:1816px;top:977px;color:#89b4fa;">i</span><span class="m" style="left:1824px;top:977px;color:#cdd6f4;">o</span><span class="m" style="left:1880px;top:977px;color:#89b4fa;">⁴</span><span class="m" style="left:1888px;top:977px;color:#cdd6f4;font-weight:bold;">proc</span><span class="m" style="left:1936px;top:977px;color:#89b4fa;">f</span><span class="m" style="left:1944px;top:977px;color:#cdd6f4;">ilter</span><span class="m" style="left:2224px;top:977px;color:#cdd6f4;">per-</span><span class="m" style="left:2256px;top:977px;color:#89b4fa;">c</span><span class="m" style="left:2264px;top:977px;color:#cdd6f4;">ore</span><span class="m" style="left:2304px;top:977px;color:#89b4fa;">r</span><span class="m" style="left:2312px;top:977px;color:#cdd6f4;">everse</span><span class="m" style="left:2376px;top:977px;color:#cdd6f4;">tr</span><span class="m" style="left:2392px;top:977px;color:#89b4fa;">e</span><span class="m" style="left:2400px;top:977px;color:#cdd6f4;">e</span><span class="m" style="left:2440px;top:977px;color:#cdd6f4;font-weight:bold;">cpu lazy</span><span class="m" style="left:1304px;top:998px;color:#cdd6f4;font-weight:bold;">Total:</span><span class="m" style="left:1488px;top:998px;color:#cdd6f4;font-weight:bold;">61.4 GiB</span><span class="m" style="left:1576px;top:998px;color:#cdd6f4;font-weight:bold;">root</span><span class="m" style="left:1680px;top:998px;color:#cdd6f4;">▼4.6M</span><span class="m" style="left:1784px;top:998px;color:#cdd6f4;font-weight:bold;">720</span><span class="m" style="left:1816px;top:998px;color:#cdd6f4;font-weight:bold;">GiB</span><span class="m" style="left:1896px;top:998px;color:#cdd6f4;font-weight:bold;">Pid:</span><span class="m" style="left:1936px;top:998px;color:#cdd6f4;font-weight:bold;">Program:</span><span class="m" style="left:2072px;top:998px;color:#cdd6f4;font-weight:bold;">Command:</span><span class="m" style="left:2232px;top:998px;color:#cdd6f4;font-weight:bold;">Threads:</span><span class="m" style="left:2304px;top:998px;color:#cdd6f4;font-weight:bold;">User:</span><span class="m" style="left:2400px;top:998px;color:#cdd6f4;font-weight:bold;">MemB</span><span class="m" style="left:2488px;top:998px;color:#cdd6f4;font-weight:bold;">Cpu%</span><span class="m" style="left:1304px;top:1019px;color:#cdd6f4;">Used:</span><span class="m" style="left:1488px;top:1019px;color:#cdd6f4;">8.15</span><span class="m" style="left:1528px;top:1019px;color:#cdd6f4;">GiB</span><span class="m" style="left:1576px;top:1019px;color:#cdd6f4;">IO%</span><span class="m" style="left:1888px;top:1019px;color:#cdd6f4;">52368</span><span class="m" style="left:1936px;top:1019px;color:#89b4fa;">Isolated Web Co</span><span class="m" style="left:2072px;top:1019px;color:#cdd6f4;">/nix/store/sm8fmrf3wps4</span><span class="m" style="left:2280px;top:1019px;color:#74c7ec;">33</span><span class="m" style="left:2304px;top:1019px;color:#cdd6f4;">nambiar</span><span class="m" style="left:2400px;top:1019px;color:#74c7ec;">911M</span><span class="m" style="left:2496px;top:1019px;color:#74c7ec;">0.0</span><span class="m" style="left:1528px;top:1040px;color:#cdd6f4;">13%</span><span class="m" style="left:1576px;top:1040px;color:#cdd6f4;">Used: 52%</span><span class="m" style="left:1784px;top:1040px;color:#cdd6f4;">375 GiB</span><span class="m" style="left:1896px;top:1040px;color:#c9d2f0;">2658</span><span class="m" style="left:1936px;top:1040px;color:#88b2f6;">.firefox-wrappe</span><span class="m" style="left:2072px;top:1040px;color:#c9d2f0;">/nix/store/sm8fmrf3wps4</span><span class="m" style="left:2272px;top:1040px;color:#b4befe;">171</span><span class="m" style="left:2304px;top:1040px;color:#c9d2f0;">nambiar</span><span class="m" style="left:2400px;top:1040px;color:#74c4e8;">1.0G</span><span class="m" style="left:2496px;top:1040px;color:#74c4e8;">0.8</span><span class="m" style="left:1304px;top:1061px;color:#cdd6f4;">Available:</span><span class="m" style="left:1488px;top:1061px;color:#cdd6f4;">53.3</span><span class="m" style="left:1528px;top:1061px;color:#cdd6f4;">GiB</span><span class="m" style="left:1576px;top:1061px;color:#cdd6f4;font-weight:bold;">boot</span><span class="m" style="left:1784px;top:1061px;color:#cdd6f4;font-weight:bold;">256</span><span class="m" style="left:1816px;top:1061px;color:#cdd6f4;font-weight:bold;">MiB</span><span class="m" style="left:1880px;top:1061px;color:#c5ceeb;">176646</span><span class="m" style="left:1936px;top:1061px;color:#88b0f2;">Isolated Web Co</span><span class="m" style="left:2072px;top:1061px;color:#c5ceeb;">/nix/store/sm8fmrf3wps4</span><span class="m" style="left:2280px;top:1061px;color:#75c2e5;">30</span><span class="m" style="left:2304px;top:1061px;color:#c5ceeb;">nambiar</span><span class="m" style="left:2400px;top:1061px;color:#75c2e5;">461M</span><span class="m" style="left:2496px;top:1061px;color:#75c2e5;">0.0</span><span class="m" style="left:1528px;top:1082px;color:#cdd6f4;">87%</span><span class="m" style="left:1576px;top:1082px;color:#cdd6f4;">IO%</span><span class="m" style="left:1896px;top:1082px;color:#c2cae7;">2601</span><span class="m" style="left:1936px;top:1082px;color:#87aeee;">.Hyprland-wrapp</span><span class="m" style="left:2072px;top:1082px;color:#c2cae7;">/run/current-system/sw/</span><span class="m" style="left:2280px;top:1082px;color:#75bfe1;">27</span><span class="m" style="left:2304px;top:1082px;color:#c2cae7;">nambiar</span><span class="m" style="left:2400px;top:1082px;color:#75bfe1;">256M</span><span class="m" style="left:2496px;top:1082px;color:#75bfe1;">0.5</span><span class="m" style="left:1304px;top:1103px;color:#cdd6f4;">Cached:</span><span class="m" style="left:1488px;top:1103px;color:#cdd6f4;">31.5</span><span class="m" style="left:1528px;top:1103px;color:#cdd6f4;">GiB</span><span class="m" style="left:1576px;top:1103px;color:#cdd6f4;">Used: 73%</span><span class="m" style="left:1784px;top:1103px;color:#cdd6f4;">185 MiB</span><span class="m" style="left:1896px;top:1103px;color:#bec6e3;">2660</span><span class="m" style="left:1936px;top:1103px;color:#86acea;">.emacs-31.0.50-</span><span class="m" style="left:2072px;top:1103px;color:#bec6e3;">/nix/store/wnqz5pa8rayh</span><span class="m" style="left:2288px;top:1103px;color:#75bdde;">6</span><span class="m" style="left:2304px;top:1103px;color:#bec6e3;">nambiar</span><span class="m" style="left:2400px;top:1103px;color:#75bdde;">489M</span><span class="m" style="left:2496px;top:1103px;color:#75bdde;">0.0</span><span class="m" style="left:1528px;top:1124px;color:#cdd6f4;">51%</span><span class="m" style="left:1576px;top:1124px;color:#cdd6f4;font-weight:bold;">external</span><span class="m" style="left:1784px;top:1124px;color:#cdd6f4;font-weight:bold;">915</span><span class="m" style="left:1816px;top:1124px;color:#cdd6f4;font-weight:bold;">GiB</span><span class="m" style="left:1888px;top:1124px;color:#bac2de;">52134</span><span class="m" style="left:1936px;top:1124px;color:#85aae7;">Isolated Web Co</span><span class="m" style="left:2072px;top:1124px;color:#bac2de;">/nix/store/sm8fmrf3wps4</span><span class="m" style="left:2280px;top:1124px;color:#76bada;">33</span><span class="m" style="left:2304px;top:1124px;color:#bac2de;">nambiar</span><span class="m" style="left:2400px;top:1124px;color:#76bada;">391M</span><span class="m" style="left:2496px;top:1124px;color:#76bada;">0.0</span><span class="m" style="left:1304px;top:1145px;color:#cdd6f4;">Free:</span><span class="m" style="left:1488px;top:1145px;color:#cdd6f4;">12.8</span><span class="m" style="left:1528px;top:1145px;color:#cdd6f4;">GiB</span><span class="m" style="left:1576px;top:1145px;color:#cdd6f4;">IO%</span><span class="m" style="left:1880px;top:1145px;color:#b6beda;">176223</span><span class="m" style="left:1936px;top:1145px;color:#85a8e3;">Isolated Web Co</span><span class="m" style="left:2072px;top:1145px;color:#b6beda;">/nix/store/sm8fmrf3wps4</span><span class="m" style="left:2280px;top:1145px;color:#76b7d7;">30</span><span class="m" style="left:2304px;top:1145px;color:#b6beda;">nambiar</span><span class="m" style="left:2400px;top:1145px;color:#76b7d7;">383M</span><span class="m" style="left:2496px;top:1145px;color:#76b7d7;">0.0</span><span class="m" style="left:1528px;top:1166px;color:#cdd6f4;">21%</span><span class="m" style="left:1576px;top:1166px;color:#cdd6f4;">Used: 21%</span><span class="m" style="left:1784px;top:1166px;color:#cdd6f4;">187 GiB</span><span class="m" style="left:1880px;top:1166px;color:#b3bad6;">178294</span><span class="m" style="left:1936px;top:1166px;color:#84a6df;">Web Content</span><span class="m" style="left:2072px;top:1166px;color:#b3bad6;">/nix/store/sm8fmrf3wps4</span><span class="m" style="left:2288px;top:1166px;color:#76b5d3;">0</span><span class="m" style="left:2304px;top:1166px;color:#b3bad6;">nambiar</span><span class="m" style="left:2400px;top:1166px;color:#76b5d3;">360M</span><span class="m" style="left:2496px;top:1166px;color:#76b5d3;">0.1</span><span class="m" style="left:1888px;top:1187px;color:#afb6d1;">38936</span><span class="m" style="left:1936px;top:1187px;color:#83a4db;">kworker/u64:6-kc</span><span class="m" style="left:2288px;top:1187px;color:#77b2d0;">1</span><span class="m" style="left:2304px;top:1187px;color:#afb6d1;">root</span><span class="m" style="left:2416px;top:1187px;color:#77b2d0;">0B</span><span class="m" style="left:2496px;top:1187px;color:#77b2d0;">0.0</span><span class="m" style="left:1312px;top:1208px;color:#89b4fa;">³</span><span class="m" style="left:1320px;top:1208px;color:#cdd6f4;font-weight:bold;">net</span><span class="m" style="left:1360px;top:1208px;color:#cdd6f4;font-weight:bold;">192.168.10.165</span><span class="m" style="left:1616px;top:1208px;color:#89b4fa;">s</span><span class="m" style="left:1624px;top:1208px;color:#cdd6f4;">ync</span><span class="m" style="left:1664px;top:1208px;color:#89b4fa;font-weight:bold;">auto</span><span class="m" style="left:1712px;top:1208px;color:#89b4fa;">z</span><span class="m" style="left:1720px;top:1208px;color:#cdd6f4;">ero</span><span class="m" style="left:1768px;top:1208px;color:#89b4fa;font-weight:bold;">b</span><span class="m" style="left:1784px;top:1208px;color:#cdd6f4;font-weight:bold;">eth0</span><span class="m" style="left:1824px;top:1208px;color:#89b4fa;font-weight:bold;">n</span><span class="m" style="left:1880px;top:1208px;color:#abb2cd;">177257</span><span class="m" style="left:1936px;top:1208px;color:#83a3d7;">kworker/10:1-mm_</span><span class="m" style="left:2288px;top:1208px;color:#77b0cc;">1</span><span class="m" style="left:2304px;top:1208px;color:#abb2cd;">root</span><span class="m" style="left:2416px;top:1208px;color:#77b0cc;">0B</span><span class="m" style="left:2496px;top:1208px;color:#77b0cc;">0.0</span><span class="m" style="left:1296px;top:1229px;color:#f2cdcd;">10K</span><span class="m" style="left:1656px;top:1229px;color:#cdd6f4;font-weight:bold;">download</span><span class="m" style="left:1880px;top:1229px;color:#a7aec8;">179127</span><span class="m" style="left:1936px;top:1229px;color:#82a1d3;">btop</span><span class="m" style="left:2072px;top:1229px;color:#a7aec8;">btop</span><span class="m" style="left:2288px;top:1229px;color:#78adc9;">2</span><span class="m" style="left:2304px;top:1229px;color:#a7aec8;">nambiar</span><span class="m" style="left:2400px;top:1229px;color:#78adc9;">7.3M</span><span class="m" style="left:2496px;top:1229px;color:#78adc9;">0.0</span><span class="m" style="left:1640px;top:1250px;color:#cdd6f4;">▼</span><span class="m" style="left:1656px;top:1250px;color:#cdd6f4;">7.00 KiB/s (56.0 Kibps)</span><span class="m" style="left:1880px;top:1250px;color:#a4aac4;">178616</span><span class="m" style="left:1936px;top:1250px;color:#819fcf;">btop</span><span class="m" style="left:2072px;top:1250px;color:#a4aac4;">btop</span><span class="m" style="left:2288px;top:1250px;color:#78abc5;">2</span><span class="m" style="left:2304px;top:1250px;color:#a4aac4;">nambiar</span><span class="m" style="left:2400px;top:1250px;color:#78abc5;">7.4M</span><span class="m" style="left:2496px;top:1250px;color:#78abc5;">0.0</span><span class="m" style="left:1640px;top:1271px;color:#cdd6f4;">▼</span><span class="m" style="left:1656px;top:1271px;color:#cdd6f4;">Top:</span><span class="m" style="left:1744px;top:1271px;color:#cdd6f4;">(2.35 Mibps)</span><span class="m" style="left:1880px;top:1271px;color:#a0a6c0;">175749</span><span class="m" style="left:1936px;top:1271px;color:#819dcb;">kworker/6:2-even</span><span class="m" style="left:2288px;top:1271px;color:#78a8c2;">1</span><span class="m" style="left:2304px;top:1271px;color:#a0a6c0;">root</span><span class="m" style="left:2416px;top:1271px;color:#78a8c2;">0B</span><span class="m" style="left:2496px;top:1271px;color:#78a8c2;">0.0</span><span class="m" style="left:1640px;top:1292px;color:#cdd6f4;">▼</span><span class="m" style="left:1656px;top:1292px;color:#cdd6f4;">Total:</span><span class="m" style="left:1776px;top:1292px;color:#cdd6f4;">6.64 GiB</span><span class="m" style="left:1880px;top:1292px;color:#9ca2bb;">178248</span><span class="m" style="left:1936px;top:1292px;color:#809bc8;">Web Content</span><span class="m" style="left:2072px;top:1292px;color:#9ca2bb;">/nix/store/sm8fmrf3wps4</span><span class="m" style="left:2288px;top:1292px;color:#79a5be;">0</span><span class="m" style="left:2304px;top:1292px;color:#9ca2bb;">nambiar</span><span class="m" style="left:2400px;top:1292px;color:#79a5be;">245M</span><span class="m" style="left:2496px;top:1292px;color:#79a5be;">0.0</span><span class="m" style="left:1640px;top:1313px;color:#cdd6f4;">▲</span><span class="m" style="left:1656px;top:1313px;color:#cdd6f4;">10.2 KiB/s (82.1 Kibps)</span><span class="m" style="left:1888px;top:1313px;color:#989eb7;">13642</span><span class="m" style="left:1936px;top:1313px;color:#7f99c4;">Isolated Web Co</span><span class="m" style="left:2072px;top:1313px;color:#989eb7;">/nix/store/sm8fmrf3wps4</span><span class="m" style="left:2280px;top:1313px;color:#79a3bb;">29</span><span class="m" style="left:2304px;top:1313px;color:#989eb7;">nambiar</span><span class="m" style="left:2400px;top:1313px;color:#79a3bb;">369M</span><span class="m" style="left:2496px;top:1313px;color:#79a3bb;">0.0</span><span class="m" style="left:1640px;top:1334px;color:#cdd6f4;">▲</span><span class="m" style="left:1656px;top:1334px;color:#cdd6f4;">Top:</span><span class="m" style="left:1752px;top:1334px;color:#cdd6f4;">(891 Kibps)</span><span class="m" style="left:1896px;top:1334px;color:#959ab3;">3390</span><span class="m" style="left:1936px;top:1334px;color:#7e97c0;">WebExtensions</span><span class="m" style="left:2072px;top:1334px;color:#959ab3;">/nix/store/sm8fmrf3wps4</span><span class="m" style="left:2280px;top:1334px;color:#79a0b7;">34</span><span class="m" style="left:2304px;top:1334px;color:#959ab3;">nambiar</span><span class="m" style="left:2400px;top:1334px;color:#79a0b7;">383M</span><span class="m" style="left:2496px;top:1334px;color:#79a0b7;">0.0</span><span class="m" style="left:1640px;top:1355px;color:#cdd6f4;">▲</span><span class="m" style="left:1656px;top:1355px;color:#cdd6f4;">Total:</span><span class="m" style="left:1776px;top:1355px;color:#cdd6f4;">50.0 MiB</span><span class="m" style="left:1888px;top:1355px;color:#9196ae;">51762</span><span class="m" style="left:1936px;top:1355px;color:#7e95bc;">.emacs-31.0.50-</span><span class="m" style="left:2072px;top:1355px;color:#9196ae;">/nix/store/wnqz5pa8rayh</span><span class="m" style="left:2288px;top:1355px;color:#7a9eb4;">5</span><span class="m" style="left:2304px;top:1355px;color:#9196ae;">nambiar</span><span class="m" style="left:2400px;top:1355px;color:#7a9eb4;">254M</span><span class="m" style="left:2496px;top:1355px;color:#7a9eb4;">0.0</span><span class="m" style="left:1296px;top:1376px;color:#f2cdcd;">10K</span><span class="m" style="left:1656px;top:1376px;color:#cdd6f4;font-weight:bold;">upload</span><span class="m" style="left:1880px;top:1376px;color:#8d92aa;">176000</span><span class="m" style="left:1936px;top:1376px;color:#7d93b8;">Isolated Web Co</span><span class="m" style="left:2072px;top:1376px;color:#8d92aa;">/nix/store/sm8fmrf3wps4</span><span class="m" style="left:2280px;top:1376px;color:#7a9bb0;">31</span><span class="m" style="left:2304px;top:1376px;color:#8d92aa;">nambiar</span><span class="m" style="left:2400px;top:1376px;color:#7a9bb0;">259M</span><span class="m" style="left:2496px;top:1376px;color:#7a9bb0;">0.0</span><span class="m" style="left:1888px;top:1397px;color:#cdd6f4;font-weight:bold;">select</span><span class="m" style="left:1968px;top:1397px;color:#7f849c;font-weight:bold;">info</span><span class="m" style="left:2032px;top:1397px;color:#7f849c;font-weight:bold;">terminate</span><span class="m" style="left:2120px;top:1397px;color:#7f849c;font-weight:bold;">kill</span><span class="m" style="left:2168px;top:1397px;color:#7f849c;font-weight:bold;">signals</span><span class="m" style="left:2488px;top:1397px;color:#cdd6f4;font-weight:bold;">0/397</span><svg width="2560" height="1440" style="left:0;top:0"><path d="M1593 757L1593 775L1597 769L1606 768Z" fill="#89b4fa" stroke="#1e1e2e" stroke-width="0.8"/></svg></body></html>
